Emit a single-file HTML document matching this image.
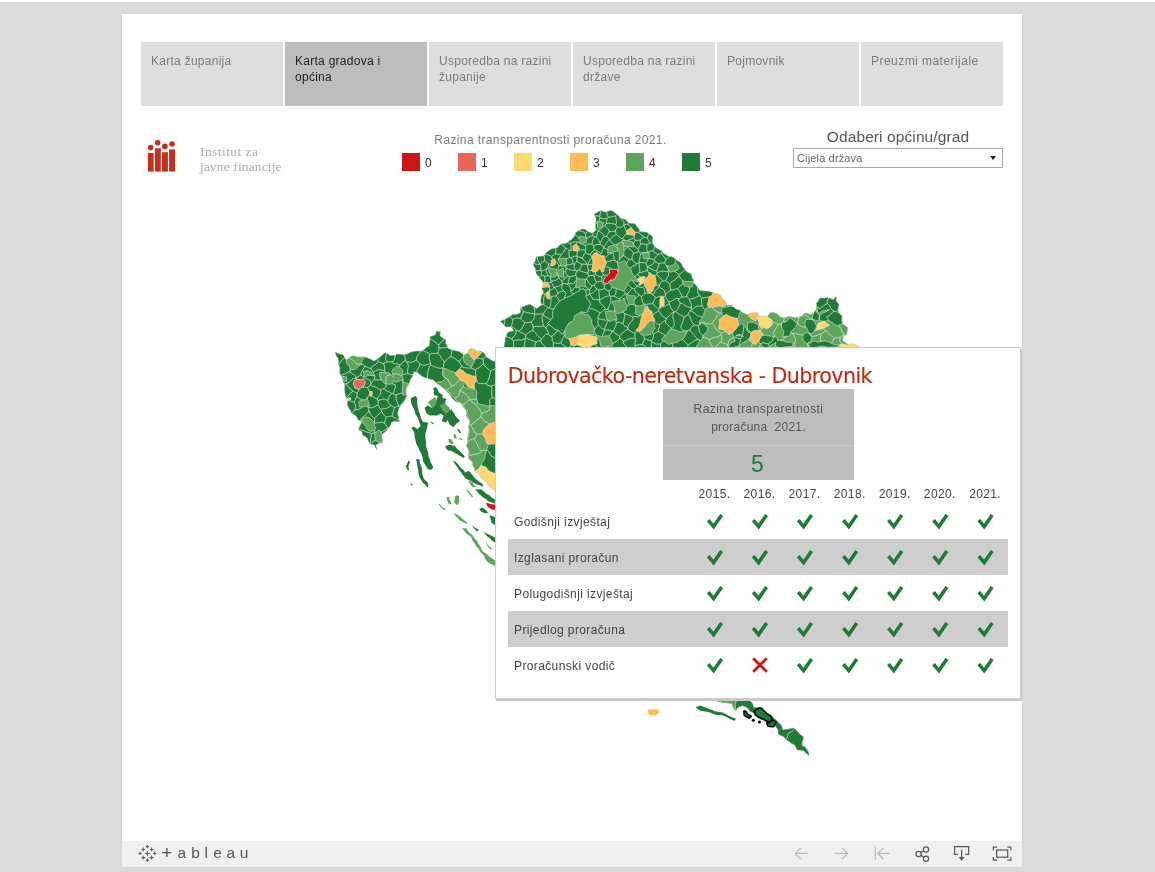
<!DOCTYPE html>
<html lang="hr">
<head>
<meta charset="utf-8">
<title>Razina transparentnosti proračuna 2021.</title>
<style>
*{box-sizing:border-box;margin:0;padding:0}
html,body{width:1155px;height:872px;overflow:hidden;background:#dbdbdb;font-family:"Liberation Sans","DejaVu Sans",sans-serif;}
#root{position:absolute;left:0;top:0;width:1155px;height:872px;will-change:transform}
#topstrip{position:absolute;left:0;top:0;width:1155px;height:2px;background:#fff;border-bottom:1px solid #d5d6d9;box-sizing:content-box}
#panel{position:absolute;left:122px;top:14px;width:900px;height:853px;background:#fff;box-shadow:0 0 0 1px #d7d7d7}
.tab{position:absolute;top:42px;width:142px;height:64px;background:#dedede;color:#7b7b7b;font-size:12px;line-height:16px;padding:11px 4px 0 10px;letter-spacing:.27px}
.tab.on{background:#bdbdbd;color:#1f1f1f}
#legtitle{position:absolute;left:400px;top:132px;width:301px;text-align:center;font-size:12px;line-height:16px;color:#7a7a7a;letter-spacing:.38px;white-space:nowrap}
.sw{position:absolute;top:153px;width:18px;height:18px}
.swl{position:absolute;top:156px;font-size:12px;line-height:14px;color:#333}
#ftitle{position:absolute;left:793px;top:127px;width:210px;text-align:center;font-size:15.5px;line-height:20px;color:#555;white-space:nowrap;letter-spacing:.1px}
#fbox{position:absolute;left:793px;top:148px;width:210px;height:20px;border:1px solid #a9a9a9;background:#fff;font-size:11px;line-height:18px;color:#666;padding-left:3px;letter-spacing:.15px}
#fbox i{position:absolute;right:6px;top:7px;width:0;height:0;border-left:3.5px solid transparent;border-right:3.5px solid transparent;border-top:4px solid #222}
#logotext{position:absolute;left:200px;top:145px;font-family:"Liberation Serif","DejaVu Serif",serif;font-size:13.3px;line-height:14.6px;color:#aaaaae;white-space:nowrap;letter-spacing:.2px}#logotext span{letter-spacing:.5px}
#toolbar{position:absolute;left:122px;top:841px;width:900px;height:26px;background:#f0f0f0}
#tip{position:absolute;left:495px;top:347px;width:526px;height:352px;background:#fff;border:1px solid #cdcdcd;box-shadow:1px 2px 0 0 #c8c8c8}
#tiptitle{position:absolute;left:507.7px;top:362.6px;font-family:"DejaVu Sans","Liberation Sans",sans-serif;font-size:20.6px;line-height:26px;letter-spacing:-.57px;color:#bb2a12;-webkit-text-stroke:.12px #bb2a12;white-space:nowrap}
#gbox{position:absolute;left:663px;top:389px;width:191px;height:91px;background:#bdbdbd}
#gbox .l{position:absolute;left:0;top:56px;width:191px;height:1px;background:#cbcbcb}
#gbox .t{position:absolute;left:0;top:11px;width:191px;text-align:center;font-size:12px;line-height:18px;color:#555;letter-spacing:.45px}#gbox .t span{letter-spacing:.25px}
#gbox .n{position:absolute;left:0;top:61px;width:189px;text-align:center;font-size:23px;line-height:28px;color:#217a37}
.yr{position:absolute;top:486px;width:46px;text-align:center;font-size:12px;line-height:16px;color:#444;letter-spacing:.38px}
.band{position:absolute;left:508px;width:500px;height:36px;background:#cecece}
.rl{position:absolute;left:514px;font-size:12px;line-height:16px;color:#444;letter-spacing:.38px;white-space:nowrap}
#tlogo span{position:absolute;top:844.1px;font-size:15.5px;line-height:18px;color:#555}
svg{position:absolute;left:0;top:0;overflow:visible}
</style>
</head>
<body>
<div id="root">
<div id="topstrip"></div>
<div id="panel"></div>

<div class="tab" style="left:141px">Karta županija</div>
<div class="tab on" style="left:285px">Karta gradova i<br>općina</div>
<div class="tab" style="left:429px">Usporedba na razini<br>županije</div>
<div class="tab" style="left:573px">Usporedba na razini<br>države</div>
<div class="tab" style="left:717px">Pojmovnik</div>
<div class="tab" style="left:861px;letter-spacing:.46px">Preuzmi materijale</div>
<svg width="1155" height="872" viewBox="0 0 1155 872" id="logo" style="z-index:1">
<g fill="#c3311d">
<rect x="147.8" y="152.9" width="5.9" height="18.7"/>
<rect x="154.9" y="148.3" width="5.9" height="23.3"/>
<rect x="162" y="152.2" width="5.9" height="19.4"/>
<rect x="169.1" y="149.4" width="5.9" height="22.2"/>
<circle cx="150.6" cy="147.6" r="2.8"/>
<circle cx="157.7" cy="142.8" r="2.8"/>
<circle cx="164.9" cy="146.4" r="2.8"/>
<circle cx="172.1" cy="144" r="2.8"/>
</g></svg>
<div id="logotext"><span>Institut za</span><br>javne financije</div>
<div id="legtitle">Razina transparentnosti proračuna 2021.</div>
<div class="sw" style="left:402px;background:#cc1719"></div><div class="swl" style="left:425px">0</div>
<div class="sw" style="left:458px;background:#e8675a"></div><div class="swl" style="left:481px">1</div>
<div class="sw" style="left:514px;background:#fedb72"></div><div class="swl" style="left:537px">2</div>
<div class="sw" style="left:570px;background:#fdbc57"></div><div class="swl" style="left:593px">3</div>
<div class="sw" style="left:626px;background:#5fa45c"></div><div class="swl" style="left:649px">4</div>
<div class="sw" style="left:682px;background:#217a37"></div><div class="swl" style="left:705px">5</div>
<div id="ftitle">Odaberi općinu/grad</div>
<div id="fbox">Cijela država<i></i></div>
<svg width="1155" height="872" viewBox="0 0 1155 872" id="map">
<g stroke-linejoin="round">
<path fill="#217a37" d="M505.8 349.7L504.7 348.0L504.2 345.9L504.5 343.5L505.1 341.5L505.2 340.0L504.8 338.8L505.7 337.5L506.7 334.8L507.7 332.3L509.7 331.6L511.8 331.3L513.7 330.7L511.9 328.1L510.9 326.4L508.8 327.0L506.5 327.1L504.9 326.3L503.9 324.5L502.2 322.8L499.8 321.5L500.9 321.0L502.2 320.5L503.7 319.7L505.4 318.9L507.1 318.1L508.8 317.0L510.6 315.9L512.0 314.9L513.1 314.4L514.0 314.4L515.4 314.6L517.9 314.0L520.4 312.7L520.6 310.6L520.7 308.6L520.8 306.9L522.1 306.9L523.8 306.4L525.7 305.6L527.7 304.9L529.5 304.3L531.1 304.9L532.2 305.5L533.3 306.2L534.8 307.3L536.8 308.6L538.2 307.5L539.3 306.4L540.6 305.7L542.1 305.2L541.3 303.6L540.7 301.7L540.7 299.6L541.0 297.5L542.0 295.3L542.7 293.7L543.3 292.6L543.7 291.5L542.6 290.2L541.9 288.6L542.0 286.7L542.7 284.9L543.2 283.0L542.4 281.1L541.0 279.6L539.9 278.3L539.2 277.2L538.5 276.2L537.4 275.2L536.3 273.6L535.7 271.6L535.5 269.7L535.1 267.9L534.2 266.3L533.3 264.9L532.8 263.6L534.2 262.7L535.1 261.8L535.3 260.5L535.6 258.7L536.3 256.7L538.5 256.5L540.3 256.3L541.9 256.2L543.6 256.0L544.7 254.6L545.8 253.0L547.0 251.9L548.2 251.2L549.5 250.3L551.0 249.0L553.5 248.4L555.6 248.2L556.8 248.1L557.8 247.2L559.3 245.6L560.7 244.2L562.0 243.6L563.5 243.7L565.1 243.7L566.9 243.0L568.5 241.6L570.0 240.5L571.4 239.7L572.2 238.7L573.6 237.2L574.9 235.4L575.4 233.7L575.6 232.4L576.8 231.8L578.5 230.9L580.2 229.7L582.0 229.0L583.9 229.0L586.3 230.1L588.0 231.2L589.6 232.3L591.8 233.0L593.6 232.4L594.7 231.3L595.7 230.4L595.7 228.6L595.6 227.1L595.5 225.9L595.5 224.5L595.8 222.6L596.1 220.3L595.9 218.1L595.2 216.4L594.5 215.2L594.3 213.9L596.3 212.9L598.4 211.6L600.3 210.8L601.9 210.7L603.4 211.4L604.5 211.9L605.9 211.9L607.5 211.5L609.3 210.8L611.3 210.4L612.9 211.2L614.1 212.0L615.2 212.9L616.7 214.1L618.4 215.5L619.8 217.0L621.1 218.2L623.1 218.9L625.2 219.3L626.5 220.2L627.1 221.5L628.3 222.5L630.3 223.3L632.9 223.7L635.2 223.8L635.9 225.0L636.7 226.3L637.9 227.6L639.0 229.0L639.5 230.4L640.4 231.7L642.6 231.8L645.0 231.9L646.6 232.2L647.5 232.6L648.4 233.5L650.1 234.7L652.2 236.0L652.6 237.6L652.5 238.8L652.3 240.0L652.4 241.5L653.1 243.3L653.9 245.4L655.0 246.5L655.8 247.6L657.1 248.6L659.1 249.6L661.1 250.4L662.0 251.1L662.2 252.0L662.9 253.1L664.9 254.2L666.8 255.3L668.1 256.1L669.2 256.4L670.8 256.6L672.7 257.1L674.3 257.9L675.4 259.1L676.7 260.3L678.7 261.4L680.6 262.8L681.8 264.1L682.1 265.3L682.4 266.6L683.7 268.0L685.2 269.6L686.4 271.3L688.0 272.5L689.9 273.2L691.2 273.9L691.5 275.4L691.9 277.1L692.8 278.8L693.5 280.5L693.6 282.4L694.3 283.6L695.2 284.7L696.5 285.8L697.6 287.1L698.4 288.6L699.6 290.3L702.1 290.8L704.3 291.0L705.9 291.0L707.2 291.1L708.6 291.3L710.4 291.8L712.2 292.3L713.8 292.9L715.2 293.2L716.5 293.3L717.8 294.1L719.4 294.7L720.6 295.5L721.1 296.5L721.7 297.5L722.8 299.1L724.6 300.6L726.1 302.2L726.7 303.7L727.0 305.1L729.1 305.0L731.5 305.3L733.2 306.3L734.5 307.5L735.8 308.7L737.9 309.4L739.7 309.8L740.5 310.3L740.8 311.3L742.4 312.4L744.8 313.5L746.8 314.2L748.0 314.6L749.4 313.6L751.5 313.0L753.7 312.7L755.8 312.4L757.7 311.9L758.1 314.1L758.8 316.1L761.4 316.3L764.2 316.1L766.3 316.0L767.7 315.9L768.7 314.4L770.8 312.5L772.6 312.4L774.5 312.8L776.3 313.5L777.8 314.3L779.1 316.0L781.4 317.5L783.7 317.7L785.8 317.4L787.4 316.9L788.3 316.5L789.2 316.5L791.1 316.7L793.5 317.4L795.8 317.7L797.9 317.3L800.2 316.6L802.4 316.1L803.4 314.5L804.1 312.9L805.9 313.2L808.4 313.7L811.0 314.3L812.7 313.4L814.0 312.5L815.1 311.1L816.1 309.3L816.2 306.8L816.0 305.2L816.0 303.8L817.5 302.0L819.0 299.4L820.4 297.7L822.7 297.9L824.9 297.9L827.3 297.5L828.8 298.0L830.2 298.5L831.8 299.0L833.6 299.5L834.8 297.9L835.9 296.2L836.3 297.8L836.2 299.4L836.1 301.1L838.7 303.7L839.0 305.4L839.0 307.1L838.4 308.9L838.1 310.0L838.4 311.6L839.8 313.6L841.6 315.3L842.2 316.7L842.2 317.7L842.1 318.9L842.1 320.3L842.4 321.9L842.6 323.6L843.9 324.5L845.4 325.9L847.9 327.3L847.3 329.7L847.3 332.2L846.8 334.0L845.5 335.2L843.5 336.3L842.8 337.9L842.7 339.7L843.3 341.5L845.1 342.3L846.3 343.3L847.4 344.3L848.9 345.1L852.4 343.0L853.9 344.5L855.3 344.7L857.2 345.4L859.7 346.6L861.6 348.5L862.6 349.9L861.2 349.6L859.6 349.0L857.6 348.5L855.3 348.3L853.4 348.4L852.0 348.8L850.7 349.1L849.5 349.3L848.1 349.3L846.3 349.3L844.5 349.3L842.9 349.3L841.7 349.2L840.5 348.9L838.8 348.6L836.4 348.3L834.1 348.4L832.3 348.7L831.0 349.3L830.1 349.8L829.1 350.0L827.5 349.7L825.4 349.1L823.4 348.4L822.0 348.0L820.9 348.1L819.6 348.6L817.6 349.3L815.2 349.8L813.1 349.8L811.4 349.6L810.3 349.1L809.6 348.7L808.4 348.5L806.6 348.6L804.5 348.7L802.6 348.9L801.2 349.0L800.0 349.1L798.4 349.2L796.4 349.4L794.3 349.5L792.3 349.4L790.8 349.1L789.8 348.6L788.9 348.2L787.5 348.1L785.6 348.5L783.7 349.2L782.0 349.8L780.4 350.0L778.7 349.8L777.0 349.2L775.2 348.5L773.5 348.1L771.7 348.1L770.3 348.5L769.2 349.1L767.9 349.5L766.3 349.7L764.7 349.5L763.1 349.2L761.3 348.9L759.3 348.8L757.3 348.7L755.7 348.7L754.3 348.7L752.8 348.7L751.4 348.8L749.9 349.1L748.3 349.5L746.7 349.7L745.3 349.7L744.0 349.3L742.4 348.6L740.3 348.1L738.0 348.0L736.1 348.4L734.7 349.0L733.5 349.7L732.4 350.0L731.0 349.9L729.1 349.3L727.2 348.7L725.6 348.2L724.5 348.2L723.3 348.5L721.5 349.0L719.1 349.3L716.8 349.4L715.1 349.4L713.8 349.3L712.9 349.2L711.9 349.1L710.3 349.0L708.2 348.8L706.2 348.5L704.8 348.4L703.7 348.6L702.3 349.0L700.3 349.5L698.0 349.9L695.9 349.9L694.2 349.4L693.2 348.7L692.4 348.1L691.2 348.0L689.4 348.3L687.3 348.9L685.4 349.6L684.0 349.9L682.7 349.8L681.0 349.4L679.0 348.8L677.1 348.5L675.2 348.4L673.7 348.6L672.6 348.8L671.6 349.0L670.2 349.1L668.4 349.2L666.5 349.3L664.8 349.4L663.1 349.4L661.4 349.2L659.6 348.8L658.0 348.4L656.3 348.2L654.7 348.3L653.3 348.8L652.0 349.4L650.5 349.9L649.0 350.0L647.5 349.6L646.0 348.9L644.1 348.2L642.0 348.0L640.0 348.2L638.4 348.8L637.1 349.4L635.7 349.7L634.3 349.7L632.8 349.4L631.0 349.0L629.4 348.7L628.1 348.6L626.8 348.7L625.3 348.7L623.1 348.8L620.7 348.9L618.8 349.0L617.4 349.3L616.3 349.5L615.3 349.6L613.9 349.4L611.9 349.0L609.9 348.4L608.3 348.1L607.2 348.1L606.1 348.7L604.2 349.4L601.9 349.9L599.6 350.0L597.8 349.7L596.6 349.0L595.8 348.4L594.8 348.1L593.1 348.3L591.0 348.7L589.0 349.2L587.5 349.5L586.4 349.5L585.0 349.4L583.0 349.2L580.8 349.0L578.7 348.9L577.1 348.8L576.0 348.7L575.2 348.6L573.9 348.6L572.1 348.8L570.1 349.2L568.3 349.6L566.8 349.8L565.3 349.7L563.6 349.1L561.8 348.5L559.9 348.0L558.0 348.0L556.6 348.5L555.5 349.2L554.3 349.8L552.8 350.0L551.2 349.7L549.4 349.1L547.7 348.6L545.9 348.3L544.0 348.4L542.2 348.7L540.7 349.0L539.1 349.2L537.6 349.3L536.2 349.3L534.7 349.3L533.2 349.3L531.7 349.2L530.4 349.0L528.8 348.7L526.9 348.4L524.6 348.3L522.6 348.6L521.1 349.1L519.8 349.7L518.6 350.0L517.3 349.8L515.6 349.3L513.7 348.6L512.0 348.0L510.8 348.0L509.7 348.4L508.1 349.1ZM335.8 352.0L337.3 353.1L339.9 354.0L342.9 354.7L343.9 356.0L344.4 357.3L345.1 358.6L346.3 359.8L348.0 359.0L349.4 357.6L350.9 356.3L352.5 355.7L354.0 356.0L355.3 356.2L356.8 356.8L358.8 357.0L361.1 357.0L363.1 356.8L364.6 356.8L365.9 357.3L367.6 357.9L369.6 358.7L371.7 359.7L373.6 360.9L375.3 360.3L376.8 359.3L377.9 358.4L379.7 357.5L381.8 355.6L383.8 353.6L385.1 352.6L387.1 353.4L388.5 354.3L389.2 354.9L390.1 355.4L391.8 355.5L393.9 355.5L395.6 355.3L396.9 354.2L398.8 353.9L401.1 354.3L403.1 354.8L405.1 354.7L407.2 354.0L408.9 353.1L410.0 352.5L411.1 352.1L412.4 351.8L414.1 351.4L416.4 351.0L418.9 350.9L420.8 351.0L422.1 350.9L423.4 350.1L424.9 348.9L426.3 347.4L427.9 346.6L429.5 345.9L429.5 344.6L429.7 342.8L429.8 340.7L429.9 338.6L430.2 336.7L431.6 336.1L433.3 335.7L435.3 334.9L436.1 332.8L436.2 331.1L438.2 331.8L440.5 331.7L440.1 333.8L440.1 335.9L441.3 337.0L443.1 338.1L444.9 339.2L445.8 340.2L445.5 341.8L445.6 343.2L446.3 344.4L447.2 346.0L448.0 348.2L449.7 348.9L451.4 349.6L453.3 350.2L455.0 350.6L456.7 350.9L458.4 351.2L460.0 352.1L461.7 353.1L462.8 354.2L463.6 355.3L465.2 354.3L466.8 353.5L468.2 353.1L468.4 351.3L468.4 349.3L470.0 348.9L471.5 348.0L472.8 348.8L474.7 349.4L476.3 350.1L477.5 351.0L479.2 351.0L481.0 351.6L483.0 352.3L484.6 353.7L485.2 355.0L485.7 356.3L487.1 357.6L489.3 358.7L491.0 359.9L492.5 360.9L494.5 361.6L496.3 362.0L497.6 361.2L499.0 361.0L499.4 362.9L500.1 365.2L500.8 367.5L501.0 369.2L500.6 370.6L499.9 371.6L499.3 372.6L499.1 373.9L499.5 375.7L500.0 377.6L500.4 379.3L500.5 380.9L500.4 382.5L500.2 384.3L500.0 386.1L499.9 388.0L499.7 389.7L499.6 391.2L499.6 392.3L499.8 393.5L500.2 394.8L500.7 396.2L500.8 397.9L500.5 400.1L499.8 402.4L499.1 404.4L499.0 406.0L499.4 407.2L500.2 408.3L500.9 409.4L501.0 410.9L500.5 412.8L499.8 414.6L499.3 416.1L499.3 417.6L499.6 419.3L500.0 421.2L500.3 423.1L500.4 425.0L500.3 426.7L500.2 427.9L500.1 428.9L500.0 430.1L499.7 431.5L499.5 433.1L499.4 435.0L499.7 437.2L500.3 439.4L500.8 441.2L500.9 442.6L500.4 443.8L499.7 445.0L499.1 446.3L499.0 447.9L499.5 449.8L500.3 451.4L500.9 452.8L500.9 454.3L500.4 456.2L499.8 458.2L499.4 460.2L499.4 462.0L499.7 463.5L500.0 464.5L500.2 465.5L500.3 466.8L500.3 468.3L500.3 470.1L500.3 472.1L500.1 474.3L499.7 476.4L499.3 478.0L499.3 479.3L499.7 480.5L500.4 481.8L500.9 483.2L500.9 485.0L500.4 486.7L499.6 488.2L499.0 489.5L499.1 491.1L499.6 493.1L500.4 495.2L498.3 493.6L496.8 492.1L495.8 491.4L494.7 490.7L493.0 489.8L491.4 488.6L490.2 487.2L489.1 485.9L487.8 484.6L486.9 483.4L486.2 482.2L485.0 480.9L483.0 479.6L481.0 477.9L479.8 476.0L479.1 474.3L477.8 473.2L476.0 472.5L474.8 471.4L474.6 469.8L474.1 468.1L473.3 466.6L472.5 465.2L472.3 463.8L472.2 462.3L471.3 461.0L469.7 459.7L468.4 458.2L468.1 456.3L468.7 454.0L469.0 451.8L468.5 449.9L467.5 448.0L466.7 446.5L466.4 445.3L466.8 444.4L467.1 443.0L467.4 441.0L467.6 438.6L467.8 436.2L468.3 434.3L468.7 432.9L468.9 431.4L468.9 429.7L468.8 428.1L468.4 426.4L468.8 424.8L469.6 423.2L469.8 421.3L468.4 418.9L466.6 416.6L466.1 414.6L466.5 412.7L466.5 410.7L465.3 409.1L463.9 407.7L463.0 406.3L462.3 404.9L461.3 403.4L459.3 402.6L457.8 402.2L456.9 401.9L455.8 401.4L454.1 400.3L452.2 398.2L451.1 396.4L450.5 395.0L449.6 393.7L448.2 392.5L446.7 391.2L445.2 389.9L443.6 388.6L442.2 387.5L441.2 386.6L440.5 385.8L439.2 385.1L437.3 384.1L435.8 382.6L434.6 381.2L433.5 380.2L432.1 379.6L430.7 379.4L429.7 379.1L428.3 378.5L426.3 378.0L424.1 377.3L422.2 376.4L420.8 375.4L419.8 374.4L418.6 373.4L417.1 372.6L415.4 372.1L413.8 371.7L413.1 374.2L412.3 376.5L411.4 378.0L410.4 379.2L409.9 381.3L409.2 383.5L408.4 385.1L407.5 386.4L406.7 388.0L406.2 390.3L406.2 392.6L406.5 394.2L406.9 395.5L406.5 396.3L405.8 397.7L404.9 399.7L403.6 401.8L402.3 403.5L400.9 404.6L400.3 405.9L399.4 407.6L398.7 409.5L398.0 411.4L397.7 413.2L398.0 415.1L398.5 416.4L398.8 417.9L399.1 419.7L399.7 421.8L397.9 421.5L396.0 421.2L394.5 421.2L393.1 421.7L391.4 422.5L390.8 424.7L389.9 426.5L388.8 427.7L387.7 428.7L386.5 430.3L385.1 431.8L383.7 433.0L382.5 433.9L381.7 435.3L382.0 437.4L382.4 439.7L382.5 441.7L382.1 443.2L379.5 443.1L377.5 443.9L375.7 445.2L376.4 447.4L376.9 449.1L376.7 450.3L376.2 448.7L374.9 446.8L373.9 444.6L371.7 444.4L369.5 443.5L368.7 442.1L368.1 440.3L367.4 438.5L366.0 437.0L364.1 436.1L362.7 435.0L362.3 433.5L361.8 431.6L358.4 430.1L359.0 427.8L360.3 425.2L361.5 423.2L362.0 421.9L360.7 421.1L358.9 420.3L357.6 418.9L356.7 417.0L355.3 415.4L353.2 414.1L351.5 413.0L351.0 411.8L350.9 410.7L349.8 409.5L348.8 407.9L347.8 406.3L347.4 404.5L347.4 402.4L347.3 400.7L346.6 399.6L346.0 398.2L345.6 396.5L345.4 395.2L345.0 393.6L344.6 391.3L344.7 388.8L344.6 386.8L344.9 385.1L344.7 383.9L343.8 382.7L342.9 381.2L342.5 379.3L342.2 377.7L341.4 376.1L340.3 374.5L339.7 372.5L339.8 370.4L339.9 368.7L339.6 367.2L338.9 365.4L338.5 363.3L338.5 361.3L338.4 359.7L337.7 358.0L336.6 356.2L335.7 354.7L335.5 353.3ZM712.1 699.5L714.1 699.8L715.5 699.7L716.8 699.3L718.3 698.9L720.0 698.6L721.6 698.6L723.0 698.7L724.5 698.8L726.0 698.9L727.5 699.0L729.5 699.1L731.7 699.4L733.7 699.6L735.4 699.5L737.0 699.2L738.5 698.6L739.8 698.2L741.1 698.1L742.5 698.5L744.3 699.2L746.1 699.8L747.8 700.0L749.6 699.8L750.6 701.4L752.0 703.0L753.1 704.5L753.4 706.0L753.9 707.5L755.8 707.6L757.9 707.4L760.1 707.1L762.0 707.3L763.3 708.8L764.8 710.7L766.1 712.1L766.9 712.9L768.2 713.6L770.0 714.4L771.6 715.4L772.6 716.5L773.3 717.6L774.4 718.7L775.7 719.8L776.9 721.0L778.1 722.3L779.8 723.6L781.3 725.2L782.1 727.1L782.4 728.8L783.1 729.9L784.9 729.4L787.3 729.1L790.0 728.8L792.1 728.3L793.5 727.7L794.6 728.8L796.0 730.0L797.4 731.0L798.1 732.1L798.6 733.0L799.7 734.0L801.4 735.2L803.2 736.5L803.4 738.9L802.8 741.1L802.2 743.0L802.0 744.6L802.6 745.9L804.4 746.6L805.4 747.3L806.2 748.6L807.3 750.2L808.5 752.1L809.1 753.9L808.9 756.1L807.9 754.8L806.4 753.5L804.7 752.1L803.7 750.9L802.4 750.5L799.8 750.3L797.0 749.9L796.1 748.6L795.8 746.7L794.5 745.1L792.6 744.0L791.2 743.3L790.2 742.5L788.7 741.4L786.8 740.2L785.5 739.0L784.7 737.8L783.3 736.6L780.2 735.3L778.1 733.9L778.2 732.1L778.0 730.0L776.6 727.8L775.3 726.3L773.8 726.4L772.5 726.4L770.9 726.1L768.9 725.7L767.5 724.4L766.7 723.0L765.6 721.8L763.8 720.6L761.6 719.7L759.8 718.8L758.7 718.0L757.8 717.1L756.4 716.3L755.0 715.6L754.3 714.2L753.3 713.1L751.6 712.1L750.0 711.4L749.0 710.0L747.9 708.5L746.2 707.3L744.2 706.4L742.5 705.7L740.1 706.7L737.9 707.5L736.6 709.2L735.4 710.9L734.3 709.2L733.1 707.3L732.3 705.4L732.1 703.8L730.2 703.5L728.3 703.3L726.4 703.0L724.6 702.8L722.9 702.7L721.5 702.3L720.2 702.0L718.7 701.7L716.9 701.4L715.5 701.0L714.2 700.3Z"/>
<path fill="#217a37" fill-rule="evenodd" stroke="#dce8dc" stroke-width="0.44" d="M827.5 303.6L827.1 302.4L827.0 301.3L827.6 299.9L828.8 298.0L827.2 297.5L824.9 297.9L822.7 297.9L820.4 297.7L819.0 299.4L817.5 302.0L816.0 303.8L816.4 305.1L816.8 306.4L818.6 307.8L819.1 308.8L820.3 308.3L821.8 307.3L823.7 305.8L825.8 304.3ZM834.1 311.2L835.8 311.3L836.5 311.5L837.2 312.0L839.0 312.7L838.1 310.4L838.4 308.8L839.0 307.1L839.0 305.4L838.7 303.7L836.1 301.1L836.2 299.4L836.3 297.8L835.9 296.2L834.8 297.9L833.6 299.5L831.8 299.0L830.2 298.5L828.8 298.0L827.6 299.9L827.0 301.3L827.1 302.4L827.5 303.6L829.1 305.0L830.2 306.7L830.9 308.6L832.3 310.2ZM817.0 309.2L817.3 310.8L817.5 311.9L819.2 313.5L821.1 311.9L822.8 311.1L824.4 310.5L826.7 310.2L829.3 309.7L827.4 310.9L825.6 311.9L824.4 312.4L823.5 312.7L822.4 313.2L821.2 314.2L819.7 315.5L819.5 318.2L819.0 320.5L820.5 320.9L822.2 321.2L824.2 321.4L826.6 321.1L828.6 321.0L828.2 319.5L827.7 318.2L826.6 316.9L827.2 316.6L828.4 315.9L830.5 314.3L832.5 312.4L834.1 311.2L832.3 310.2L830.9 308.6L830.2 306.7L829.1 305.0L827.5 303.6L825.8 304.3L823.7 305.8L821.8 307.3L820.3 308.3L819.1 308.8L818.6 307.8L816.8 306.4ZM826.6 316.9L827.7 318.2L828.2 319.5L828.6 321.0L829.2 321.1L830.9 322.0L832.8 323.1L834.5 324.2L835.7 325.1L836.7 325.8L838.3 325.4L840.4 324.6L842.6 323.6L842.4 321.9L842.1 320.3L842.0 318.8L842.2 317.7L842.2 316.7L841.6 315.3L839.0 312.7L837.2 312.0L836.5 311.5L835.8 311.3L834.1 311.2L832.5 312.4L830.5 314.3L828.4 315.9L827.2 316.6ZM813.7 312.8L813.2 314.3L812.5 315.9L812.3 317.7L812.9 319.5L815.7 320.4L818.1 321.3L818.8 319.6L819.3 317.7L819.7 315.5L818.2 314.1L817.0 312.9L816.7 311.9L816.8 310.9L816.1 309.3L815.0 311.3ZM723.1 316.4L724.9 315.5L726.3 314.6L727.5 315.2L728.7 315.9L730.4 316.7L732.2 317.3L733.7 317.8L734.8 318.1L736.3 318.3L738.7 318.3L738.9 315.8L739.3 314.0L739.9 312.7L740.8 311.2L740.5 310.3L739.7 309.8L737.9 309.4L735.9 308.7L734.5 307.5L733.4 306.9L732.2 306.5L730.1 306.4L727.6 306.7L725.5 307.1L724.1 307.4L723.1 307.5L722.2 308.7L721.5 310.2L721.7 312.2L722.5 314.4ZM733.4 337.0L733.6 337.5L733.8 337.4L734.7 339.6L734.9 341.6L733.1 341.9L731.0 342.7L729.6 344.3L729.0 345.8L728.1 346.8L729.6 347.5L731.1 347.8L733.1 347.6L735.0 347.1L736.6 346.7L739.2 345.6L739.5 343.9L740.1 341.5L740.5 338.9L738.8 338.4L736.9 338.0L735.3 337.6ZM733.2 336.5L733.4 337.0L735.3 337.6L736.9 338.0L738.8 338.4L740.5 338.9L741.6 337.5L742.0 336.0L740.0 335.6L737.8 335.6L735.8 336.0L737.8 334.7L740.1 334.4L742.1 335.6L742.6 334.2L743.0 332.3L743.4 330.2L743.7 328.2L743.8 326.6L743.9 325.1L742.2 324.1L741.5 323.1L740.2 324.3L739.0 325.2L737.6 326.6L736.4 328.4L735.1 329.9L733.8 330.9L732.7 332.1L732.8 334.1L733.3 336.5ZM739.2 345.6L741.1 344.4L743.0 342.8L744.6 341.8L746.1 341.4L746.7 340.3L747.8 339.1L749.3 337.9L750.5 336.6L751.0 335.2L750.5 333.6L749.6 332.2L749.1 332.9L747.4 331.0L746.2 328.4L745.3 326.5L743.9 325.1L743.8 326.6L743.7 328.2L743.4 330.2L743.0 332.3L742.6 334.2L742.1 335.6L743.4 336.4L742.0 336.0L741.6 337.5L740.5 338.9L740.1 341.5L739.5 343.9ZM499.8 321.5L502.5 323.0L504.2 324.9L504.7 323.0L504.9 321.1L504.7 319.2L502.8 320.2L501.2 320.9ZM587.7 231.0L586.1 230.0L583.9 229.0L581.3 229.2L578.8 230.6L581.3 231.3L583.8 232.2L585.7 233.5L586.7 231.9ZM666.0 259.3L667.4 258.4L668.6 257.3L669.7 256.5L668.4 256.2L667.1 255.5L665.1 254.3L662.9 253.1L662.1 251.8L661.6 252.9L662.4 254.9L664.4 257.3ZM591.9 256.9L591.3 258.1L590.3 259.6L588.9 262.0L587.4 264.7L587.5 264.8L589.9 264.6L592.9 264.1L592.9 261.3L592.3 259.4L592.4 257.1ZM633.4 244.4L633.7 243.1L634.3 241.8L635.2 240.4L634.1 237.9L632.0 238.8L630.1 239.3L628.9 239.8L627.7 240.7L629.2 241.1L630.5 241.7L632.6 242.2L633.2 244.5ZM600.9 210.7L598.9 211.4L596.6 212.7L594.3 213.9L594.8 215.7L596.5 215.8L598.3 216.1L599.6 216.4L600.2 214.2L600.7 212.2ZM637.3 286.2L638.5 286.7L639.9 287.2L642.5 287.5L644.7 285.5L644.3 283.3L644.2 281.2L643.9 279.9L643.7 282.6L642.0 283.7L640.7 284.6L639.5 285.2L639.9 283.3L638.7 284.7ZM601.2 228.3L600.2 228.3L599.0 227.9L597.3 227.4L597.5 226.3L597.5 224.9L597.3 223.0L595.7 223.0L595.5 224.8L595.5 226.1L595.7 227.3L595.7 228.9L597.1 229.7L598.6 230.6L599.8 229.7ZM548.3 266.0L546.3 269.0L546.2 270.7L546.6 272.2L547.4 273.8L548.2 275.7L550.6 277.2L551.0 276.9L550.8 274.9L549.8 272.6L548.6 270.4L547.9 268.5L550.6 268.1L549.3 267.0ZM644.9 293.2L646.7 293.1L648.9 293.4L651.2 293.7L651.6 291.7L648.2 292.8L647.3 290.7L646.8 289.0L646.3 287.8L645.0 286.6L644.7 285.5L642.5 287.5L643.9 288.5L644.6 289.6L644.7 291.2ZM541.1 270.8L540.6 270.4L538.0 270.7L535.6 271.1L536.1 273.2L537.2 274.9L538.4 276.0L539.2 277.0L541.4 275.1L541.4 273.6L541.4 272.3ZM544.3 276.2L541.4 275.1L539.2 277.0L539.8 278.2L540.9 279.7L542.4 281.3L543.2 283.0L542.8 284.5L543.0 284.3L543.3 283.0L544.2 282.8L544.9 280.7L544.9 278.6ZM580.0 290.4L581.6 289.3L583.5 288.7L584.4 290.0L587.0 289.9L589.3 289.6L587.2 288.0L585.2 286.4L585.3 286.8L583.5 286.4L582.2 286.1L580.9 286.1L579.3 286.6L579.6 288.4ZM587.5 264.8L587.4 266.8L587.9 268.4L588.5 270.1L590.2 270.7L592.0 270.6L592.2 267.5L592.9 264.1L589.9 264.6ZM603.3 275.0L601.7 276.9L602.0 279.4L601.6 281.4L602.4 282.6L603.2 283.7L604.2 284.8L606.4 283.4L603.6 282.6L603.3 280.4L604.5 278.7L605.6 276.8L606.8 275.5L606.3 274.9ZM600.1 217.9L599.6 216.4L598.3 216.1L596.5 215.8L594.8 215.7L595.5 217.0L596.0 218.7L596.1 220.9L595.7 223.0L597.3 223.0L597.2 221.6L598.9 221.8L599.3 220.0ZM589.6 294.1L589.3 293.1L589.6 292.3L589.9 291.2L589.5 289.6L587.1 289.9L584.4 290.0L586.1 292.5L586.2 294.4L585.9 296.2L587.5 295.1L589.5 294.5ZM649.5 242.9L650.8 243.1L652.9 243.0L652.3 240.9L652.4 239.3L652.7 237.8L652.2 236.0L649.3 234.2L648.1 235.6L647.2 237.6L648.6 240.5ZM537.5 256.6L536.3 256.7L535.6 258.5L535.4 260.3L535.1 261.6L534.4 262.5L533.2 263.3L535.0 263.8L536.8 264.3L538.4 264.5L539.9 264.3L538.6 262.1L537.5 259.9L537.4 258.2ZM627.8 224.3L626.0 224.3L624.1 225.3L624.8 227.9L626.0 230.4L626.7 232.4L626.4 233.9L627.1 234.0L627.3 232.7L626.4 230.9L628.3 229.7L629.8 228.5L630.9 228.1L631.7 228.4L631.0 227.1L629.6 225.8ZM545.1 294.2L543.1 292.9L542.6 293.9L541.9 295.4L541.0 297.5L540.7 299.9L540.9 302.4L541.7 304.4L543.7 304.5L543.7 302.0L543.6 299.3L543.9 297.2L544.4 295.7ZM550.6 277.2L550.4 279.1L551.2 281.0L553.5 280.8L555.9 280.2L557.7 279.1L558.8 278.0L558.3 276.1L557.6 274.6L557.1 273.6L555.9 273.0L556.1 274.1L557.0 275.4L555.5 276.1L554.1 276.8L552.5 277.1L551.0 276.9ZM571.7 257.8L572.3 259.8L572.8 261.8L572.9 263.8L574.3 264.1L575.9 262.6L576.8 261.0L577.0 258.6L577.3 256.4L577.0 256.1L574.6 256.2L572.9 256.8ZM575.3 250.7L573.1 249.5L573.1 246.2L574.3 244.9L576.1 244.3L577.3 242.0L575.4 241.9L573.9 241.8L572.9 242.0L571.8 242.6L570.2 243.4L571.1 245.5L571.2 247.4L571.0 248.9L571.1 250.4ZM627.8 224.3L629.1 222.9L627.1 221.5L626.4 220.1L625.1 219.3L622.9 218.8L620.9 218.1L619.6 216.8L620.3 218.5L621.5 219.6L623.2 220.5L624.1 221.9L623.9 223.5L624.2 225.2L626.0 224.2ZM590.2 254.5L591.3 255.6L591.9 256.9L592.4 257.1L593.0 255.1L594.2 253.2L597.2 252.7L598.9 255.0L599.6 255.2L600.9 253.4L599.1 252.1L597.8 251.2L596.5 250.6L594.4 250.0L592.8 251.2L591.2 252.8ZM547.9 283.1L549.1 285.1L550.0 287.0L548.4 286.8L549.4 288.4L549.4 290.7L550.9 289.9L552.3 289.3L553.2 288.3L553.7 287.0L552.9 285.3L552.2 283.8L550.9 282.4ZM595.3 236.9L596.0 237.0L596.8 235.3L597.1 233.3L597.7 231.7L598.6 230.6L597.1 229.7L595.7 228.9L595.7 230.4L594.5 231.5L592.9 232.7L593.0 234.6L592.3 235.9ZM595.4 274.3L596.8 275.5L599.0 276.5L601.7 276.9L603.3 275.0L602.5 273.2L602.1 271.3L601.2 271.3L600.8 269.7L600.3 268.2L598.7 269.6L596.9 271.4L595.7 271.6ZM561.8 281.0L562.9 279.7L564.1 279.2L565.2 278.7L566.3 277.6L567.5 275.9L566.3 273.8L565.4 271.5L563.4 272.0L563.6 274.9L564.2 277.6L562.1 277.0L560.5 276.3L559.0 276.0L558.3 274.5L557.7 273.5L557.1 273.6L557.6 274.6L558.3 276.1L558.8 278.0L560.0 279.5ZM585.6 236.6L586.0 237.1L586.6 237.0L586.6 237.8L587.1 238.3L588.7 237.2L590.3 236.4L592.3 235.9L593.0 234.6L592.9 232.7L591.8 233.0L589.4 232.2L587.7 231.0L586.7 231.9L585.7 233.5ZM546.3 294.2L546.6 292.3L547.7 291.7L549.1 291.4L549.4 290.7L549.4 288.4L548.4 286.8L545.2 287.0L542.3 287.7L542.4 286.0L543.0 284.3L542.8 284.5L542.1 286.5L541.9 288.4L542.6 290.1L543.7 291.5L543.1 292.9L545.1 294.2ZM541.1 270.8L541.4 272.3L541.4 273.6L541.4 275.1L544.3 276.2L548.2 275.7L547.4 273.8L546.6 272.2L546.2 270.7L546.3 269.0L544.7 270.1L543.2 270.6ZM589.5 289.6L591.0 287.6L592.0 285.6L590.3 284.3L588.8 283.0L588.0 281.6L587.3 280.2L586.3 279.0L585.3 279.6L585.3 281.4L585.2 283.2L585.0 284.8L585.2 286.4L587.3 288.0ZM636.7 286.4L637.3 286.2L638.7 284.7L639.9 283.3L639.1 281.1L637.5 278.9L640.6 277.3L638.5 275.6L637.7 274.3L636.9 274.7L635.0 277.1L635.8 278.4L636.8 280.0L638.5 281.7L636.2 281.2L634.4 280.8L632.7 280.3L633.2 281.8L634.3 283.3L635.9 284.8ZM640.4 231.7L639.6 230.6L638.8 232.1L639.7 233.7L641.5 235.1L643.1 236.1L643.3 237.2L644.1 237.3L645.3 237.5L647.2 237.6L648.1 235.6L649.3 234.2L647.9 233.0L647.0 232.3L645.4 232.0L642.9 231.8ZM652.6 294.8L654.0 293.4L654.6 291.7L655.3 290.4L656.5 289.5L657.8 288.4L659.1 286.7L659.5 284.9L658.0 285.2L655.6 285.2L654.5 286.7L653.7 287.8L653.5 289.4L652.8 290.6L651.6 291.7L651.2 293.7ZM612.1 331.0L609.9 330.2L607.4 329.9L605.2 329.9L604.4 331.2L603.6 332.4L602.9 334.2L602.2 336.4L604.5 336.2L606.3 336.0L607.5 335.9L608.6 336.1L610.1 334.6L611.4 333.1ZM540.4 264.4L539.9 264.3L538.4 264.5L536.8 264.3L535.0 263.8L533.2 263.3L532.8 263.6L533.4 265.1L534.6 266.9L535.4 268.9L535.6 271.1L538.0 270.7L540.6 270.4L540.6 269.0L540.8 267.7L540.7 266.3ZM593.9 344.5L592.7 345.0L591.3 346.0L589.6 347.5L588.0 348.0L586.0 347.8L583.1 346.9L582.9 348.8L583.1 349.2L585.2 349.4L586.6 349.6L587.8 349.5L589.5 349.1L591.7 348.5L593.8 348.1L595.3 348.2L596.1 348.7L597.2 349.4L597.3 346.5L595.9 345.3ZM594.0 275.4L594.7 274.7L595.4 274.3L595.7 271.6L593.1 272.1L592.0 270.6L590.2 270.7L588.5 270.1L587.9 273.1L588.3 274.7L588.7 276.0L590.7 275.6L592.6 275.3ZM540.4 264.4L541.7 262.9L543.1 261.4L544.7 260.8L544.7 259.2L544.4 257.4L544.3 255.1L543.6 256.0L542.1 256.1L540.7 256.2L539.3 256.4L537.5 256.6L537.4 258.2L537.5 259.9L538.6 262.1L539.9 264.3ZM625.3 293.7L623.9 294.6L622.4 296.1L620.9 297.6L619.2 298.7L619.7 300.7L621.4 300.2L622.7 299.3L624.2 298.1L624.6 300.5L625.7 302.8L626.8 304.7L627.1 306.2L629.1 304.8L629.0 302.9L628.2 300.8L627.1 298.9L626.4 297.2L626.3 295.7L626.4 294.1ZM629.1 259.2L626.9 257.6L625.0 256.3L623.6 255.6L622.3 256.4L621.0 257.8L619.6 259.6L618.3 261.1L617.0 262.1L618.2 262.9L619.8 262.6L621.8 261.8L624.2 260.8L625.8 262.1L626.5 263.4L627.6 261.3L628.5 260.2ZM627.5 284.1L626.8 285.8L626.0 287.7L625.1 289.5L624.2 290.7L623.3 290.6L624.1 291.5L624.7 292.3L625.3 293.7L626.4 294.1L626.5 293.8L626.8 294.0L628.2 293.0L629.7 291.4L631.1 289.6L632.1 288.2L630.3 286.7L628.7 285.5ZM577.0 271.0L578.4 270.3L580.0 268.9L581.1 266.7L581.8 264.3L579.8 263.2L577.9 262.1L576.8 261.0L575.9 262.6L574.3 264.1L574.2 265.8L574.2 267.4L574.7 268.9L575.4 270.3ZM575.4 270.3L574.7 268.9L574.2 267.4L574.2 265.8L574.3 264.1L572.9 263.8L570.5 264.3L568.3 264.6L566.5 265.0L565.7 266.3L566.3 268.3L568.1 269.0L569.6 269.6L571.1 270.1L573.0 270.3ZM555.3 262.0L555.0 264.7L552.7 265.7L550.7 265.7L551.6 263.7L549.9 264.0L548.4 263.9L548.3 266.0L549.3 267.0L550.6 268.1L552.3 268.6L554.4 269.1L556.9 269.4L556.8 269.9L558.4 267.9L559.1 265.5L557.0 262.3ZM640.5 240.1L639.5 240.1L637.6 240.3L635.2 240.4L634.3 241.8L633.7 243.1L633.4 244.4L634.7 245.9L635.7 247.3L637.8 248.8L638.7 247.6L639.8 245.9L640.9 243.8L640.2 241.9ZM557.1 273.6L557.7 273.5L557.8 272.2L558.6 270.2L560.1 269.7L561.6 269.0L563.2 268.5L563.2 270.1L563.4 272.0L565.4 271.5L565.8 269.7L566.3 268.3L565.7 266.3L563.8 265.7L561.4 266.4L561.3 265.4L559.1 265.5L558.4 267.9L556.8 269.9L556.3 271.6L555.9 273.0ZM600.1 242.7L601.2 241.0L602.2 239.1L603.2 237.5L604.3 236.3L603.2 234.4L600.8 232.4L598.6 230.8L597.7 231.8L597.2 233.5L596.8 235.4L596.0 237.0L597.7 238.5L598.8 240.1L599.4 241.5ZM634.3 349.7L635.7 349.7L637.2 349.4L638.6 348.7L640.3 348.1L642.4 348.0L644.6 348.4L646.5 349.1L648.1 349.8L646.9 348.0L645.1 346.3L643.3 345.1L642.0 344.5L640.6 344.7L639.0 344.8L637.2 345.1L635.1 345.5L634.3 348.0ZM573.9 293.9L575.8 292.7L577.1 292.1L577.8 291.7L578.8 291.3L580.0 290.4L579.6 288.4L579.2 286.7L576.4 287.9L576.1 286.9L575.1 286.9L573.9 288.4L573.3 289.3L572.4 290.0L570.8 291.3L572.1 292.8ZM555.6 253.6L555.8 251.6L555.9 249.7L555.5 248.2L553.4 248.4L551.0 249.0L549.5 250.3L548.2 251.1L547.0 251.9L545.8 253.0L544.7 254.5L546.7 254.6L548.7 255.0L550.3 255.8L551.4 256.6L552.3 256.0L553.7 255.0ZM654.8 246.3L654.3 248.6L653.9 249.7L652.6 250.7L653.8 252.1L655.5 253.2L657.2 254.0L658.2 254.4L660.1 253.9L661.6 252.9L662.1 251.8L661.9 251.0L660.7 250.2L658.7 249.4L656.7 248.4L655.6 247.4ZM609.5 239.9L608.6 240.5L607.6 241.5L606.4 243.3L605.0 245.5L603.6 247.0L604.2 248.0L606.4 249.0L608.2 249.9L608.0 247.2L610.1 246.2L612.1 245.4L613.4 245.4L614.1 244.5L612.7 243.1L610.8 241.6ZM576.6 279.3L576.0 278.1L576.8 278.3L576.5 276.4L575.8 275.5L574.7 275.8L573.4 276.0L571.6 276.3L569.6 276.8L569.1 279.2L568.4 281.7L568.4 283.7L570.4 283.9L572.5 283.6L574.7 282.9ZM563.8 265.7L565.7 266.3L566.5 265.0L568.3 264.6L570.5 264.3L572.9 263.8L572.8 261.8L572.3 259.8L571.7 257.8L569.4 257.4L567.6 258.3L565.5 258.7L565.8 259.1L566.3 259.2L566.6 260.8L566.5 262.5L566.0 264.1L565.7 265.6ZM567.6 242.4L570.2 243.4L571.8 242.6L572.9 242.0L573.9 241.8L575.4 241.9L577.3 242.0L577.5 241.8L580.5 243.3L580.0 240.7L579.8 237.7L578.5 238.4L577.9 236.8L576.6 235.8L575.2 234.8L574.0 236.8L572.4 238.5L571.4 239.7L569.5 240.8ZM562.3 283.8L560.6 285.3L558.6 286.3L556.5 286.7L554.8 287.4L555.9 289.2L556.9 290.9L557.4 292.2L557.9 293.3L559.4 292.2L561.5 291.4L564.0 291.2L562.6 289.7L561.7 288.6L561.7 287.4L562.1 285.8ZM604.9 225.8L606.4 223.4L606.4 221.6L607.0 220.0L607.2 218.6L605.1 218.8L602.3 218.6L600.1 217.9L599.3 220.0L598.9 221.8L600.9 222.1L603.2 222.3L603.2 223.5L602.6 225.2L601.8 227.1L601.8 227.3L603.1 226.5ZM544.3 276.2L544.9 278.6L544.9 280.7L544.2 282.8L544.9 282.7L546.0 282.6L547.6 282.5L547.9 283.1L550.9 282.4L551.2 281.0L550.4 279.1L550.6 277.2L548.2 275.7ZM594.0 275.4L594.2 277.2L594.7 279.0L595.6 280.6L596.4 282.2L598.5 281.5L600.1 281.3L601.6 281.4L602.0 279.4L601.7 276.9L599.0 276.5L596.8 275.5L595.4 274.3L594.7 274.7ZM615.6 216.0L616.9 214.3L615.3 213.0L614.1 212.0L612.9 211.2L611.3 210.4L608.8 211.0L606.6 211.7L607.0 214.1L607.8 215.9L608.2 217.4L609.9 217.2L611.5 217.0L612.7 216.6L613.8 216.2ZM648.3 258.5L646.1 258.6L643.8 258.8L643.3 256.5L642.9 254.5L642.5 253.0L644.8 252.7L647.1 252.9L645.5 252.6L643.7 252.6L642.3 252.8L641.1 253.4L640.5 255.0L640.1 256.5L639.9 258.0L639.6 259.3L639.4 260.7L639.3 262.7L641.4 262.4L643.7 262.6L645.6 263.2L646.7 262.1L647.6 260.3ZM592.2 244.3L593.7 246.1L594.6 245.0L596.2 244.4L598.3 244.4L600.3 244.5L600.1 242.7L599.4 241.5L598.8 240.1L597.7 238.5L596.0 237.0L595.3 236.9L593.8 238.3L592.6 240.0L592.3 242.1ZM652.6 250.7L649.8 251.3L647.5 252.3L647.1 252.9L649.2 252.8L648.9 255.1L649.2 257.0L650.0 258.5L651.8 259.1L652.9 259.5L654.0 259.8L655.1 257.8L656.7 255.8L658.2 254.4L657.2 254.0L655.5 253.2L653.8 252.1ZM567.0 284.0L568.7 285.4L570.2 287.2L570.7 289.2L570.8 291.3L572.4 290.0L573.3 289.3L573.9 288.4L575.1 286.9L576.1 286.9L576.1 284.9L576.5 282.8L576.8 280.9L576.6 279.3L574.7 282.9L572.5 283.6L570.4 283.9L568.4 283.7ZM592.0 285.6L591.0 287.6L589.5 289.6L589.9 291.2L589.6 292.3L589.3 293.1L589.6 294.1L591.6 293.4L593.7 292.4L595.1 290.9L595.9 289.6L597.0 288.8L595.4 287.6L594.5 286.5L593.9 285.2ZM604.4 288.6L606.2 289.8L607.9 290.5L609.2 290.9L610.8 289.6L611.8 288.3L612.1 286.0L610.4 284.4L609.2 282.6L610.4 280.7L612.3 280.1L614.2 279.7L615.2 278.5L615.7 276.8L615.1 278.5L613.9 279.6L611.9 279.9L610.1 280.3L608.8 281.7L607.7 283.7L606.4 283.4L604.2 284.8L604.3 286.4ZM567.5 275.9L566.3 277.6L565.2 278.7L564.1 279.2L562.9 279.7L561.8 281.0L562.5 283.9L563.7 283.4L564.9 283.4L567.0 284.0L568.4 283.7L568.4 281.7L569.1 279.2L569.6 276.8ZM656.8 274.4L654.5 275.7L655.3 277.2L655.7 279.1L655.9 281.3L656.3 283.7L655.6 285.2L658.0 285.2L659.5 284.9L660.7 282.6L661.9 281.3L662.9 280.8L662.0 279.6L660.2 278.3L658.6 276.8L657.7 275.4ZM609.9 295.6L610.6 296.1L613.9 296.2L615.1 295.0L615.8 293.9L615.9 292.4L616.0 290.4L616.5 288.4L614.6 287.9L613.5 287.9L612.1 286.0L611.8 288.3L610.8 289.6L609.2 290.9L609.2 292.0L609.2 293.7ZM561.8 243.6L562.4 245.0L563.9 246.5L565.5 248.1L567.0 248.5L567.8 249.3L569.3 250.4L571.1 250.4L571.0 248.9L571.2 247.4L571.1 245.5L570.2 243.4L567.6 242.4L565.5 243.6L563.5 243.8ZM633.2 244.5L633.8 246.8L632.5 246.7L630.2 246.5L627.9 246.3L627.4 247.3L628.9 248.3L630.0 249.2L630.9 250.2L632.1 251.4L634.0 253.0L636.7 252.7L638.7 251.7L637.8 248.8L635.7 247.3L634.7 245.9L633.4 244.4ZM600.1 217.9L602.3 218.6L605.1 218.8L607.2 218.6L608.2 217.4L607.8 215.9L607.0 214.1L606.6 211.7L604.9 212.0L603.6 211.5L601.9 210.7L600.9 210.7L600.7 212.2L600.2 214.2L599.6 216.4ZM656.5 270.8L657.4 268.9L658.1 267.2L658.7 265.6L659.0 263.8L657.1 262.6L654.8 261.5L654.0 262.7L653.0 264.1L651.1 265.3L648.9 266.2L647.3 266.7L647.4 267.3L649.4 268.2L651.5 269.2L653.4 270.0L654.9 270.6ZM622.7 238.3L623.1 239.1L625.2 240.5L627.7 240.7L628.9 239.8L630.1 239.3L632.0 238.8L634.1 237.9L634.5 235.5L632.2 235.0L629.2 234.6L627.0 234.4L627.1 234.0L626.4 233.9L625.2 235.0L623.9 236.5ZM581.8 264.3L583.7 264.1L585.3 264.4L586.6 264.3L586.5 262.9L585.3 261.4L583.4 259.9L582.3 258.2L580.9 257.9L579.6 257.2L577.3 256.4L577.0 258.6L576.8 261.0L577.9 262.1L579.8 263.2ZM602.1 271.3L602.5 273.2L603.3 275.0L606.3 274.9L606.8 275.5L608.4 274.4L609.7 273.0L609.5 271.3L609.0 269.4L610.4 269.4L611.4 269.6L611.7 268.5L610.6 268.0L609.0 267.5L607.0 267.0L605.6 266.4L605.1 265.8L604.3 267.8L603.8 269.6L603.9 271.4ZM632.7 280.3L631.1 279.9L629.4 281.4L628.3 282.6L627.5 284.1L628.7 285.5L630.3 286.7L632.1 288.2L633.4 288.5L634.5 288.9L636.7 286.4L635.9 284.8L634.3 283.3L633.2 281.8ZM656.8 274.4L657.4 273.0L656.5 270.8L654.9 270.6L653.4 270.0L651.5 269.2L649.4 268.2L647.4 267.3L647.2 268.6L647.3 270.4L649.3 274.2L649.8 272.4L651.0 273.8L652.1 274.7L653.9 275.1L654.5 275.7ZM637.7 274.3L638.5 275.6L640.6 277.3L642.9 276.6L644.8 276.5L644.7 278.2L643.9 279.9L644.2 281.2L644.6 279.8L645.4 278.7L646.8 277.8L648.1 276.3L649.3 274.2L647.3 270.4L644.8 271.2L642.4 272.1L640.5 272.6L639.0 272.9ZM615.4 231.1L614.2 231.2L612.8 231.3L611.1 231.4L609.3 231.7L607.8 234.2L606.3 236.5L607.4 237.3L608.6 238.3L609.3 239.8L610.5 238.7L612.3 237.1L614.2 235.7L615.5 234.8L616.1 234.1ZM646.8 244.6L647.9 244.3L648.8 243.9L649.5 242.9L648.6 240.5L647.2 237.6L645.3 237.5L644.1 237.3L643.3 237.2L641.9 238.4L640.5 240.1L640.2 241.9L640.9 243.8L644.3 244.0ZM575.2 234.8L576.6 235.8L577.9 236.8L578.5 238.4L579.8 237.7L579.6 236.2L581.1 236.4L582.8 236.9L584.5 237.3L586.0 237.1L585.6 236.6L585.7 233.5L583.8 232.2L581.3 231.3L578.8 230.6L577.0 231.8L575.6 232.4ZM585.5 252.7L585.5 250.3L583.3 249.8L580.8 249.7L578.8 250.3L577.5 251.3L577.2 253.3L577.0 254.7L577.0 256.1L577.3 256.4L579.6 257.2L580.9 257.9L582.3 258.2L583.2 256.0L584.3 254.1ZM577.5 251.3L578.8 250.3L580.8 249.7L583.3 249.8L585.5 250.3L585.7 248.8L585.7 247.2L585.6 245.5L583.6 244.9L582.2 244.2L581.0 243.6L580.6 243.6L580.5 243.3L577.5 241.8L576.6 243.1L576.1 244.3L576.4 244.3L577.7 245.7L578.7 247.2L579.4 248.6L578.2 249.5L577.1 250.9ZM653.7 334.1L652.6 333.2L652.5 333.4L650.7 334.1L648.4 334.9L646.4 335.2L644.8 334.9L643.3 334.6L643.6 336.0L644.1 337.5L644.6 339.1L646.3 339.1L647.7 339.6L649.2 340.3L651.4 341.0L652.1 339.6L653.0 337.9L653.5 335.9ZM548.4 263.9L549.9 264.0L551.6 263.7L551.2 260.3L553.1 259.5L552.1 258.0L551.4 256.6L550.3 255.8L548.7 255.0L546.7 254.6L544.7 254.5L544.3 255.1L544.4 257.4L544.7 259.2L544.7 260.8L546.1 261.8L547.3 262.9ZM577.1 250.9L576.4 251.4L575.3 250.7L571.1 250.4L569.3 250.4L568.9 252.3L569.1 254.9L569.4 257.4L571.7 257.8L572.9 256.8L574.6 256.2L577.0 256.1L577.0 254.7L577.2 253.3L577.5 251.3ZM634.5 288.9L633.4 288.5L632.1 288.2L631.1 289.6L629.7 291.4L628.2 293.0L626.8 294.0L628.3 294.9L630.0 295.6L632.3 295.9L634.9 295.7L635.0 298.6L637.5 296.6L639.3 295.2L638.7 294.1L637.4 293.3L635.9 292.3L634.9 290.7ZM544.7 260.8L543.1 261.4L541.7 262.9L540.4 264.4L540.7 266.3L540.8 267.7L540.6 269.0L540.6 270.4L541.1 270.8L543.2 270.6L544.7 270.1L546.3 269.0L548.3 266.0L548.4 263.9L547.3 262.9L546.1 261.8ZM654.0 259.8L652.9 259.5L651.8 259.1L650.0 258.5L650.1 258.6L648.3 258.5L647.6 260.3L646.7 262.1L645.6 263.2L646.5 264.9L647.3 266.7L648.9 266.2L651.1 265.3L653.0 264.1L654.0 262.7L654.8 261.5ZM549.4 290.7L549.1 291.4L549.6 291.4L549.7 295.4L551.5 296.8L553.4 296.2L556.0 295.9L557.3 294.7L557.9 293.3L557.4 292.2L556.9 290.9L555.9 289.2L554.8 287.4L553.7 287.0L553.2 288.3L552.3 289.3L550.9 289.9ZM631.7 228.4L631.8 228.5L632.7 229.7L634.2 230.9L635.5 232.4L637.1 232.6L638.8 232.1L639.6 230.6L639.1 229.2L638.0 227.8L636.7 226.4L635.9 225.0L635.2 223.8L632.2 223.6L629.1 222.9L627.8 224.3L629.6 225.8L631.0 227.1ZM566.9 349.8L568.6 349.6L570.7 349.1L572.9 348.7L574.7 348.5L575.7 348.6L576.7 348.8L578.4 348.9L580.6 349.0L583.1 349.2L582.9 348.8L583.1 346.9L580.1 345.8L578.0 345.4L577.9 343.0L576.8 344.9L575.1 345.4L573.4 345.8L571.8 345.6L570.6 342.7L570.7 345.8L569.6 346.4L568.4 347.4L567.2 348.9ZM550.9 282.4L552.2 283.8L552.9 285.3L553.7 287.0L554.8 287.4L556.5 286.7L558.6 286.3L560.6 285.3L562.3 283.8L561.8 281.0L560.0 279.5L558.8 278.0L557.7 279.1L555.9 280.2L553.5 280.8L551.2 281.0ZM586.3 279.0L587.3 280.2L588.0 281.6L588.8 283.0L590.3 284.3L592.0 285.6L593.9 285.2L596.4 282.2L595.6 280.6L594.7 279.0L594.2 277.2L594.0 275.4L592.6 275.3L590.7 275.6L588.7 276.0L587.5 277.6ZM581.0 243.6L582.2 244.2L583.6 244.9L585.6 245.5L587.9 243.9L590.3 244.2L592.2 244.3L592.3 242.1L592.6 240.0L593.8 238.3L595.3 236.9L592.3 235.9L590.3 236.4L588.7 237.2L587.1 238.3L586.6 237.8L586.4 239.7L586.2 241.2L586.2 242.7L584.3 243.0L582.6 243.3ZM604.3 236.3L606.3 236.5L607.8 234.2L609.3 231.7L608.9 230.4L608.1 228.9L606.6 227.3L604.9 225.8L603.1 226.5L601.8 227.3L601.4 228.3L601.2 228.3L599.8 229.7L598.6 230.6L600.7 232.3L603.1 234.3ZM516.1 330.2L514.6 328.7L512.9 327.5L511.6 326.8L511.3 327.2L512.3 328.7L513.7 330.7L511.8 331.3L509.7 331.6L507.7 332.3L506.8 334.3L506.0 336.6L507.8 337.1L509.0 337.6L509.8 338.0L510.7 338.4L512.1 338.9L512.9 337.1L514.1 336.0L515.3 335.1L515.9 333.8L516.1 332.0ZM599.6 255.2L601.6 255.9L602.9 256.0L604.1 255.6L603.9 256.8L605.9 257.4L607.4 255.8L608.6 254.5L609.7 253.8L611.2 253.1L610.6 252.5L607.4 253.0L607.8 251.7L608.2 249.9L606.4 249.0L604.2 248.0L603.5 248.7L602.8 249.7L602.2 251.4L601.5 253.2L600.9 253.4ZM651.4 341.0L649.2 340.3L647.7 339.6L646.3 339.1L644.6 339.1L643.8 341.2L642.9 343.1L642.0 344.5L643.3 345.1L645.1 346.3L646.9 348.0L648.1 349.8L649.6 350.0L650.7 348.2L651.2 346.2L651.3 344.5L651.4 343.2L652.0 342.1ZM593.9 344.5L595.9 345.3L597.3 346.5L597.2 349.4L598.9 350.0L601.3 350.0L604.0 349.4L606.1 348.7L607.3 348.1L608.6 348.1L610.5 348.6L612.8 349.2L612.2 346.6L611.3 345.5L610.2 346.0L608.9 346.4L607.3 346.6L605.2 347.0L602.9 347.6L600.9 346.0L600.4 343.9L600.2 341.9L599.0 340.4L597.6 338.9L596.8 337.5L596.7 339.5L596.7 341.5L597.0 343.3ZM606.3 236.5L604.3 236.3L603.2 237.5L602.2 239.1L601.2 241.0L600.1 242.7L600.3 244.5L601.9 245.7L603.6 247.0L605.0 245.5L606.3 243.3L607.5 241.5L608.5 240.5L609.3 239.8L608.6 238.3L607.4 237.3ZM603.9 256.8L604.4 258.4L605.5 260.0L606.0 261.6L605.9 263.6L606.7 262.0L608.1 261.5L609.5 261.2L611.1 260.8L612.5 260.5L613.6 260.4L614.9 260.5L613.9 258.6L613.7 256.3L613.5 253.8L611.2 253.1L609.7 253.8L608.6 254.5L607.4 255.8L605.9 257.4ZM632.0 259.2L630.8 259.5L629.1 259.2L628.5 260.2L627.6 261.3L626.5 263.4L626.7 265.0L627.9 266.6L629.9 268.1L630.7 267.8L632.5 266.2L634.6 265.7L635.8 265.3L636.4 263.6L634.3 262.1L632.8 260.8ZM652.6 333.2L653.7 334.1L654.7 333.3L656.2 332.5L658.1 331.5L658.4 329.1L659.3 327.3L659.8 326.1L659.4 324.7L657.0 323.9L655.6 322.7L654.3 321.4L653.9 320.9L652.8 320.8L653.7 322.1L654.0 323.6L654.0 325.3L654.4 327.0L655.1 328.3L653.5 330.3L652.8 331.8ZM652.0 342.1L651.4 343.2L651.3 344.5L651.2 346.2L650.7 348.2L649.6 350.0L651.1 349.8L652.6 349.2L653.9 348.5L655.5 348.2L657.3 348.3L659.0 348.7L660.7 349.1L660.6 346.5L660.3 344.1L658.5 344.0L657.0 344.1L655.8 343.9L654.2 343.2ZM520.8 317.9L521.8 315.7L522.8 313.5L523.5 311.9L522.7 310.7L521.5 309.0L520.8 307.0L520.7 308.7L520.6 310.6L520.4 312.7L517.9 314.0L515.4 314.6L513.9 314.4L512.9 314.4L511.6 315.2L509.9 316.4L511.2 317.9L512.7 319.4L515.0 318.4L516.5 317.9L517.7 318.1L519.2 318.4ZM590.2 254.5L588.1 254.3L586.5 253.7L585.5 252.7L584.3 254.1L583.2 256.0L582.3 258.2L583.4 259.9L585.3 261.4L586.5 262.9L586.6 264.3L587.4 264.7L588.9 262.0L590.3 259.6L591.3 258.1L591.9 256.9L591.3 255.6ZM607.2 218.6L607.0 220.0L606.4 221.6L606.4 223.4L608.7 223.3L611.1 223.4L613.5 223.8L615.7 224.5L616.4 223.0L616.4 221.2L616.0 218.6L615.6 216.0L613.8 216.2L612.7 216.6L611.5 217.0L609.9 217.2L608.2 217.4ZM556.0 295.9L557.4 297.2L558.6 298.6L559.0 300.1L559.3 301.6L561.1 300.3L562.7 299.6L564.2 298.7L564.6 296.9L565.4 295.1L566.2 293.3L564.0 291.2L561.5 291.4L559.4 292.2L557.9 293.3L557.3 294.7ZM646.8 244.6L646.7 246.3L646.7 248.3L647.1 250.3L647.5 252.3L649.8 251.3L652.6 250.7L653.9 249.7L654.3 248.6L654.8 246.3L653.9 245.4L652.9 243.0L650.8 243.1L649.5 242.9L648.8 243.9L647.9 244.3ZM634.4 235.5L634.1 237.9L635.2 240.4L637.6 240.3L639.5 240.1L640.5 240.1L641.9 238.4L643.3 237.2L643.1 236.1L641.5 235.1L639.7 233.7L638.8 232.1L637.1 232.6L635.5 232.4L635.0 231.9L634.9 233.3ZM589.6 294.1L589.5 294.5L591.1 296.1L592.1 297.7L592.8 299.5L594.5 299.2L596.8 299.5L599.0 299.8L599.5 299.6L599.4 297.8L599.2 295.8L599.1 293.8L598.9 291.8L598.8 289.9L597.0 288.8L595.9 289.6L595.1 290.9L593.7 292.4L591.6 293.4ZM551.4 256.6L552.1 258.0L553.1 259.5L554.5 258.9L555.3 262.0L557.0 262.3L559.1 265.5L561.3 265.4L560.4 263.5L559.2 261.8L558.3 260.3L558.2 258.6L558.8 258.5L561.0 255.4L561.2 254.5L559.8 254.3L557.7 254.2L555.6 253.6L553.7 255.0L552.3 256.0ZM701.9 305.8L703.1 307.2L703.5 308.4L704.3 309.2L705.8 309.6L706.8 307.9L708.7 306.8L707.9 305.5L707.4 304.1L708.2 302.3L708.6 300.2L709.0 298.2L710.0 296.7L709.1 296.6L708.5 297.1L706.4 297.4L703.9 297.8L701.7 298.1L701.4 300.0L701.5 302.0L701.8 303.9ZM603.6 247.0L601.9 245.7L600.3 244.5L598.3 244.4L596.2 244.4L594.6 245.0L593.7 246.1L594.1 248.2L594.4 250.0L596.5 250.6L597.8 251.2L599.1 252.1L600.9 253.4L601.5 253.2L602.2 251.4L602.8 249.7L603.5 248.7L604.2 248.0ZM587.9 273.1L588.5 270.1L587.9 268.3L587.4 266.8L587.4 264.7L586.6 264.3L585.3 264.4L583.7 264.1L581.8 264.3L581.1 266.7L580.0 268.9L578.4 270.3L579.8 270.6L581.4 271.2L583.5 272.0L585.9 272.7ZM610.6 252.5L611.2 253.1L613.5 253.8L613.7 256.3L613.9 258.6L614.9 260.5L616.9 262.1L618.2 261.2L619.6 259.7L620.9 257.8L622.2 256.4L623.6 255.6L623.6 255.3L622.2 256.1L620.8 257.5L619.4 259.4L619.4 257.6L619.3 255.8L619.3 253.7L619.3 251.8L619.1 250.2L618.4 248.9L617.5 247.6L617.0 245.9L616.6 244.8L614.1 244.5L613.4 245.4L614.3 246.0L615.9 246.6L616.5 247.9L617.5 249.3L617.9 251.2L616.1 251.3L613.4 251.9ZM559.3 245.6L557.8 247.3L556.7 248.1L555.5 248.2L555.9 249.7L555.8 251.6L555.6 253.6L557.7 254.2L559.8 254.3L561.2 254.5L562.5 253.2L563.6 252.2L564.5 250.4L565.5 248.1L563.9 246.5L562.4 245.0L561.8 243.6ZM543.2 325.9L544.2 326.4L544.4 326.8L545.8 327.7L547.3 325.7L548.6 324.4L547.6 323.8L548.8 322.2L550.5 320.1L549.8 319.1L548.2 318.0L545.7 316.9L543.8 315.8L543.1 314.6L542.4 316.2L542.0 317.9L542.1 319.8L542.5 321.9L543.1 323.9ZM558.8 258.5L560.6 258.4L563.0 258.6L565.8 259.1L565.5 258.7L567.6 258.3L569.4 257.4L569.1 254.9L568.9 252.3L569.3 250.4L567.8 249.3L567.0 248.5L565.5 248.1L564.5 250.4L563.6 252.2L562.5 253.2L561.2 254.5L561.0 255.4ZM641.1 253.4L642.3 252.8L643.7 252.6L645.5 252.6L647.1 252.9L647.5 252.3L647.1 250.3L646.7 248.3L646.7 246.3L646.8 244.6L644.3 244.0L640.9 243.8L639.8 245.9L638.7 247.6L637.8 248.8L638.7 251.7L640.1 252.8ZM613.9 296.2L616.0 297.1L617.5 298.0L619.2 298.7L620.9 297.6L622.4 296.1L623.9 294.6L625.3 293.7L624.7 292.3L624.1 291.5L623.3 290.6L621.0 290.1L618.8 289.3L616.5 288.4L616.0 290.4L615.9 292.4L615.8 293.9L615.1 295.0ZM536.1 342.1L535.1 344.0L534.9 345.6L534.5 347.2L533.5 349.3L535.0 349.3L536.5 349.3L537.9 349.3L539.5 349.2L541.1 348.9L542.7 348.6L544.5 348.3L546.4 348.3L545.0 346.5L543.8 345.2L542.7 344.4L541.7 343.4L541.2 342.0L540.8 340.5L538.7 341.1ZM601.6 281.4L600.1 281.3L598.5 281.5L596.4 282.2L593.9 285.2L594.5 286.5L595.4 287.6L597.0 288.8L598.8 289.9L600.5 289.9L602.4 289.4L604.4 288.6L604.3 286.4L604.2 284.8L603.2 283.7L602.4 282.6ZM512.7 319.4L511.2 317.9L509.9 316.4L508.8 317.0L506.8 318.3L504.7 319.2L504.9 321.1L504.7 323.0L504.2 324.9L504.9 326.3L506.5 327.1L508.8 327.0L510.9 326.4L511.3 327.2L511.6 326.8L511.6 325.5L511.9 324.3L512.3 323.0L512.6 321.4ZM668.2 271.3L666.4 271.6L664.4 271.4L662.5 271.1L660.7 271.3L659.2 272.0L657.4 273.0L656.8 274.4L657.7 275.4L658.6 276.8L660.2 278.3L662.0 279.6L662.9 280.8L664.2 281.1L665.6 280.4L666.8 278.3L667.9 276.6L668.5 275.3L668.6 273.6ZM592.2 244.3L590.2 244.2L587.9 243.9L585.6 245.5L585.7 247.2L585.7 248.8L585.5 250.3L585.5 252.7L586.5 253.7L588.1 254.3L590.2 254.5L591.2 252.8L592.8 251.2L594.4 250.0L594.1 248.2L593.7 246.1ZM637.3 286.2L636.7 286.4L634.5 288.9L634.9 290.7L635.9 292.3L637.4 293.3L638.7 294.1L639.3 295.2L641.4 296.4L642.5 295.8L643.6 294.7L644.9 293.2L644.7 291.2L644.6 289.6L643.9 288.5L642.5 287.5L639.9 287.2L638.5 286.7ZM577.0 271.0L575.4 270.3L573.0 270.3L571.1 270.1L569.6 269.6L568.1 269.0L566.3 268.3L565.8 269.7L565.4 271.5L566.3 273.8L567.5 275.9L569.6 276.8L571.6 276.3L573.4 276.0L574.7 275.8L575.8 275.5L575.9 273.0ZM619.6 216.8L616.9 214.3L615.6 216.0L616.0 218.6L616.4 221.2L616.4 223.0L615.7 224.5L616.4 225.8L617.7 227.1L620.0 227.4L621.5 227.1L622.5 226.3L624.1 225.3L623.9 223.6L624.0 221.9L623.2 220.6L621.5 219.6L620.3 218.5ZM551.5 296.8L549.7 295.4L550.1 298.8L547.5 298.6L546.4 296.8L546.3 294.2L545.1 294.2L544.4 295.7L543.9 297.2L543.6 299.3L543.7 302.0L543.7 304.5L545.2 305.8L546.7 306.9L547.9 308.1L549.3 307.8L550.1 305.7L550.6 303.7L550.9 302.3L550.9 301.4L550.9 300.6L551.0 298.9ZM604.9 225.8L606.6 227.3L608.1 228.9L608.9 230.4L609.3 231.7L611.1 231.4L612.8 231.3L614.2 231.2L615.4 231.1L615.9 229.4L616.7 228.1L617.7 227.1L616.4 225.8L615.7 224.5L613.5 223.8L611.1 223.4L608.7 223.3L606.4 223.4ZM545.8 327.7L547.2 330.2L548.3 332.5L548.4 334.2L549.5 335.4L551.5 336.3L553.6 335.1L555.1 333.4L556.0 332.1L557.0 331.3L558.7 330.5L557.1 329.9L555.3 329.5L553.9 328.8L552.6 327.5L551.0 325.8L548.6 324.4L547.3 325.7ZM647.3 266.7L646.5 264.9L645.6 263.2L643.6 262.7L641.2 262.5L639.0 262.9L639.2 265.3L639.5 267.4L639.7 269.1L639.8 270.6L639.6 271.9L639.0 272.9L640.5 272.6L642.4 272.1L644.8 271.2L647.3 270.4L647.2 268.6L647.4 267.3ZM635.0 298.6L634.3 300.7L633.8 302.2L634.2 303.5L635.2 305.2L636.8 305.7L638.4 306.1L640.0 306.1L641.9 305.5L644.1 304.5L644.5 306.3L644.7 307.8L644.4 309.3L643.9 310.9L643.6 312.5L644.2 310.8L645.0 308.9L645.6 307.0L645.9 304.9L644.3 303.9L642.7 302.8L642.1 300.3L641.6 298.1L641.4 296.4L639.3 295.2L637.5 296.6ZM607.7 309.4L605.9 309.7L604.9 309.6L603.8 310.1L602.7 311.1L601.4 312.3L600.0 313.0L599.3 314.6L598.5 316.0L598.0 317.3L598.2 318.7L600.5 319.1L602.7 319.5L604.8 320.0L606.4 320.1L607.9 319.8L606.3 318.2L606.2 315.9L605.6 313.7L605.0 311.9L607.2 311.4L609.1 311.3L610.7 311.3L609.4 310.1ZM598.2 318.7L597.9 320.7L597.7 322.8L598.5 324.0L598.6 325.3L599.9 326.6L601.4 328.0L602.9 329.1L604.4 329.5L605.0 327.9L605.6 326.1L606.2 324.5L606.9 323.3L607.6 322.0L608.3 320.1L607.9 319.8L606.4 320.1L604.8 320.0L602.7 319.5L600.5 319.1ZM698.4 339.5L696.6 339.8L694.5 340.7L692.0 342.2L690.0 343.8L688.9 344.7L687.9 345.2L687.7 346.8L687.4 348.9L689.8 348.2L691.8 348.0L692.8 348.5L693.9 349.3L695.7 349.8L696.2 347.7L697.0 345.4L698.1 343.5L699.3 342.3L699.8 340.0ZM671.5 343.2L669.9 343.8L668.6 344.4L667.1 343.1L665.5 341.9L663.4 340.9L662.4 341.8L661.4 342.7L660.3 344.1L660.6 346.5L660.7 349.1L662.7 349.4L664.6 349.4L666.5 349.3L668.6 349.2L670.6 349.1L672.0 349.0L673.1 348.7L672.7 346.8L672.5 345.2L672.1 343.4ZM560.6 342.8L558.8 343.4L556.1 343.2L553.4 342.4L553.3 344.0L553.4 346.2L553.0 348.4L552.0 349.9L553.7 350.0L555.1 349.5L556.2 348.7L557.6 348.1L559.5 348.0L561.5 348.4L563.5 349.1L565.4 349.7L566.9 349.8L567.2 348.9L566.0 347.1L564.1 345.4L562.2 344.2L561.1 343.5ZM615.5 311.7L614.2 308.2L614.3 306.3L613.7 304.9L612.9 303.4L612.3 301.8L613.4 301.4L615.3 301.1L617.7 300.8L619.7 300.7L619.2 298.7L617.5 298.0L616.0 297.1L613.9 296.2L610.6 296.1L610.5 297.8L610.7 299.3L610.9 300.8L610.7 302.5L610.0 304.3L609.1 306.2L608.2 308.0L607.7 309.4L609.4 310.1L610.7 311.3L612.4 311.0L614.4 310.6L614.5 312.0ZM685.5 270.0L683.9 268.2L682.4 266.6L682.1 265.3L681.8 264.1L680.6 262.8L678.7 261.4L676.4 260.1L675.7 260.8L675.3 261.7L675.2 263.5L675.9 263.1L677.8 265.0L678.7 266.9L679.2 268.6L677.6 269.7L675.9 270.5L673.9 271.0L675.1 271.6L676.9 272.7L678.8 274.7L680.2 274.0L681.5 272.8L682.9 271.4L684.3 270.4ZM641.1 253.4L640.1 252.8L638.7 251.7L636.7 252.7L634.0 253.0L632.8 254.7L632.1 256.8L632.0 259.2L632.8 260.8L634.3 262.1L636.4 263.6L639.0 262.9L639.3 262.7L639.4 260.7L639.6 259.3L639.9 258.0L640.1 256.5L640.5 255.0ZM629.9 268.1L630.6 268.7L631.2 270.7L632.0 273.1L633.5 275.4L635.0 277.1L636.9 274.7L637.7 274.3L639.0 272.9L639.6 271.9L639.8 270.6L639.7 269.1L639.5 267.4L639.2 265.3L639.0 262.9L636.4 263.6L635.8 265.3L634.6 265.7L632.5 266.2L630.7 267.8ZM623.8 250.8L623.8 252.9L623.7 254.5L623.6 255.6L625.0 256.3L626.9 257.6L629.1 259.2L630.8 259.5L632.0 259.2L632.1 256.8L632.8 254.7L634.0 253.0L632.1 251.4L630.9 250.2L630.0 249.2L628.9 248.3L627.4 247.3L625.5 248.8ZM661.6 252.9L660.1 253.9L658.2 254.4L656.7 255.8L655.1 257.8L654.0 259.8L654.8 261.5L657.1 262.6L659.0 263.8L660.9 263.2L662.8 262.8L664.4 262.9L665.0 261.9L665.5 260.7L666.0 259.3L664.4 257.3L662.4 254.9ZM549.3 307.8L547.9 308.1L546.7 309.2L545.5 310.4L544.3 312.2L543.1 314.1L543.1 314.6L543.8 315.8L545.7 316.9L548.2 318.0L549.8 319.1L550.5 320.1L551.7 318.8L552.5 317.6L552.8 316.3L552.8 315.1L552.6 313.4L552.9 311.5L553.8 309.4L551.9 308.9L550.6 308.3ZM560.6 342.8L561.1 343.5L562.2 344.2L564.1 345.4L566.0 347.1L567.2 348.9L568.4 347.4L569.6 346.4L570.7 345.8L570.6 342.7L569.9 340.7L568.7 338.8L566.9 338.2L566.0 337.5L565.1 336.7L565.1 333.9L564.6 335.3L564.1 336.2L563.4 337.3L562.7 338.8L561.8 340.8ZM623.1 323.2L623.7 321.2L624.1 318.8L624.4 316.6L624.6 315.2L624.7 313.9L622.9 311.8L622.0 312.3L620.8 312.6L619.3 313.1L617.4 313.9L615.5 311.7L614.5 312.0L615.1 314.0L615.9 315.8L616.3 317.4L616.4 318.9L616.9 320.2L615.5 319.6L614.6 319.3L615.2 320.8L616.4 322.3L618.6 322.4L620.9 323.1ZM576.8 278.3L578.5 278.7L580.0 279.1L581.6 279.2L583.4 279.1L585.2 279.0L585.3 279.6L586.3 279.0L587.5 277.6L588.7 276.0L588.3 274.7L587.9 273.1L585.9 272.7L583.5 272.0L581.4 271.2L579.8 270.6L578.4 270.3L577.0 271.0L575.9 273.0L575.8 275.5L576.5 276.4ZM556.0 295.9L553.4 296.2L551.5 296.8L551.0 298.9L550.9 300.6L550.9 301.4L550.9 302.3L550.6 303.7L550.1 305.7L549.3 307.8L550.6 308.3L551.9 308.9L553.8 309.4L555.3 306.3L556.0 305.9L556.6 304.9L557.8 303.3L559.3 301.6L559.0 300.1L558.6 298.6L557.4 297.2ZM700.1 323.9L698.1 325.5L698.8 327.7L699.1 329.7L699.2 331.2L699.6 332.4L700.9 333.7L702.4 335.1L703.1 336.8L703.9 335.0L703.8 334.7L706.2 332.8L707.3 330.6L707.9 328.6L708.3 327.4L706.6 326.5L705.5 325.7L705.0 324.5L703.5 323.9L702.0 323.0L700.3 322.2L700.3 325.1ZM586.5 334.2L588.2 334.6L589.1 335.0L590.0 335.3L591.7 335.8L593.8 336.3L595.7 336.8L596.8 337.5L597.6 336.3L597.9 335.6L599.7 336.3L602.2 336.4L602.9 334.2L603.6 332.4L604.4 331.2L605.2 329.9L604.4 329.5L602.9 329.1L601.4 328.0L599.9 326.6L598.6 325.3L597.1 326.5L595.3 328.2L594.0 330.0L594.3 332.0L595.3 333.6L596.3 334.8L597.0 336.0L595.4 335.2L593.1 334.6L591.0 334.4L589.6 334.3L588.5 334.3ZM608.6 336.1L609.5 336.3L609.9 338.0L610.9 339.7L611.8 341.2L612.1 342.7L612.7 344.4L613.4 343.0L614.9 342.2L616.6 341.3L617.9 340.2L618.9 339.1L619.9 338.0L619.5 336.1L617.9 335.0L616.0 333.9L614.4 332.7L613.5 331.3L612.1 331.0L611.4 333.1L610.1 334.6ZM599.5 299.6L601.3 299.1L602.7 298.2L603.8 297.4L605.0 296.9L606.5 296.5L608.1 296.1L609.9 295.6L609.2 293.7L609.2 292.0L609.2 290.9L607.9 290.5L606.2 289.8L604.4 288.6L602.4 289.4L600.5 289.9L598.8 289.9L598.9 291.8L599.1 293.8L599.2 295.8L599.4 297.8ZM697.7 287.3L697.6 289.7L697.8 292.1L698.6 294.2L699.5 295.7L700.9 296.5L701.2 297.3L701.7 298.1L703.9 297.8L706.4 297.4L708.5 297.1L709.1 296.6L710.0 296.7L711.3 295.6L712.5 294.5L712.9 293.0L714.9 293.5L716.8 293.5L716.5 293.3L715.2 293.2L713.8 292.9L712.2 292.3L710.4 291.8L708.6 291.3L707.2 291.1L705.9 291.0L704.3 291.0L702.1 290.8L699.6 290.3ZM664.4 262.9L665.5 264.3L666.4 265.8L667.1 267.4L668.3 269.2L667.3 267.3L666.9 265.6L668.4 265.9L670.2 266.0L672.2 265.6L673.8 264.6L675.2 263.5L675.3 261.7L675.7 260.8L676.4 260.1L675.1 258.7L673.7 257.5L671.7 256.8L669.7 256.5L668.6 257.3L667.4 258.4L666.0 259.3L665.5 260.7L665.0 261.9ZM659.0 263.8L658.7 265.6L658.1 267.2L657.4 268.9L656.5 270.8L657.4 273.0L659.2 272.0L660.7 271.3L662.5 271.1L664.4 271.4L666.4 271.6L668.2 271.3L668.7 269.8L667.4 268.1L666.7 266.7L666.2 265.3L665.3 264.1L664.4 262.9L662.8 262.8L660.9 263.2ZM674.2 311.9L672.2 313.0L670.8 313.9L670.0 314.7L669.1 315.9L667.9 317.4L666.5 318.6L666.1 319.7L665.3 320.6L665.5 321.9L666.2 323.3L667.7 324.8L669.3 326.4L670.4 327.6L671.1 328.2L672.6 327.8L673.4 326.6L674.2 324.9L674.4 322.9L673.9 320.8L673.2 318.7L672.6 316.9L672.7 315.4L673.4 313.7ZM664.9 296.7L665.4 294.8L664.9 292.9L664.5 290.7L662.7 289.0L660.3 287.8L659.1 286.7L657.8 288.4L656.5 289.5L655.3 290.4L654.6 291.7L654.0 293.4L652.6 294.8L654.0 296.0L655.9 297.5L657.8 297.1L659.3 296.6L660.6 296.2L661.7 296.2L663.1 296.5ZM562.5 283.9L562.2 285.9L561.7 287.4L561.8 288.7L562.7 289.8L564.0 291.2L566.2 293.3L565.4 295.1L564.6 296.9L564.2 298.7L565.3 297.9L567.3 297.2L569.3 296.6L571.4 295.5L573.9 293.9L572.1 292.9L570.7 291.5L570.7 289.4L570.2 287.3L568.7 285.5L567.0 284.0L564.9 283.4L563.7 283.4ZM691.3 307.5L691.4 305.7L690.9 303.7L690.1 301.6L689.5 299.5L688.4 298.1L686.8 296.7L684.3 296.8L682.2 297.1L681.3 297.1L680.2 298.3L679.1 298.8L678.6 300.0L679.1 301.4L680.3 303.3L682.6 303.8L684.2 304.7L685.4 305.7L687.2 306.7L689.4 307.3ZM624.7 313.9L624.6 315.2L624.4 316.6L624.1 318.8L623.7 321.2L623.1 323.2L623.5 324.4L623.9 325.5L625.1 326.3L626.6 326.9L627.8 328.0L628.3 326.3L628.9 324.5L629.8 322.9L631.1 321.7L632.3 320.7L632.9 319.6L632.9 318.4L632.9 316.9L631.4 316.4L630.3 315.9L629.1 315.3L627.3 314.6ZM658.5 311.0L658.9 309.3L658.0 308.5L656.7 307.5L655.0 306.2L653.6 304.7L652.8 303.3L652.1 303.8L651.1 303.9L649.5 303.8L647.6 304.0L645.9 304.9L645.6 306.9L645.0 308.8L644.3 310.7L643.7 312.4L644.8 310.9L646.0 308.8L647.4 306.4L648.1 308.0L649.4 309.8L651.5 311.1L652.1 312.6L652.2 314.1L652.5 315.9L654.0 314.0L655.7 312.6L657.2 311.8ZM512.1 338.9L513.4 341.1L515.2 340.2L517.3 339.8L519.3 340.0L520.8 340.1L522.1 339.9L523.6 339.3L525.1 338.6L525.5 337.8L525.6 335.1L524.0 333.9L522.1 332.9L520.3 332.1L519.2 331.1L517.6 330.7L516.1 330.2L516.1 332.0L515.9 333.8L515.3 335.1L514.1 336.0L512.9 337.1ZM609.5 239.9L610.8 241.6L612.7 243.1L614.1 244.5L616.6 244.8L617.0 245.9L617.3 243.8L618.9 243.0L620.6 242.3L622.4 242.0L623.1 243.8L623.7 246.0L623.8 248.5L623.8 250.8L625.5 248.8L627.4 247.3L627.9 246.3L626.1 246.3L624.4 246.6L623.8 244.2L622.9 242.2L622.2 240.5L625.2 240.5L623.1 239.1L622.7 238.3L621.8 238.8L620.3 237.8L617.9 236.0L616.1 234.1L615.5 234.8L614.3 235.7L612.4 237.1L610.6 238.8ZM617.7 227.1L616.7 228.1L615.9 229.4L615.4 231.1L616.1 234.1L617.9 236.0L620.3 237.8L621.8 238.8L622.7 238.3L623.9 236.5L625.2 235.0L626.4 233.9L626.7 232.4L626.0 230.4L624.8 227.9L624.1 225.3L622.5 226.3L621.5 227.1L620.0 227.4ZM612.1 331.0L613.5 331.3L613.9 329.8L614.6 328.2L615.6 326.3L616.2 324.2L616.4 322.3L615.2 320.8L614.6 319.3L613.0 320.0L610.5 321.5L608.3 320.1L607.6 322.0L606.9 323.3L606.2 324.5L605.6 326.1L605.0 327.9L604.4 329.5L605.2 329.9L607.4 329.9L609.9 330.2ZM534.6 313.8L534.7 312.2L534.6 310.5L534.3 308.6L534.2 306.9L532.6 305.8L531.3 305.0L529.5 304.3L527.7 304.9L525.7 305.6L523.8 306.4L522.1 306.9L520.8 306.9L521.5 309.0L522.7 310.7L523.5 311.9L524.8 311.8L525.6 312.0L527.0 312.5L529.2 313.0L531.5 313.4L533.2 313.7ZM512.1 338.9L510.7 338.4L509.8 338.0L509.0 337.6L507.8 337.1L506.0 336.6L504.8 338.8L505.2 340.0L505.1 341.5L504.5 343.5L504.2 345.9L504.7 348.0L505.8 349.7L508.1 349.1L509.7 348.4L510.9 348.0L512.1 348.1L513.2 346.5L513.7 345.1L513.6 343.4L513.4 341.1ZM534.8 314.3L536.7 314.2L539.1 314.1L541.4 314.1L543.1 314.1L544.3 312.2L545.5 310.4L546.7 309.2L547.9 308.1L546.7 306.9L545.2 305.8L543.7 304.5L541.7 304.4L542.1 305.2L540.6 305.7L539.3 306.4L538.2 307.5L536.8 308.6L534.2 306.9L534.3 308.6L534.6 310.5L534.7 312.2L534.6 313.8ZM634.8 333.0L634.9 335.6L635.3 337.6L635.4 338.6L635.7 339.8L635.5 341.3L635.1 343.3L635.1 345.5L637.2 345.1L639.0 344.8L640.6 344.7L642.0 344.5L642.9 343.1L643.8 341.2L644.6 339.1L644.1 337.5L643.6 336.0L643.3 334.6L641.7 335.0L640.5 333.2L638.8 331.6L637.5 331.0ZM605.1 265.8L605.6 266.4L607.0 267.0L609.0 267.5L610.6 268.0L611.7 268.5L611.4 269.6L613.8 269.3L617.1 269.3L618.2 271.7L618.5 269.6L618.3 267.5L618.0 265.7L617.7 264.3L617.6 262.9L618.2 262.9L616.9 262.1L614.9 260.5L613.6 260.4L612.5 260.5L611.1 260.8L609.5 261.2L608.1 261.6L606.7 262.0L605.9 263.6ZM533.5 349.3L534.5 347.2L534.9 345.6L535.1 344.0L536.1 342.1L534.0 341.3L532.1 340.6L530.6 340.0L529.5 339.5L528.2 338.9L526.8 338.3L525.5 337.8L525.1 338.6L525.0 340.6L524.8 342.7L524.4 344.7L524.1 346.3L524.0 347.3L524.3 348.3L526.7 348.4L528.8 348.7L530.4 349.0L531.9 349.2ZM687.5 286.2L684.1 285.7L683.1 284.0L682.6 283.6L681.4 285.0L680.1 286.3L678.9 287.4L677.6 288.6L678.7 290.5L680.4 292.9L681.5 295.1L681.3 297.1L682.2 297.1L684.3 296.8L686.8 296.7L686.9 295.2L687.4 294.0L688.2 292.7L689.0 291.1L689.6 289.4L689.9 287.9ZM690.4 310.9L692.6 311.8L694.6 313.1L695.9 314.3L696.8 315.2L697.9 315.9L699.5 316.3L701.5 316.6L702.1 317.6L702.6 316.1L703.8 315.3L704.1 313.3L704.3 312.0L705.0 311.0L705.8 309.6L704.3 309.2L703.5 308.4L703.1 307.2L701.9 305.8L699.9 306.1L697.9 306.1L696.2 306.5L694.7 307.6L693.3 308.7L691.2 309.5ZM666.5 318.6L664.5 317.5L662.6 316.3L661.5 315.0L660.8 313.6L659.8 312.2L658.5 311.0L657.2 311.8L655.7 312.6L654.0 314.0L652.5 315.9L653.7 318.1L655.1 320.3L653.9 320.9L654.3 321.4L655.6 322.7L657.0 323.9L659.4 324.7L661.1 323.6L662.7 322.2L664.1 321.0L665.3 320.6L666.1 319.7ZM627.3 348.6L628.7 348.7L630.4 348.9L632.5 349.3L634.3 349.7L634.3 348.0L635.1 345.5L635.1 343.3L635.5 341.3L635.7 339.8L635.4 338.6L633.0 338.2L630.6 338.3L628.7 339.0L627.2 339.9L625.8 340.6L624.5 341.0L623.3 341.3L623.3 342.8L623.9 344.2L625.4 345.4L626.8 346.8ZM551.5 336.3L552.2 337.8L552.3 339.2L552.4 340.7L553.4 342.4L556.1 343.2L558.8 343.4L560.6 342.8L561.8 340.8L562.7 338.8L563.4 337.3L564.1 336.2L564.6 335.3L565.1 333.9L564.3 331.0L563.6 332.6L563.0 334.2L560.7 332.9L559.6 331.6L558.7 330.5L557.0 331.3L556.0 332.1L555.1 333.4L553.6 335.1ZM609.9 295.6L608.1 296.1L606.5 296.5L605.0 296.9L603.8 297.4L602.7 298.2L601.3 299.1L599.5 299.6L599.0 299.8L599.8 301.1L599.9 302.3L600.4 303.5L602.0 304.9L604.0 306.5L605.0 308.2L604.9 309.6L605.9 309.7L607.7 309.4L608.2 308.0L609.1 306.2L610.0 304.3L610.7 302.5L610.9 300.8L610.7 299.3L610.5 297.8L610.6 296.1ZM611.3 345.5L612.2 346.6L612.8 349.2L614.7 349.6L616.0 349.6L617.2 349.3L618.6 349.0L620.7 348.9L623.4 348.8L625.7 348.7L627.3 348.6L626.8 346.8L625.4 345.4L623.9 344.2L623.3 342.8L623.3 341.3L622.6 340.2L621.2 339.1L619.9 338.0L619.0 339.1L617.9 340.3L616.6 341.4L614.9 342.3L613.5 343.2L612.8 344.6ZM674.3 311.8L675.6 311.6L676.8 310.0L677.6 308.8L678.3 307.9L678.9 306.7L679.6 305.1L680.3 303.3L679.1 301.4L678.6 300.0L679.1 298.8L677.7 298.4L675.9 298.6L673.7 299.8L671.5 301.1L670.0 301.8L668.6 301.9L669.2 304.2L670.2 305.7L670.7 307.4L671.1 308.8L672.1 309.8L673.4 310.7ZM669.7 283.7L668.1 282.6L666.5 281.5L665.6 280.4L664.2 281.1L662.9 280.8L661.9 281.3L660.7 282.6L659.5 284.9L659.1 286.7L660.3 287.8L662.7 289.0L664.5 290.7L664.9 292.9L665.4 294.8L666.9 293.1L668.5 291.6L670.1 290.7L671.0 289.9L670.2 287.9L669.9 285.8ZM690.1 329.8L690.9 331.3L692.3 333.0L693.8 334.4L694.6 335.8L695.4 337.0L696.8 338.2L698.4 339.5L699.8 340.0L699.3 342.3L700.6 340.8L701.9 338.9L703.1 336.8L702.4 335.1L700.9 333.7L699.6 332.4L699.2 331.2L699.1 329.7L698.8 327.7L698.1 325.5L696.2 325.3L694.4 325.1L692.5 326.2L690.9 327.9ZM665.6 280.4L666.5 281.5L668.1 282.6L669.7 283.7L671.3 282.1L673.4 280.7L675.0 279.8L675.9 279.0L676.8 277.9L677.9 277.0L679.1 276.4L678.8 274.7L676.9 272.7L675.1 271.6L673.9 271.0L672.0 271.5L670.7 272.4L668.7 269.8L668.2 271.3L668.6 273.6L668.5 275.3L667.9 276.6L666.8 278.3ZM655.9 297.5L654.7 299.3L653.5 301.3L652.8 303.3L653.6 304.7L655.0 306.2L656.7 307.5L658.0 308.5L658.9 309.3L660.5 307.8L662.2 306.8L663.8 306.3L665.4 305.8L667.2 305.0L669.2 304.2L668.6 301.9L667.7 300.6L667.0 299.3L666.0 298.0L664.9 296.7L663.1 296.5L661.7 296.2L660.6 296.2L659.3 296.6L657.8 297.1ZM663.4 297.4L663.7 298.7L664.0 300.1L664.2 301.7L664.1 303.6L664.0 305.3L662.6 305.8L661.1 306.5L659.6 307.7L659.8 306.2L659.9 304.7L659.9 303.3L659.9 301.6L660.0 299.8L660.4 298.2L661.0 296.6ZM512.1 348.1L514.0 348.7L516.1 349.5L517.8 349.9L519.2 349.9L520.6 349.3L522.2 348.7L524.3 348.3L524.0 347.3L524.1 346.3L524.4 344.7L524.8 342.7L525.0 340.6L525.1 338.6L523.6 339.3L522.1 339.9L520.8 340.1L519.3 340.0L517.3 339.8L515.2 340.2L513.4 341.1L513.6 343.4L513.7 345.1L513.2 346.5ZM678.8 274.7L679.1 276.4L680.4 278.1L681.8 279.6L682.7 281.1L682.9 282.5L683.1 280.9L684.2 281.3L685.4 281.6L686.8 281.7L688.8 281.6L691.4 281.5L693.7 281.4L693.3 279.8L692.5 278.2L691.8 276.7L691.5 275.2L691.2 273.9L689.9 273.2L688.1 272.6L686.6 271.5L685.5 270.0L684.3 270.4L682.9 271.4L681.5 272.8L680.2 274.0ZM622.9 311.8L624.7 313.9L627.3 314.6L629.1 315.3L630.3 315.9L631.4 316.4L632.9 316.9L634.9 316.3L637.1 316.7L638.4 317.1L639.9 315.7L641.5 314.3L639.1 315.9L638.3 314.9L636.7 314.1L635.0 313.4L635.6 311.8L636.0 309.7L635.9 307.3L635.2 305.2L633.6 304.7L632.0 304.5L630.5 304.6L629.1 304.8L627.1 306.2L626.6 307.2L626.2 308.3L626.4 309.8L624.3 310.8ZM671.5 343.2L672.1 343.4L672.5 345.2L672.7 346.8L673.1 348.7L674.4 348.4L676.3 348.4L678.5 348.7L680.6 349.3L682.4 349.8L683.9 349.9L685.4 349.6L687.4 348.9L687.7 346.8L687.9 345.2L686.9 343.8L685.5 342.2L683.5 340.6L682.3 339.2L681.9 339.7L680.6 339.8L679.5 340.6L678.1 341.6L676.4 342.4L674.0 342.8ZM663.4 340.9L661.6 339.9L662.5 338.6L663.5 337.2L664.6 336.1L664.8 335.4L663.7 334.1L660.9 332.9L658.1 331.5L656.2 332.5L654.7 333.3L653.7 334.1L653.5 335.9L653.0 337.9L652.1 339.6L651.4 341.0L652.0 342.1L654.2 343.2L655.8 343.9L657.0 344.1L658.5 344.0L660.3 344.1L661.4 342.7L662.4 341.8ZM534.8 314.3L534.6 313.8L533.2 313.7L531.5 313.4L529.2 313.0L527.0 312.5L525.6 312.0L524.8 311.8L523.5 311.9L522.8 313.5L521.8 315.7L520.8 317.9L521.3 319.5L523.0 321.0L525.1 322.5L527.0 322.8L527.9 322.7L529.2 322.4L531.3 322.1L532.3 320.5L533.3 319.5L533.9 318.9L534.2 317.9L534.3 316.1ZM536.1 342.1L538.7 341.1L540.8 340.5L541.5 338.9L539.6 337.4L537.8 336.0L536.9 334.7L536.1 333.4L534.7 332.1L533.0 330.4L532.2 330.9L531.0 331.2L529.6 331.9L528.3 332.9L527.0 334.0L525.6 335.1L525.5 337.8L526.8 338.3L528.2 338.9L529.5 339.5L530.6 340.0L532.1 340.6L534.0 341.3ZM543.2 325.9L543.1 323.9L542.5 321.9L542.1 319.8L542.0 317.9L542.4 316.2L543.1 314.6L543.1 314.1L541.4 314.1L539.1 314.1L536.7 314.2L534.8 314.3L534.3 316.1L534.2 317.9L533.9 318.9L533.3 319.5L532.3 320.5L531.3 322.1L532.5 324.2L533.0 326.9L534.8 326.5L537.2 326.3L539.4 326.5L541.4 326.5ZM658.5 311.0L659.8 312.2L660.8 313.6L661.5 315.0L662.6 316.3L664.5 317.5L666.5 318.6L667.9 317.4L669.1 315.9L670.0 314.6L670.8 313.8L672.3 313.0L674.3 311.8L673.4 310.7L672.1 309.8L671.1 308.8L670.7 307.4L670.2 305.7L669.2 304.2L667.2 305.0L665.4 305.8L663.8 306.3L662.2 306.8L660.5 307.8L658.9 309.3ZM669.7 283.7L669.9 285.8L670.2 287.9L671.0 289.9L672.7 290.0L674.5 289.5L676.1 288.8L677.6 288.6L678.8 287.4L680.1 286.3L681.4 285.0L682.6 283.6L683.1 284.0L683.0 282.5L682.7 281.1L681.8 279.6L680.4 278.1L679.1 276.4L677.9 277.0L676.8 277.9L675.9 279.0L675.0 279.8L673.4 280.7L671.3 282.1ZM659.4 324.7L659.8 326.1L659.3 327.3L658.4 329.1L658.1 331.5L660.9 332.8L663.7 334.1L664.8 335.4L664.6 336.1L665.9 335.0L667.2 333.8L668.4 332.2L669.1 330.2L670.2 329.6L671.7 329.4L670.8 328.6L671.1 328.2L670.4 327.6L669.3 326.4L667.7 324.8L666.2 323.3L665.5 321.9L665.3 320.6L664.1 321.0L662.7 322.2L661.1 323.6ZM701.5 316.6L699.5 316.3L697.9 315.9L696.8 315.2L695.9 314.3L694.6 313.1L692.6 311.8L690.4 310.9L688.8 312.4L688.1 314.7L689.6 316.4L690.6 318.1L691.0 319.8L691.6 321.5L692.8 322.9L693.9 324.1L694.4 325.1L696.2 325.3L698.1 325.5L700.1 323.9L699.2 321.3L700.2 320.5L701.1 319.7L702.1 317.6ZM691.2 309.5L693.3 308.7L694.7 307.6L696.2 306.5L697.9 306.1L699.9 306.1L701.9 305.8L701.8 303.9L701.5 302.0L701.4 300.0L701.7 298.1L701.2 297.3L700.9 296.5L699.5 295.7L698.0 296.3L696.5 297.1L694.8 298.0L692.8 298.5L690.8 298.8L689.5 299.5L690.1 301.6L690.9 303.7L691.4 305.7L691.3 307.5ZM520.8 317.9L519.2 318.4L517.7 318.1L516.5 317.9L515.0 318.4L512.7 319.4L512.6 321.4L512.3 323.0L511.9 324.3L511.6 325.5L511.6 326.8L512.9 327.5L514.6 328.7L516.1 330.2L517.6 330.7L519.2 331.1L520.6 330.0L521.9 328.3L523.0 326.3L523.8 324.6L524.5 323.5L525.1 322.5L523.0 321.0L521.3 319.5ZM541.5 338.9L542.8 337.6L544.2 335.9L545.7 334.5L547.1 334.1L548.4 334.2L548.3 332.5L547.2 330.2L545.8 327.7L544.4 326.8L544.2 326.4L543.2 325.9L541.4 326.5L539.4 326.5L537.2 326.3L534.8 326.5L533.0 326.9L533.0 330.4L534.7 332.1L536.1 333.4L536.9 334.7L537.8 336.0L539.6 337.4ZM628.0 329.1L627.8 328.0L626.6 326.9L625.1 326.3L623.9 325.5L623.5 324.4L623.1 323.2L620.9 323.1L618.6 322.4L616.4 322.3L616.2 324.2L615.6 326.3L614.6 328.2L613.9 329.8L613.5 331.3L614.4 332.7L616.0 333.9L617.9 335.0L619.5 336.1L620.8 335.0L622.3 333.4L623.9 331.7L625.4 330.4L626.8 329.7ZM533.0 330.4L533.0 326.9L532.5 324.2L531.3 322.1L529.2 322.4L527.9 322.7L527.0 322.8L525.1 322.5L524.5 323.5L523.8 324.6L523.0 326.3L521.9 328.3L520.6 330.0L519.2 331.1L520.3 332.1L522.1 332.9L524.0 333.9L525.6 335.1L527.0 334.0L528.3 332.9L529.6 331.9L531.0 331.2L532.2 330.9ZM619.9 338.0L621.2 339.1L622.6 340.2L623.3 341.3L624.5 341.0L625.8 340.6L627.2 339.9L628.7 339.0L630.6 338.3L633.0 338.2L635.4 338.6L635.3 337.6L634.9 335.6L634.8 333.0L633.8 332.8L632.9 332.4L631.5 331.5L629.6 330.4L628.0 329.1L626.8 329.7L625.4 330.4L623.9 331.7L622.3 333.4L620.8 335.0L619.5 336.1ZM685.4 331.3L687.3 331.2L686.5 332.9L685.5 335.1L684.3 337.3L683.3 338.6L682.3 339.2L683.5 340.6L685.5 342.2L686.9 343.8L687.9 345.2L688.9 344.7L690.0 343.8L692.0 342.2L694.5 340.7L696.6 339.8L698.4 339.5L696.8 338.2L695.4 337.0L694.6 335.8L693.8 334.4L692.3 333.0L690.9 331.3L690.1 329.8L689.2 330.4L687.6 330.7ZM687.5 286.2L689.9 287.9L689.6 289.4L689.0 291.2L688.2 292.7L687.4 294.0L686.9 295.2L686.8 296.7L688.4 298.1L689.5 299.5L690.8 298.8L692.8 298.5L694.8 298.0L696.5 297.1L698.0 296.3L699.5 295.7L698.6 294.2L697.8 292.1L697.6 289.7L697.7 287.3L696.7 285.9L695.3 284.7L694.3 283.5L693.7 282.3L692.8 284.7L692.2 286.8L690.5 286.8L689.4 286.6ZM642.7 302.8L644.3 303.9L645.9 304.9L647.6 304.0L649.5 303.8L651.1 303.9L652.1 303.8L652.8 303.3L653.5 301.3L654.7 299.3L655.9 297.5L654.0 296.0L652.6 294.8L651.2 293.7L648.9 293.4L646.7 293.1L644.9 293.2L643.6 294.7L642.5 295.8L641.4 296.4L641.6 298.1L642.1 300.3ZM688.1 314.7L688.8 312.4L690.4 310.9L691.2 309.5L691.3 307.5L689.4 307.3L687.2 306.7L685.4 305.7L684.2 304.7L682.6 303.8L680.3 303.3L679.6 305.1L678.9 306.7L678.3 307.9L677.6 308.8L676.8 310.0L675.6 311.6L676.7 312.4L678.0 313.4L679.4 314.4L680.9 315.3L682.5 316.0L684.3 316.7L686.2 316.0ZM684.3 316.7L683.8 318.3L683.4 319.8L683.0 321.3L682.5 322.9L681.8 324.3L680.9 325.8L681.1 328.1L682.7 330.0L685.4 331.3L687.6 330.7L689.2 330.4L690.1 329.8L690.9 327.9L692.5 326.2L694.4 325.1L693.9 324.1L692.8 322.9L691.6 321.5L691.0 319.8L690.6 318.1L689.6 316.4L688.1 314.7L686.2 316.0ZM681.3 297.1L681.5 295.1L680.4 292.9L678.7 290.5L677.6 288.6L676.1 288.8L674.5 289.5L672.7 290.0L671.0 289.9L670.1 290.7L668.5 291.6L666.9 293.1L665.4 294.8L664.9 296.7L666.0 298.0L667.0 299.3L667.7 300.6L668.6 301.9L670.0 301.8L671.5 301.1L673.7 299.8L675.9 298.6L677.7 298.4L679.1 298.8L680.2 298.3ZM627.8 328.0L628.0 329.1L629.6 330.4L631.5 331.5L632.9 332.4L633.8 332.8L634.8 333.0L637.5 331.0L635.8 330.0L637.2 328.9L638.5 327.8L639.3 326.2L639.9 324.3L640.3 322.5L640.7 321.0L641.1 319.3L641.5 317.4L642.1 315.5L642.7 314.0L641.5 314.3L639.9 315.7L638.4 317.1L637.1 316.7L634.9 316.3L632.9 316.9L632.9 318.4L632.9 319.6L632.3 320.7L631.1 321.7L629.8 322.9L628.9 324.5L628.3 326.3ZM541.5 338.9L540.8 340.5L541.2 342.0L541.7 343.4L542.7 344.4L543.8 345.2L545.0 346.5L546.4 348.3L548.3 348.7L550.1 349.4L552.0 349.9L553.0 348.4L553.4 346.2L553.3 344.0L553.4 342.4L552.4 340.7L552.3 339.2L552.2 337.8L551.5 336.3L549.5 335.4L548.4 334.2L547.1 334.1L545.7 334.5L544.2 335.9L542.8 337.6ZM585.9 296.2L586.5 297.9L588.0 299.7L589.5 301.6L590.1 303.3L590.4 304.9L589.6 306.2L588.7 307.9L589.9 308.0L590.8 308.8L592.4 309.0L594.0 309.4L596.0 310.4L598.2 311.8L600.0 313.0L601.4 312.3L602.7 311.1L603.8 310.1L604.9 309.6L605.0 308.2L604.0 306.5L602.0 304.9L600.4 303.5L599.9 302.3L599.8 301.1L599.0 299.8L596.8 299.5L594.5 299.2L592.8 299.5L592.1 297.7L591.1 296.1L589.5 294.5L587.5 295.1ZM670.8 328.6L671.7 329.4L673.9 329.7L676.0 330.3L677.5 331.0L678.6 331.6L680.3 331.8L682.9 331.7L685.4 331.4L682.7 330.1L681.1 328.1L680.9 325.8L681.8 324.3L682.5 322.9L683.0 321.3L683.4 319.8L683.8 318.3L684.3 316.7L682.5 316.0L680.9 315.3L679.4 314.4L678.0 313.4L676.7 312.4L675.6 311.6L674.3 311.8L673.5 313.7L672.8 315.3L672.6 316.8L673.2 318.6L673.9 320.7L674.4 322.9L674.2 324.9L673.5 326.6L672.6 327.8L671.1 328.2ZM579.0 313.3L580.8 312.4L581.9 313.2L583.2 313.9L585.0 314.4L586.9 314.8L588.5 315.1L589.4 316.6L590.6 318.3L591.5 320.1L591.6 321.8L591.7 323.4L592.5 324.9L593.5 326.2L594.1 327.6L594.0 330.0L595.3 328.2L597.1 326.5L598.6 325.3L598.5 324.0L597.7 322.8L597.9 320.7L598.2 318.7L598.0 317.3L598.5 316.0L599.3 314.6L600.0 313.0L598.2 311.8L596.0 310.4L594.0 309.4L592.4 309.0L590.8 308.8L589.9 308.0L588.7 307.9L588.1 309.9L587.7 311.8L585.8 312.3L584.2 312.3L582.8 312.1L581.6 311.8L580.3 311.9ZM617.1 274.9L617.5 273.8L616.1 276.0L616.2 275.8ZM381.0 432.3L381.6 433.5L382.0 434.6L382.9 433.6L384.0 432.7L385.3 431.6L386.5 430.3L387.8 428.5L387.6 428.1L386.2 428.9L384.5 430.2L382.6 431.4ZM370.1 442.9L369.8 443.7L371.9 444.4L373.9 444.6L374.9 446.8L376.2 448.7L376.7 450.3L376.9 449.1L376.4 447.4L375.7 445.2L377.5 443.9L379.5 443.1L382.1 443.2L380.2 442.3L378.0 441.5L376.4 441.0L375.2 440.7L375.3 440.1L373.7 441.3L371.9 442.4ZM370.1 442.9L371.9 442.4L373.7 441.3L375.3 440.1L375.3 439.0L375.1 437.9L374.9 436.4L374.7 434.7L374.7 433.0L375.3 432.8L374.7 432.6L373.1 433.1L371.4 433.6L371.2 435.8L370.7 438.5L370.3 441.0ZM483.0 352.3L481.0 351.6L479.2 351.0L477.5 351.0L476.6 350.3L477.4 351.1L479.3 351.9L481.6 352.8L479.4 354.9L476.9 357.8L478.8 358.3L480.1 358.5L481.4 358.8L483.1 359.1L484.6 357.2L486.1 356.7L485.3 355.3L484.8 353.9ZM374.6 418.5L372.6 416.7L370.7 415.0L369.9 413.5L369.6 412.2L368.8 410.9L367.5 413.0L366.0 414.6L364.4 415.8L362.6 417.3L361.4 419.1L363.1 418.3L364.7 417.5L366.1 417.2L367.3 417.3L369.0 417.6L371.5 419.6L373.5 421.4L374.1 422.5L374.7 420.9ZM371.4 433.6L369.1 432.6L366.6 432.0L365.1 431.5L364.1 431.1L362.8 430.5L360.7 429.9L358.6 429.3L358.4 430.1L361.8 431.6L362.3 433.5L362.7 435.0L364.1 436.1L366.0 437.0L367.4 438.5L368.1 440.3L368.7 442.1L369.5 443.5L369.8 443.7L370.1 442.9L370.3 441.0L370.7 438.5L371.2 435.8ZM438.9 347.7L440.2 347.9L442.1 347.8L444.1 347.7L446.0 347.6L447.8 347.6L447.1 345.7L446.2 344.2L445.5 343.0L445.5 341.7L445.8 340.2L444.0 338.6L443.1 340.1L441.7 341.8L439.9 343.6L438.5 345.0ZM472.6 364.3L470.5 366.3L468.7 365.3L466.1 364.3L464.7 362.3L463.9 360.9L463.7 359.6L463.5 358.2L463.4 356.6L462.0 358.0L460.5 359.6L459.2 361.4L460.0 363.1L460.9 364.4L461.4 365.5L461.6 366.7L463.1 367.1L465.2 367.6L467.3 368.0L468.6 368.1L469.7 368.1L471.0 368.0L471.9 366.4ZM346.4 383.7L344.6 383.8L344.9 385.1L344.6 386.8L344.7 388.8L344.6 391.3L345.0 393.6L345.4 395.2L345.6 396.5L345.9 397.8L347.2 397.0L348.6 395.9L350.1 394.0L351.5 392.0L352.9 391.2L351.9 390.0L350.3 388.7L348.4 387.4L347.3 385.9L346.9 384.6ZM344.7 358.0L344.1 356.3L342.9 354.7L339.9 354.0L337.3 353.1L335.8 352.0L335.5 353.3L335.7 354.7L336.6 356.2L337.7 358.0L338.4 359.7L338.5 361.3L338.6 363.6L340.1 363.1L340.9 362.1L341.5 360.2L342.9 359.0ZM354.6 410.3L356.7 409.7L359.3 409.1L361.5 408.1L362.8 406.6L361.2 406.8L359.7 406.9L359.5 405.2L359.3 403.5L358.6 401.9L359.9 401.0L361.9 400.5L363.9 400.1L362.1 399.6L359.4 398.5L357.1 397.0L355.8 398.4L355.0 400.5L354.1 402.3L355.0 404.2L355.7 405.6L355.7 407.1L355.1 408.7ZM385.8 352.9L386.5 354.2L386.2 355.8L385.7 357.7L385.9 359.7L386.9 361.7L389.0 361.8L391.0 361.8L392.6 361.9L393.5 360.5L394.2 359.5L394.8 357.9L395.3 355.3L393.4 355.5L391.1 355.5L389.6 355.2L388.9 354.6L387.8 353.8ZM394.6 407.3L393.9 409.3L393.1 411.7L392.5 414.0L392.1 416.1L394.0 417.4L396.1 418.3L397.6 418.9L398.4 419.8L399.6 421.3L398.9 418.8L398.6 416.8L398.0 415.1L397.7 413.2L398.0 411.4L398.7 409.5L399.4 407.6L400.2 406.2L398.5 406.1L396.6 406.7ZM358.6 429.3L360.7 429.9L362.8 430.5L364.1 431.1L365.1 431.5L366.6 432.0L369.1 432.6L371.4 433.6L373.1 433.1L374.7 432.6L374.6 429.7L372.7 430.7L370.6 431.2L368.0 429.9L367.1 428.6L366.4 427.4L365.7 426.0L364.5 424.6L363.4 423.3L362.9 421.9L362.3 420.7L361.2 419.7L360.6 421.1L362.0 421.9L361.6 423.1L360.6 424.7L359.4 426.9ZM385.1 352.6L383.8 353.6L381.8 355.6L379.7 357.5L378.1 358.3L377.0 359.1L378.4 361.7L379.7 362.3L380.5 362.6L381.6 362.8L383.5 363.6L385.0 362.7L386.9 361.7L385.9 359.7L385.7 357.7L386.2 355.8L386.5 354.2L385.8 352.9ZM374.0 379.7L376.0 379.8L378.6 380.0L381.0 379.7L380.3 377.7L379.6 375.4L379.4 373.0L381.1 372.4L383.3 372.6L385.5 372.9L384.3 370.6L382.6 370.3L380.6 369.8L378.5 369.7L376.6 370.2L374.9 371.1L373.0 372.0L373.8 373.9L374.7 375.3L375.1 376.5L374.7 377.8ZM354.1 402.3L352.1 401.6L350.3 400.9L348.9 400.5L347.4 400.8L347.4 402.6L347.4 404.6L347.8 406.4L348.8 408.0L349.8 409.5L350.9 410.8L351.0 412.1L352.0 413.4L353.2 411.9L354.6 410.3L355.1 408.7L355.7 407.1L355.7 405.6L355.0 404.2ZM384.3 388.7L385.2 390.0L387.3 391.2L390.1 392.4L391.8 393.5L393.0 393.5L394.1 391.3L394.9 388.5L395.3 386.4L395.4 384.9L393.3 384.1L391.8 383.5L391.3 384.0L390.0 384.1L389.3 384.2L388.1 384.0L386.2 383.6L386.0 385.8L385.3 387.4ZM357.1 397.0L357.1 395.4L357.2 394.1L356.8 393.0L354.6 392.1L352.9 391.2L351.5 392.0L350.1 394.0L348.6 395.9L347.2 397.0L345.9 397.8L346.3 399.1L346.9 400.1L346.5 398.7L348.6 398.2L350.6 397.8L350.6 399.6L349.2 399.9L347.7 400.6L349.1 400.5L350.5 400.9L352.2 401.6L354.1 402.3L355.0 400.5L355.8 398.4ZM402.6 380.0L402.6 382.3L403.1 383.6L403.4 381.8L404.8 382.6L406.5 383.2L408.4 383.4L408.1 384.8L407.6 385.8L406.9 387.1L406.3 388.9L405.9 391.1L405.9 393.0L406.2 394.4L406.6 394.4L406.2 392.8L406.2 390.4L406.7 388.1L407.5 386.4L408.4 385.1L409.2 383.5L409.9 381.3L410.4 379.2L411.3 378.1L412.1 376.9L412.9 375.0L411.3 374.6L409.5 374.1L407.7 373.5L405.8 374.0L403.8 374.2L401.7 374.9L402.2 376.8L402.9 378.5L403.4 380.1ZM407.7 373.5L407.5 371.7L407.6 369.8L408.0 368.0L408.4 366.4L408.2 364.9L407.5 363.3L406.6 361.6L405.5 360.8L404.1 361.2L402.8 362.2L401.7 363.6L401.0 364.6L400.0 365.1L399.1 366.9L400.7 368.5L402.3 369.9L403.1 371.2L402.1 372.9L401.7 374.9L403.8 374.2L405.8 374.0ZM370.5 385.1L370.9 383.7L370.8 382.0L370.2 380.5L368.2 379.5L366.0 378.7L364.7 377.9L363.7 377.0L362.3 376.0L360.6 375.0L359.5 375.8L358.2 376.5L356.2 377.6L356.0 377.9L356.2 379.3L358.8 379.5L361.1 379.5L362.6 379.3L363.6 379.1L364.2 380.4L365.3 381.8L364.9 383.6L364.0 385.6L362.9 387.1L362.7 387.1L364.7 387.3L366.3 387.4L367.8 387.4L369.1 386.0ZM398.5 406.1L400.2 406.2L400.8 404.7L402.3 403.5L403.6 401.8L404.9 399.7L405.8 397.7L406.5 396.3L406.9 395.5L406.6 394.4L406.2 394.4L406.4 394.8L404.5 394.7L403.0 395.2L402.6 393.1L401.7 393.0L400.4 393.4L398.4 394.2L396.0 394.9L396.1 396.8L396.1 398.2L396.0 399.3L396.3 400.3L397.1 402.0L398.0 404.0ZM356.8 393.0L358.3 391.6L358.9 388.8L356.8 388.7L355.1 388.4L354.4 386.3L353.2 384.0L353.8 382.1L354.6 380.6L355.8 379.3L356.2 379.3L356.0 377.9L354.3 378.5L352.9 378.9L351.7 379.6L350.6 380.9L349.3 382.3L347.9 383.1L346.4 383.7L346.9 384.6L347.3 385.9L348.4 387.4L350.3 388.7L351.9 390.0L352.9 391.2L354.6 392.1ZM459.2 361.4L460.5 359.6L462.0 358.0L463.4 356.6L463.6 355.3L465.4 354.1L463.6 355.3L462.8 354.2L461.7 353.1L460.0 352.1L458.4 351.2L456.7 351.0L455.2 350.7L453.6 350.3L451.8 349.7L451.7 351.9L451.3 353.9L451.0 355.5L451.3 356.8L453.4 357.8L455.5 358.9L456.8 359.9L457.7 360.8ZM386.2 417.4L385.4 419.9L384.8 422.0L384.5 423.4L385.9 425.1L387.3 426.7L387.6 428.1L387.8 428.5L388.9 427.6L389.9 426.4L390.8 424.6L391.4 422.5L393.1 421.7L394.5 421.2L396.0 421.2L397.9 421.5L399.7 421.8L399.6 421.3L398.4 419.8L397.6 418.9L396.1 418.3L394.0 417.4L392.1 416.1L390.6 416.3L389.0 416.3L387.5 416.6ZM371.1 368.5L371.7 370.3L373.0 372.0L374.9 371.1L376.6 370.2L378.5 369.7L380.6 369.8L382.6 370.3L384.3 370.6L384.7 368.5L384.4 366.0L383.5 363.6L381.6 362.8L380.5 362.6L379.7 362.3L378.4 361.7L377.0 363.4L375.3 364.6L373.8 365.4L372.4 366.7ZM374.7 432.6L375.3 432.8L376.7 432.0L377.7 431.0L379.2 430.0L381.0 432.3L382.6 431.4L384.5 430.2L386.2 428.9L387.6 428.1L387.3 426.7L385.9 425.1L384.5 423.4L383.3 422.7L382.3 422.3L380.7 422.3L378.4 422.6L376.1 423.0L374.3 423.3L374.1 422.9L373.9 424.4L374.7 426.3L375.8 428.5L374.6 429.7ZM356.0 377.9L356.2 377.6L355.5 376.1L354.2 374.7L351.6 373.3L349.6 371.9L348.3 372.2L347.3 372.5L345.9 373.1L344.3 373.9L342.4 374.8L340.9 375.4L342.1 377.3L342.5 379.3L342.9 381.1L343.7 382.7L344.6 383.8L346.4 383.7L347.9 383.1L349.3 382.3L350.6 380.9L351.7 379.6L352.9 378.9L354.3 378.5ZM343.1 380.4L342.9 378.4L342.7 376.2L344.4 376.8L346.5 377.3L346.6 379.5L346.9 381.4L344.6 381.2ZM370.5 385.1L369.1 386.0L367.8 387.4L368.5 389.9L369.7 391.9L369.5 391.4L372.1 391.6L372.2 393.3L372.2 395.1L371.4 395.8L372.9 396.8L374.6 397.7L375.9 398.5L377.1 398.9L378.2 397.0L379.5 395.3L380.5 393.7L380.8 392.0L380.7 390.0L378.9 389.1L377.4 388.2L376.3 387.5L374.9 386.9L372.6 386.2ZM371.1 368.5L369.6 368.2L367.9 367.5L366.2 366.7L364.9 366.0L364.3 367.3L363.4 368.9L362.2 370.9L361.1 373.1L360.6 375.0L362.3 376.0L363.7 377.0L364.7 377.9L366.0 378.7L368.2 379.5L370.2 380.5L370.8 382.0L370.9 383.7L372.4 381.7L374.0 379.7L374.7 377.8L375.1 376.5L374.7 375.3L373.8 373.9L373.0 372.0L371.7 370.3ZM364.2 376.7L364.0 374.2L363.5 371.4L366.0 370.8L367.9 371.0L369.3 371.7L370.9 372.1L371.6 373.6L373.1 374.8L374.3 376.1L372.2 375.5L369.6 375.4L367.3 375.7L365.6 376.3ZM378.0 400.6L378.1 402.1L378.4 403.3L378.0 404.8L378.8 406.3L379.7 407.9L381.3 409.7L382.9 408.7L384.1 408.5L385.3 408.6L386.6 408.3L388.1 407.4L389.7 406.3L391.2 405.5L390.0 404.2L388.3 402.7L387.4 400.5L386.1 399.8L384.8 399.2L382.9 399.2L380.4 399.8ZM378.0 404.8L378.4 403.3L378.1 402.1L378.0 400.6L377.1 398.9L375.9 398.5L374.6 397.7L372.9 396.8L371.4 395.8L370.6 396.4L369.4 394.9L367.8 396.8L366.0 399.2L367.3 398.2L367.6 399.8L368.2 401.9L368.9 404.0L369.7 405.8L368.1 406.0L366.6 405.9L368.0 407.2L370.0 407.7L372.0 407.8L374.0 407.0L376.0 405.8ZM444.0 338.6L441.6 337.3L440.1 335.9L440.1 333.8L440.5 331.7L438.2 331.8L436.2 331.1L436.1 332.8L435.3 334.9L433.3 335.7L431.6 336.1L430.2 336.7L429.9 338.8L431.4 339.6L432.7 340.3L433.8 341.1L435.4 342.1L437.1 343.5L438.5 345.0L439.9 343.6L441.7 341.8L443.1 340.1ZM398.5 406.1L398.0 404.0L397.1 402.0L396.3 400.3L396.0 399.3L396.1 398.2L396.1 396.8L396.0 394.9L394.0 394.3L393.0 393.5L391.8 393.5L390.7 394.5L389.5 396.2L388.4 398.5L387.4 400.5L388.3 402.7L390.0 404.2L391.2 405.5L392.7 406.3L394.6 407.3L396.6 406.7ZM476.7 381.7L476.7 380.1L476.3 378.1L475.8 376.0L475.6 373.7L475.4 371.5L475.1 369.7L472.8 368.8L471.0 368.0L469.7 368.1L468.6 368.1L467.3 368.0L465.2 367.6L463.1 367.1L461.6 366.7L460.5 367.9L458.8 369.8L459.7 369.3L461.4 370.1L463.2 370.9L464.2 371.8L464.8 372.8L466.3 373.8L468.8 374.8L471.2 375.6L473.0 376.1L474.4 376.3L475.6 376.0L475.7 378.1L475.6 380.0L475.3 381.5ZM378.0 404.8L376.0 405.8L374.0 407.0L372.0 407.8L370.0 407.7L368.0 407.2L368.4 408.8L368.8 410.9L369.6 412.2L369.9 413.5L370.7 415.0L372.6 416.7L374.6 418.5L375.9 416.9L376.8 415.9L377.7 415.2L379.2 413.8L381.5 411.6L381.3 409.7L379.7 407.9L378.8 406.3ZM374.1 422.5L374.3 423.3L376.1 423.0L378.4 422.6L380.7 422.3L382.3 422.3L383.3 422.7L384.5 423.4L384.8 422.0L385.4 419.9L386.2 417.4L385.2 415.9L383.9 414.8L383.0 413.9L382.4 412.8L381.5 411.6L379.2 413.8L377.7 415.2L376.8 415.9L375.9 416.9L374.6 418.5L374.7 420.9ZM355.3 356.2L356.8 356.8L358.8 357.0L361.1 357.0L363.2 356.9L364.6 356.8L363.1 359.0L361.9 361.1L361.2 362.7L361.1 363.8L360.8 364.2L362.8 364.2L364.9 366.0L366.2 366.7L367.9 367.5L369.6 368.2L371.1 368.5L372.4 366.7L373.8 365.4L375.3 364.6L377.0 363.4L378.4 361.7L377.0 359.1L375.4 360.2L373.6 360.9L371.7 359.7L369.6 358.7L367.6 357.9L365.9 357.3L364.6 356.8L363.1 356.8L361.1 357.0L358.8 357.0L356.8 356.8ZM370.5 385.1L372.6 386.2L374.9 386.9L376.3 387.5L377.4 388.2L378.9 389.1L380.7 390.0L382.3 389.0L384.3 388.7L385.3 387.4L386.0 385.8L386.2 383.6L384.0 383.0L383.1 381.5L382.3 380.6L381.0 379.7L378.6 380.0L376.0 379.8L374.0 379.7L372.4 381.7L370.9 383.7ZM360.6 375.0L361.1 373.1L362.2 370.9L363.4 368.9L364.3 367.3L364.9 366.0L362.8 364.2L360.8 364.2L359.6 365.2L357.9 366.7L356.2 368.2L355.0 369.3L353.2 369.5L351.6 369.7L350.3 370.1L350.3 369.8L349.6 371.9L351.6 373.3L354.2 374.7L355.5 376.1L356.2 377.6L358.2 376.5L359.5 375.8ZM381.5 411.6L382.4 412.8L383.0 413.9L383.9 414.8L385.2 415.9L386.2 417.4L387.5 416.6L389.0 416.3L390.6 416.3L392.1 416.1L392.5 414.0L393.1 411.7L393.9 409.3L394.6 407.3L392.7 406.3L391.2 405.5L389.7 406.3L388.1 407.4L386.6 408.3L385.3 408.6L384.1 408.5L382.9 408.7L381.3 409.7ZM377.1 398.9L378.0 400.6L380.4 399.8L382.9 399.2L384.8 399.2L386.1 399.8L387.4 400.5L388.4 398.5L389.5 396.2L390.7 394.5L391.8 393.5L390.1 392.4L387.3 391.2L385.2 390.0L384.3 388.7L382.3 389.0L380.7 390.0L380.8 392.0L380.5 393.7L379.5 395.3L378.2 397.0ZM405.5 360.8L405.0 359.1L405.2 357.6L404.7 356.2L403.5 354.8L401.3 354.4L398.9 353.9L396.8 354.2L395.3 355.3L394.8 357.9L394.2 359.5L393.5 360.5L392.6 361.9L393.0 363.4L394.8 363.7L396.9 363.8L398.6 364.2L400.0 365.1L401.0 364.6L401.7 363.6L402.8 362.2L404.1 361.2ZM492.3 397.7L493.9 398.0L495.7 398.0L498.2 397.8L500.8 398.1L500.7 396.3L500.2 394.8L499.8 393.4L499.5 392.2L499.6 391.0L499.8 389.4L499.9 387.5L500.0 385.6L500.2 383.7L498.3 383.7L496.3 384.2L494.7 384.8L493.6 385.4L492.3 385.7L490.6 386.1L491.6 387.6L491.9 389.6L491.7 391.9L491.7 394.1L492.0 396.0ZM465.4 354.1L466.9 353.5L468.3 353.1L469.2 354.6L470.3 356.0L471.4 357.4L472.9 359.0L474.6 360.9L473.8 362.6L472.6 364.3L471.9 366.4L471.0 368.0L472.8 368.8L475.1 369.7L476.8 368.9L478.9 367.8L480.5 366.5L481.5 365.3L482.4 364.6L483.5 364.1L483.2 361.7L483.1 359.1L481.4 358.8L480.1 358.5L478.8 358.3L476.9 357.8L475.5 359.1L474.3 359.9L472.8 358.3L471.6 356.9L470.8 355.6L469.9 354.2L469.1 352.7L468.8 351.2L468.4 349.4L468.4 351.4L468.2 353.1L466.8 353.4ZM393.0 393.5L394.0 394.3L396.0 394.9L398.4 394.2L400.4 393.4L401.7 393.0L402.6 393.1L402.5 392.1L402.4 391.1L402.4 389.7L402.4 387.8L402.7 385.7L403.1 383.6L402.6 382.3L402.6 380.0L400.9 380.4L398.4 381.2L395.9 382.3L394.9 381.4L394.7 380.2L393.1 382.2L391.8 383.5L393.3 384.1L395.4 384.9L395.3 386.4L394.9 388.5L394.1 391.3ZM410.0 352.5L408.9 353.1L407.4 353.9L405.4 354.6L403.5 354.8L404.7 356.2L405.2 357.6L405.0 359.1L405.5 360.8L406.6 361.6L409.1 362.2L411.5 362.3L413.2 361.8L414.5 361.0L416.0 360.4L416.4 358.9L416.6 357.6L417.0 356.2L418.1 354.8L419.5 353.4L420.6 352.2L421.0 351.0L419.1 350.9L416.6 351.0L414.2 351.4L412.4 351.8L411.1 352.1ZM338.6 363.6L339.0 365.6L339.6 367.3L339.9 368.8L339.8 370.4L339.8 373.1L340.9 375.4L342.4 374.8L344.3 373.9L345.9 373.1L347.3 372.5L348.3 372.2L349.6 371.9L350.3 369.8L350.3 367.8L348.9 365.7L347.1 364.2L346.6 362.8L346.5 361.4L346.3 359.8L344.7 358.0L342.9 359.0L341.5 360.2L340.9 362.1L340.1 363.1ZM363.9 400.1L366.0 399.2L367.8 396.8L369.4 394.9L369.8 393.4L369.7 391.9L368.5 389.9L367.8 387.4L366.3 387.4L364.7 387.3L362.7 387.1L360.9 387.7L359.8 388.9L358.9 388.8L358.3 391.6L356.8 393.0L357.2 394.1L357.1 395.4L357.1 397.0L359.4 398.5L362.1 399.6ZM383.5 363.6L384.4 366.0L384.7 368.5L384.3 370.6L385.5 372.9L387.2 372.9L388.6 372.4L389.5 373.7L390.8 374.9L392.5 376.2L394.0 377.4L393.4 375.6L392.7 373.7L392.2 371.8L392.0 370.1L393.4 369.2L394.7 368.0L396.2 366.7L398.3 365.9L399.1 366.9L400.0 365.1L398.6 364.2L396.9 363.8L394.8 363.7L393.0 363.4L392.6 361.9L391.0 361.8L389.0 361.8L386.9 361.7L385.0 362.7ZM368.0 407.2L366.6 405.9L364.7 406.6L362.8 406.6L361.5 408.1L359.3 409.1L356.7 409.7L354.6 410.3L353.2 411.9L352.0 413.4L354.0 414.6L355.9 415.9L357.0 417.6L357.8 419.2L359.0 420.4L360.6 421.1L361.2 419.7L360.8 419.4L361.4 419.1L362.6 417.3L364.4 415.8L366.0 414.6L367.5 413.0L368.8 410.9L368.4 408.8ZM430.3 363.5L428.3 364.3L425.7 365.0L423.5 365.3L421.9 365.0L420.9 364.4L419.9 363.9L419.2 366.5L417.9 368.9L416.9 370.7L416.7 371.7L417.2 372.7L419.8 374.4L421.0 375.5L422.7 376.6L425.0 377.6L427.4 378.3L427.6 376.2L427.7 373.7L427.8 371.6L428.1 370.1L428.7 368.8L429.5 367.0L430.5 364.9ZM416.0 360.4L414.5 361.0L413.2 361.8L411.5 362.3L409.1 362.2L406.6 361.6L407.5 363.3L408.2 364.9L408.4 366.4L408.0 368.0L407.6 369.8L407.5 371.7L407.7 373.5L409.5 374.1L411.3 374.6L412.9 375.0L413.8 371.7L415.4 372.1L417.2 372.7L416.7 371.7L416.9 370.7L417.9 368.9L419.2 366.5L419.9 363.9L418.1 361.7ZM437.6 353.1L438.5 351.1L438.8 349.1L438.9 347.7L438.5 345.0L437.1 343.5L435.4 342.1L433.8 341.1L432.7 340.3L431.4 339.6L429.9 338.8L429.7 340.9L429.6 342.9L429.5 344.7L429.5 345.9L427.9 346.6L426.3 347.4L424.9 348.9L422.7 350.6L424.0 351.2L425.8 352.0L428.0 352.8L429.0 353.8L429.6 354.7L431.2 353.5L432.9 353.4L434.9 353.6ZM437.6 353.1L439.1 354.5L440.2 355.8L440.7 357.1L441.5 358.4L442.7 359.7L443.7 361.0L444.4 362.1L446.0 360.7L447.7 358.7L449.5 357.2L451.3 356.8L451.0 355.5L451.3 353.9L451.7 351.9L451.8 349.7L449.9 349.0L448.0 348.2L447.8 347.6L446.0 347.6L444.1 347.7L442.1 347.8L440.2 347.9L438.9 347.7L438.8 349.1L438.5 351.1ZM501.0 369.5L500.9 367.7L500.2 365.5L499.4 363.0L499.0 361.0L497.6 361.2L496.3 362.0L494.5 361.6L492.5 360.9L491.0 359.9L489.3 358.7L487.1 357.6L486.1 356.7L484.6 357.2L483.1 359.1L483.2 361.7L483.5 364.1L484.9 365.9L486.3 367.4L487.5 368.5L488.4 369.3L489.3 370.2L490.6 371.1L492.2 370.1L494.0 369.2L496.3 368.9L498.9 369.2ZM429.6 354.7L429.0 353.8L428.0 352.8L425.8 352.0L424.0 351.2L422.7 350.6L421.0 351.0L420.6 352.2L419.5 353.4L418.1 354.8L417.0 356.2L416.6 357.6L416.4 358.9L416.0 360.4L418.1 361.7L419.9 363.9L420.9 364.4L421.9 365.0L423.5 365.3L425.7 365.0L428.3 364.3L430.3 363.5L430.3 362.0L429.9 360.7L429.4 359.2L429.2 357.2ZM484.9 428.3L486.7 426.6L487.7 426.2L488.6 425.1L489.7 424.0L491.3 423.4L493.3 423.2L495.6 423.3L497.8 423.2L499.2 423.0L500.3 422.6L499.9 420.6L499.4 418.7L499.2 417.0L499.5 415.5L500.2 413.7L500.8 411.8L501.0 410.0L500.5 408.7L499.7 407.6L499.1 406.4L499.0 404.8L499.6 402.8L500.4 400.4L500.8 398.1L498.2 397.8L495.7 398.0L493.9 398.0L492.3 397.7L491.0 398.7L489.7 399.8L489.8 402.1L489.8 404.1L489.8 406.1L491.5 405.9L493.5 405.7L495.3 405.7L496.6 405.8L496.2 407.7L495.8 409.8L495.6 412.0L495.6 413.8L495.6 415.3L495.7 416.6L495.8 418.1L496.2 420.1L496.5 422.2L494.1 422.5L491.9 422.7L490.2 423.3L488.9 424.5L487.8 425.8L486.7 426.5L485.9 427.6ZM430.5 364.9L431.5 365.3L433.2 366.1L435.5 367.0L437.7 367.8L439.5 368.2L441.0 368.2L442.7 367.9L443.8 366.2L443.7 364.5L443.8 363.3L444.4 362.1L443.7 361.0L442.7 359.7L441.5 358.4L440.7 357.1L440.2 355.8L439.1 354.5L437.6 353.1L434.9 353.6L432.9 353.4L431.2 353.5L429.6 354.7L429.2 357.2L429.4 359.2L429.9 360.7L430.3 362.0L430.3 363.5ZM486.2 383.6L486.5 384.8L488.0 385.5L490.6 386.1L492.3 385.7L493.6 385.4L494.7 384.8L496.3 384.2L498.3 383.7L500.2 383.7L500.4 381.9L500.5 380.2L500.3 378.5L499.7 376.6L499.2 374.6L499.2 373.0L499.7 371.9L500.4 370.9L501.0 369.5L498.9 369.2L496.3 368.9L494.0 369.2L492.2 370.1L490.6 371.1L490.3 373.0L490.0 374.5L489.6 375.8L489.2 377.4L488.7 379.1L488.0 380.6L487.2 381.9ZM442.1 373.5L442.6 375.3L444.2 377.1L443.5 375.5L443.6 373.8L444.1 372.0L444.2 370.3L443.6 368.6L445.5 368.6L446.7 368.8L447.2 369.3L448.2 370.0L450.1 370.8L452.3 371.6L454.1 372.3L455.2 372.8L456.0 374.9L457.7 376.7L456.0 374.9L455.3 372.9L456.6 371.6L458.8 369.8L460.5 367.9L461.6 366.7L461.4 365.5L460.9 364.4L460.0 363.1L459.2 361.4L457.7 360.8L456.8 359.9L455.5 358.9L453.4 357.8L451.3 356.8L449.5 357.2L447.7 358.7L446.0 360.7L444.4 362.1L443.8 363.3L443.7 364.5L443.8 366.2L442.7 367.9L442.9 369.8L442.7 371.6ZM427.4 378.3L429.2 379.0L430.4 379.4L431.7 379.6L433.3 380.1L434.5 381.1L435.8 382.6L438.3 382.1L440.5 382.0L442.1 381.4L443.8 380.3L445.8 379.0L444.2 377.1L442.6 375.3L442.1 373.5L442.7 371.6L442.9 369.8L442.7 367.9L441.0 368.2L439.5 368.2L437.7 367.8L435.5 367.0L433.2 366.1L431.5 365.3L430.5 364.9L429.5 367.0L428.7 368.8L428.1 370.1L427.8 371.6L427.7 373.7L427.6 376.2ZM478.5 383.5L480.8 383.6L483.0 383.6L484.9 383.6L486.2 383.6L487.2 381.9L488.0 380.6L488.7 379.1L489.2 377.4L489.6 375.8L490.0 374.5L490.3 373.0L490.6 371.1L489.3 370.2L488.4 369.3L487.5 368.5L486.3 367.4L484.9 365.9L483.5 364.1L482.4 364.6L481.5 365.3L480.5 366.5L478.9 367.8L476.8 368.9L475.1 369.7L475.4 371.5L475.6 373.7L475.8 376.0L476.3 378.1L476.7 380.1L476.7 381.7L477.6 382.5ZM458.2 377.1L458.9 377.9L459.7 379.3L460.6 380.5L462.2 381.2L464.1 381.9L464.1 383.9L463.3 386.6L464.5 387.1L466.3 387.7L468.7 388.4L470.8 388.9L472.3 389.2L473.7 389.2L475.2 389.0L476.2 391.1L476.8 393.1L476.7 394.7L476.4 396.2L476.4 397.7L476.8 399.1L477.2 400.4L477.4 401.9L477.5 403.7L478.8 403.9L480.6 404.3L482.6 404.8L484.4 405.3L486.2 405.8L488.1 406.0L489.8 406.1L489.8 404.1L489.8 402.1L489.7 399.8L491.0 398.7L492.3 397.7L492.0 396.0L491.7 394.1L491.7 391.9L491.9 389.6L491.6 387.6L490.6 386.1L488.0 385.5L486.5 384.8L486.2 383.6L484.9 383.6L483.0 383.6L480.8 383.6L478.5 383.5L477.6 382.5L476.7 381.7L475.3 381.5L474.8 382.8L474.3 384.1L474.2 386.0L474.5 388.4L473.2 388.2L472.0 387.9L470.1 387.4L467.8 386.6L466.4 385.1L466.0 383.4L465.4 382.0L463.7 381.2L461.6 380.7L460.3 379.8L459.5 378.5ZM482.9 435.3L484.6 437.0L485.7 439.0L486.0 440.7L486.3 442.0L487.1 443.2L488.1 444.6L487.6 446.7L487.0 448.5L486.4 450.2L487.2 450.2L488.7 451.6L489.7 453.3L490.2 454.8L490.8 455.8L492.0 456.4L493.8 457.2L495.1 458.5L495.8 460.0L496.7 461.4L498.2 462.8L499.8 464.0L499.5 462.6L499.3 460.7L499.7 458.6L500.3 456.4L500.9 454.4L500.9 452.8L500.2 451.2L499.4 449.4L499.0 447.4L499.3 445.7L500.0 444.4L498.3 443.9L496.2 443.7L494.4 443.8L492.9 443.9L491.5 444.0L490.0 444.1L488.2 444.0L487.2 442.8L486.5 441.6L486.2 440.3L485.8 438.6L484.6 436.7L482.9 435.0ZM481.3 465.5L483.2 466.3L485.5 467.0L486.8 467.9L487.1 469.0L487.8 470.2L489.6 471.4L491.7 472.3L493.0 472.8L493.9 473.2L495.1 473.8L496.8 474.9L498.3 476.3L499.4 477.7L499.4 477.7L499.8 475.9L500.1 473.7L500.3 471.4L500.3 469.4L500.3 467.7L500.2 466.2L500.1 465.0L499.8 464.0L498.2 462.8L496.7 461.4L495.8 460.0L495.1 458.5L493.8 457.2L492.0 456.4L490.8 455.8L490.2 454.8L489.7 453.3L488.7 451.6L487.2 450.1L486.4 450.2L486.0 451.5L485.6 453.2L485.1 455.6L484.6 458.1L483.9 460.0L483.0 461.3L482.1 462.3L481.6 463.4L481.5 465.2ZM477.6 469.6L474.8 471.4L476.0 472.5L477.8 473.2L479.1 474.3L479.8 476.0L481.0 477.9L483.0 479.6L481.1 477.9L479.9 476.1L479.2 474.3L478.1 473.2L476.4 472.5L475.1 471.5ZM442.2 387.5L443.6 388.6L445.2 389.9L446.7 391.2L448.2 392.5L449.6 393.7L450.5 395.0L451.1 396.4L452.2 398.2L454.1 400.3L455.8 401.4L456.9 401.9L457.8 402.2L459.3 402.6L461.3 403.4L459.6 402.5L458.4 401.9L457.5 401.4L456.5 400.5L454.8 399.1L455.8 398.2L457.3 397.1L458.6 395.8L459.3 394.1L459.6 392.3L460.0 390.8L460.9 389.4L462.0 388.1L463.3 386.6L461.9 388.2L460.6 389.6L459.7 391.1L459.3 392.8L458.9 394.7L457.7 396.4L456.0 397.5L454.7 398.5L453.2 396.9L452.3 395.6L451.6 394.4L450.7 393.4L449.6 392.4L448.1 391.4L446.7 390.3L445.2 389.3L443.6 388.4ZM461.3 403.4L462.3 404.9L463.0 406.3L463.9 407.7L465.3 409.1L466.5 410.7L466.5 412.7L466.1 414.6L466.6 416.6L468.4 418.9L469.8 421.3L468.9 419.1L467.6 416.7L466.8 414.7L467.0 412.8L467.6 411.1L467.7 409.7L466.3 408.5L464.6 407.4L463.4 406.1L462.5 404.8ZM467.8 436.2L467.6 438.6L467.4 441.0L467.1 443.0L466.8 444.4L466.4 445.3L466.8 444.6L467.3 443.4L467.6 441.6L467.9 439.5L468.3 437.3L468.6 435.4L469.0 433.9L469.2 432.6L469.2 431.1L469.0 429.5L468.8 428.1L468.9 429.7L468.9 431.4L468.7 432.9L468.3 434.3ZM468.1 456.3L468.4 458.2L469.7 459.7L471.3 461.0L472.2 462.3L472.3 463.8L472.5 465.2L473.3 466.6L474.1 468.1L474.6 469.8L474.8 471.4L474.6 469.7L474.3 468.1L473.6 466.6L472.9 465.2L472.6 463.8L472.5 462.3L471.6 461.0L469.9 459.7L468.5 458.3ZM786.0 739.6L787.6 740.7L789.5 741.7L790.7 742.7L791.6 743.4L793.0 744.2L794.8 745.3L795.9 746.9L796.1 748.7L797.0 749.9L799.8 750.3L802.4 750.5L803.7 750.9L804.7 752.1L806.4 753.5L807.9 754.8L808.9 756.1L809.1 753.9L808.5 752.1L807.3 750.2L806.2 748.6L805.4 747.3L804.4 746.6L802.6 745.9L802.0 744.6L802.2 743.0L802.8 741.1L803.4 738.9L803.2 736.5L801.4 735.2L799.7 734.0L798.6 733.0L798.1 732.1L797.4 731.0L795.7 729.8L794.2 728.3L793.1 730.3L791.5 731.8L789.6 732.6L788.2 733.6L787.7 735.3L787.2 737.7ZM762.0 707.3L760.1 707.1L757.9 707.4L755.8 707.6L753.9 707.5L753.4 706.0L753.1 704.5L752.0 703.0L750.6 701.4L749.6 699.8L747.9 700.0L746.2 699.8L744.5 699.2L742.8 698.5L741.3 698.1L740.1 698.1L738.8 698.5L737.4 699.1L735.9 699.5L736.0 701.3L735.7 703.0L735.3 704.5L735.3 706.3L735.5 708.4L735.7 710.5L737.9 707.5L740.1 706.7L742.5 705.7L744.2 706.4L746.2 707.3L747.9 708.5L749.0 710.0L750.0 711.4L751.6 712.1L753.3 713.1L754.3 714.2L755.0 715.6L757.1 716.7L758.6 717.9L759.6 716.8L760.6 716.1L761.6 715.4L762.6 714.3L763.8 712.7L765.0 711.0L763.4 709.0ZM793.5 727.7L792.1 728.3L790.0 728.8L787.3 729.1L784.9 729.4L783.1 729.9L782.4 728.8L782.1 727.1L781.3 725.2L779.8 723.6L778.1 722.3L776.9 721.0L775.7 719.8L774.3 718.7L773.2 717.6L772.5 716.5L771.5 715.4L769.8 714.4L768.0 713.6L766.8 713.0L766.1 712.2L765.0 711.0L763.8 712.7L762.6 714.3L761.6 715.4L760.6 716.1L759.6 716.8L758.6 717.9L759.7 718.7L761.5 719.7L763.8 720.6L765.6 721.8L766.7 723.0L767.5 724.4L768.9 725.7L770.9 726.1L772.5 726.4L773.8 726.4L775.3 726.3L776.6 727.8L778.0 730.0L778.2 732.1L778.1 733.9L780.2 735.3L783.3 736.6L784.9 738.1L786.0 739.6L787.2 737.7L787.7 735.3L788.2 733.6L789.6 732.6L791.5 731.8L793.1 730.3L794.2 728.3ZM712.1 699.5L714.0 700.3L715.3 700.9L716.5 701.3L715.4 700.6L714.0 699.8ZM762.3 342.7L760.9 344.4L762.7 347.0L764.8 347.7L766.9 347.9L768.5 347.6L769.4 346.8L769.1 345.5L768.3 343.9L766.3 343.5L764.3 343.1ZM758.6 341.7L759.7 342.9L760.9 344.4L762.3 342.7L764.3 343.1L766.3 343.5L768.3 343.9L769.2 342.9L770.8 342.1L772.3 340.7L773.3 338.6L774.0 336.5L772.1 336.2L770.8 336.0L769.7 335.9L768.1 335.8L766.1 335.5L764.2 335.0L762.8 335.3L761.9 335.9L761.0 336.8L760.2 338.4L759.4 340.2ZM768.3 343.9L769.1 345.5L769.4 346.8L770.3 345.5L772.1 344.7L774.1 343.9L775.8 342.4L775.5 344.6L775.8 346.8L777.9 347.3L779.9 347.6L781.7 347.5L783.4 347.2L785.4 347.0L787.5 346.8L788.9 346.8L789.8 346.7L790.9 346.6L792.5 346.6L792.8 344.3L793.6 342.5L792.1 342.2L789.7 342.1L787.3 342.1L785.7 341.9L784.5 341.5L782.8 340.7L780.7 340.5L778.8 340.1L777.3 340.4L777.4 338.8L777.1 337.3L774.0 336.5L773.3 338.6L772.3 340.7L770.8 342.1L769.2 342.9ZM747.9 321.9L747.6 324.2L747.2 327.0L747.7 329.8L749.3 330.9L750.6 331.6L751.3 332.4L753.0 331.2L754.9 330.4L757.0 330.3L759.4 330.7L758.3 328.1L758.7 325.9L758.5 325.1L757.0 324.2L754.8 323.1L753.3 321.8L752.1 322.5L750.6 322.2ZM805.5 319.8L805.0 322.1L804.8 324.3L805.3 326.1L806.3 327.7L807.2 329.0L807.8 330.8L808.9 332.5L810.5 334.0L812.2 333.2L814.1 331.7L814.8 330.1L815.4 328.9L816.0 327.7L816.6 326.2L815.7 324.2L814.9 322.5L813.6 320.9L811.9 319.4L809.9 319.4L808.7 319.3L807.4 319.3ZM782.1 322.4L781.5 324.5L781.5 326.8L782.2 329.0L783.2 330.5L783.8 331.6L783.6 333.0L783.0 334.9L782.6 337.1L784.6 336.6L787.0 336.3L789.2 336.1L790.3 334.6L790.6 332.8L791.4 330.9L792.8 329.8L794.2 328.7L795.4 327.2L796.5 325.4L797.6 323.7L795.7 322.3L794.3 321.0L792.9 319.8L791.1 318.6L789.4 317.4L788.6 319.1L787.3 320.9L785.4 321.8L783.6 322.0ZM803.2 334.7L802.7 336.8L802.8 338.9L803.5 340.6L804.9 341.9L805.6 342.9L806.7 343.8L808.2 342.8L810.8 341.2L811.4 339.1L811.7 337.6L811.9 336.7L811.0 335.5L809.6 334.2L808.0 332.7L806.8 332.6L805.0 333.3ZM807.8 344.4L810.4 347.0L811.7 347.7L813.1 348.0L814.8 347.8L817.1 347.2L819.6 346.6L821.6 346.2L823.0 346.3L824.3 346.6L825.8 347.0L827.2 347.2L828.6 347.3L830.1 347.3L831.6 347.2L832.9 347.2L834.3 347.1L836.4 346.9L838.9 346.6L837.8 344.1L836.1 344.5L835.2 344.7L834.1 344.4L832.4 343.7L830.3 342.8L828.4 341.8L826.8 341.2L825.6 340.9L824.2 341.0L822.3 341.3L820.2 341.6L818.5 342.1L817.4 342.0L816.5 341.5L815.1 341.0L813.2 341.0L811.1 342.5L809.1 343.7Z"/>
<path fill="#5fa45c" fill-rule="evenodd" stroke="#dce8dc" stroke-width="0.44" d="M558.2 258.6L558.4 260.5L559.5 262.2L560.8 264.2L561.4 266.4L562.9 265.9L564.3 265.7L565.7 265.6L566.0 264.1L566.5 262.5L566.6 260.8L566.3 259.2L563.7 258.7L561.5 258.5L559.8 258.4ZM547.9 268.5L548.6 270.5L549.9 272.7L550.9 275.1L551.0 277.1L552.5 277.2L554.1 276.8L555.5 276.1L557.0 275.4L556.1 274.0L555.9 272.9L556.4 271.3L556.9 269.4L554.0 269.0L551.6 268.4L549.7 268.0ZM558.6 270.2L557.8 272.1L557.7 273.3L558.2 274.4L559.0 276.0L560.5 276.3L562.1 277.0L564.2 277.6L563.6 275.2L563.4 272.5L563.3 270.3L563.2 268.5L561.6 269.0L560.1 269.7ZM580.8 312.4L579.0 313.3L577.3 314.4L575.6 315.0L574.6 316.0L574.1 317.9L573.3 320.1L571.8 321.5L570.2 322.2L568.8 323.1L567.6 324.7L566.7 326.7L565.9 328.4L565.1 329.7L564.3 331.0L564.9 333.2L565.3 335.2L565.1 336.7L566.0 337.5L566.9 338.2L568.7 338.8L570.8 338.4L573.1 337.9L575.4 337.4L576.9 336.7L577.9 335.9L579.3 335.3L580.8 335.0L582.6 335.0L584.6 334.9L586.5 334.2L588.5 334.3L589.6 334.3L591.0 334.4L593.1 334.6L595.4 335.2L597.0 336.0L596.3 334.8L595.2 333.5L594.2 331.7L594.0 329.6L594.1 327.6L593.5 326.2L592.5 324.9L591.7 323.4L591.6 321.8L591.5 320.1L590.6 318.3L589.4 316.6L588.5 315.1L586.9 314.8L585.0 314.4L583.2 313.9L581.9 313.2ZM466.1 364.3L468.7 365.3L470.5 366.3L472.0 365.0L473.4 363.1L474.6 360.9L472.9 359.0L471.4 357.4L470.3 356.0L469.2 354.6L468.3 353.1L466.8 353.5L465.2 354.3L463.6 355.3L463.4 357.4L463.6 359.3L463.9 360.9L464.7 362.3ZM349.6 357.5L350.6 358.5L351.9 359.5L353.6 360.6L355.2 362.0L356.2 363.7L357.6 363.9L359.2 364.1L360.8 364.2L361.1 363.8L361.2 362.7L361.9 361.1L363.1 359.0L364.6 356.8L363.2 356.9L361.1 357.0L358.8 357.0L356.8 356.8L355.3 356.2L354.0 356.0L352.6 355.7L351.0 356.2ZM346.2 359.8L346.4 361.4L346.6 362.8L347.1 364.2L349.0 365.8L350.3 368.0L350.3 370.1L351.6 369.7L353.2 369.5L355.0 369.3L356.2 368.2L357.9 366.7L359.6 365.2L360.8 364.2L359.2 364.1L357.6 363.9L356.2 363.7L355.2 362.0L353.6 360.6L351.9 359.5L350.6 358.5L349.6 357.5L348.0 358.9ZM363.5 371.4L364.0 374.2L364.2 376.7L365.6 376.3L367.3 375.7L369.6 375.4L372.2 375.5L374.3 376.1L373.1 374.8L371.6 373.6L370.9 372.1L369.3 371.7L367.9 371.0L366.0 370.8ZM392.0 370.1L392.2 372.0L392.8 374.1L394.8 373.9L396.7 373.8L398.2 373.8L399.2 374.8L400.4 375.8L401.7 374.9L402.1 372.9L403.1 371.2L402.0 369.6L399.9 367.8L398.3 365.9L396.2 366.7L394.7 368.0L393.4 369.2ZM379.4 373.0L379.6 375.4L380.3 377.7L381.0 379.7L382.3 380.6L383.1 381.5L384.0 383.0L386.2 383.6L386.1 381.0L385.9 378.7L386.0 377.0L386.4 376.7L387.2 375.6L388.8 375.4L390.6 374.7L388.6 372.4L387.1 372.9L385.2 372.9L383.1 372.6L381.0 372.4ZM386.2 383.6L388.1 384.0L389.3 384.2L390.0 384.1L391.3 384.0L392.2 383.1L393.3 381.9L394.7 380.2L394.9 381.4L395.9 382.3L399.0 381.0L401.7 380.1L403.4 380.1L402.9 378.5L402.2 376.8L401.7 374.9L400.4 375.8L399.2 374.8L398.2 373.8L396.7 373.8L394.8 373.9L392.8 374.1L394.0 377.4L392.3 376.0L390.6 374.7L388.8 375.4L387.2 375.6L386.4 376.7L386.0 377.0L385.9 378.7L386.1 381.0ZM342.7 376.2L342.9 378.4L343.1 380.4L344.6 381.2L346.9 381.4L346.6 379.5L346.5 377.3L344.4 376.8ZM444.2 377.1L445.8 379.0L443.8 380.3L442.1 381.4L440.5 382.0L438.3 382.1L435.8 382.6L437.3 384.1L439.2 385.1L440.5 385.8L441.2 386.6L442.2 387.5L444.3 388.8L446.4 390.2L447.8 389.3L449.2 388.8L450.5 387.5L451.7 385.9L450.2 383.9L448.8 381.8L448.3 380.3L448.0 379.4L446.5 378.4ZM459.5 378.9L457.7 376.7L456.0 374.9L455.2 372.8L454.1 372.3L452.3 371.6L450.1 370.8L448.2 370.0L447.2 369.3L446.7 368.8L445.4 368.6L443.6 368.6L444.2 370.3L444.1 372.0L443.6 373.8L443.5 375.5L444.2 377.1L446.5 378.4L448.0 379.4L448.3 380.3L448.8 381.8L450.2 383.9L451.7 385.9L453.9 385.4L455.0 384.4L456.7 382.7L458.5 380.8L459.5 379.4ZM446.4 390.2L448.0 391.2L449.4 392.3L450.7 393.3L451.6 394.4L452.3 395.5L453.2 396.9L454.7 398.5L456.0 397.5L457.7 396.4L458.9 394.7L459.3 392.8L459.7 391.1L460.6 389.6L461.9 388.2L463.3 386.6L464.1 383.9L464.1 381.9L462.0 381.1L460.3 380.2L459.5 378.9L459.5 379.4L458.5 380.8L456.7 382.7L455.0 384.4L453.9 385.4L451.7 385.9L450.5 387.5L449.2 388.8L447.8 389.3ZM403.4 381.8L403.0 384.0L402.6 386.2L402.4 388.3L402.4 390.1L402.5 391.4L402.5 392.3L402.7 393.5L403.0 395.2L404.5 394.7L406.4 394.8L406.0 393.6L405.9 391.7L406.2 389.4L406.8 387.4L407.5 386.0L408.1 384.8L408.4 383.4L406.5 383.2L404.8 382.6ZM476.4 434.1L475.1 432.5L473.9 431.0L473.3 429.6L472.7 428.1L471.7 426.6L470.7 425.2L468.9 424.6L468.4 426.3L468.8 428.1L469.0 429.5L469.2 431.1L469.2 432.6L468.9 434.0L468.6 435.5L468.2 437.5L467.9 439.7L467.6 441.8L469.1 440.7L470.7 439.7L472.4 439.2L474.3 438.6L475.8 436.6ZM460.1 390.5L459.6 392.0L459.4 393.8L458.7 395.6L457.4 397.1L455.9 398.1L454.8 399.1L456.5 400.5L457.5 401.4L458.4 401.9L459.6 402.5L461.3 403.4L462.7 405.0L464.1 404.4L465.5 403.2L467.0 401.6L468.5 400.4L470.0 399.7L468.8 397.9L467.7 396.5L466.7 395.3L465.6 394.2L464.0 393.0L461.9 391.7ZM471.3 399.1L470.7 399.8L471.7 401.6L473.1 402.8L474.8 403.6L475.8 404.4L476.3 405.5L477.1 406.8L478.4 408.1L479.7 409.5L480.5 410.9L480.9 412.2L481.7 413.5L483.4 412.7L485.1 412.2L486.6 411.6L488.0 410.9L489.3 410.1L489.7 408.0L489.8 406.1L488.1 406.0L486.2 405.8L484.4 405.3L482.6 404.8L480.6 404.3L478.8 403.9L477.5 403.7L477.4 401.8L477.2 400.3L476.7 398.9L474.4 399.2L472.7 399.4ZM460.1 390.5L461.9 391.7L464.0 393.0L465.6 394.2L466.7 395.3L467.7 396.5L468.8 397.9L470.0 399.7L470.7 399.8L471.3 399.1L472.7 399.4L474.4 399.2L476.7 398.9L476.4 397.5L476.4 396.1L476.8 394.6L476.8 393.0L476.2 391.0L475.2 389.0L473.7 389.2L472.3 389.2L470.8 388.9L468.7 388.4L466.3 387.7L464.5 387.1L463.3 386.6L461.5 388.6ZM474.3 438.6L474.4 439.5L474.8 440.5L475.9 441.8L477.0 443.2L477.5 444.8L477.9 446.4L478.9 448.1L480.4 449.7L481.5 451.2L482.9 450.3L484.5 450.1L486.4 450.2L487.0 448.5L487.6 446.7L488.1 444.6L487.1 443.2L486.3 442.0L486.0 440.7L485.7 439.0L484.6 437.0L482.9 435.3L482.7 434.1L480.5 434.0L478.9 434.1L477.9 434.1L476.4 434.1L475.8 436.6ZM481.5 451.2L480.4 449.7L478.9 448.1L477.9 446.4L477.5 444.8L477.0 443.2L475.9 441.8L474.8 440.5L474.4 439.5L474.3 438.6L472.4 439.2L470.7 439.7L469.1 440.7L467.6 441.8L467.0 444.1L466.4 445.3L466.7 446.5L467.5 448.0L468.5 449.9L469.0 451.9L468.7 454.0L468.1 456.4L469.4 455.9L470.9 455.2L472.5 454.6L474.6 454.3L477.0 454.1L479.1 453.5L480.4 452.4ZM470.7 425.2L471.7 426.6L472.7 428.1L473.3 429.6L473.9 431.0L475.1 432.5L476.4 434.1L477.9 434.1L478.9 434.1L480.5 434.0L482.7 434.1L482.9 432.0L483.6 429.9L484.6 428.5L485.8 427.7L486.7 426.5L487.9 425.7L489.0 424.4L488.7 423.5L487.2 422.6L484.6 421.2L482.9 419.4L482.0 417.7L480.7 416.7L479.0 418.2L478.0 419.1L477.3 419.7L476.1 420.7L474.2 422.3L472.3 424.0ZM480.7 416.7L482.0 417.7L482.9 419.4L484.6 421.2L487.2 422.6L488.7 423.5L489.0 424.4L490.3 423.2L492.0 422.7L494.1 422.5L496.5 422.2L496.2 420.1L495.8 418.1L495.7 416.6L495.6 415.3L495.6 413.8L495.6 412.0L495.8 409.8L496.2 407.7L496.6 405.8L495.3 405.6L493.5 405.7L491.5 405.9L489.8 406.1L489.7 408.0L489.3 410.1L488.0 410.9L486.6 411.6L485.1 412.2L483.4 412.7L481.7 413.5ZM468.1 456.4L468.5 458.3L470.0 459.7L471.6 461.0L472.5 462.3L472.6 463.8L472.9 465.2L473.6 466.6L474.3 468.1L474.6 469.7L474.8 471.4L477.6 469.6L479.2 468.6L480.1 467.2L480.8 465.3L481.3 465.5L481.5 465.2L481.6 463.4L482.1 462.3L483.0 461.3L483.9 460.0L484.6 458.1L485.1 455.6L485.6 453.2L486.0 451.5L486.4 450.2L484.6 450.1L483.1 450.3L481.8 451.1L480.7 452.3L479.4 453.4L477.3 454.1L474.9 454.3L472.7 454.6L471.0 455.2L469.4 455.9ZM480.7 416.7L481.7 413.5L480.9 412.2L480.5 410.9L479.7 409.5L478.4 408.1L477.1 406.8L476.3 405.5L475.8 404.4L474.8 403.6L473.1 402.8L471.7 401.6L470.7 399.8L470.0 399.7L468.5 400.4L467.0 401.6L465.5 403.2L464.1 404.4L462.7 405.0L463.8 406.7L465.8 408.2L467.7 409.7L467.6 411.1L467.0 412.8L466.8 414.7L467.6 416.7L468.9 419.1L469.8 421.3L469.6 423.1L468.9 424.6L470.7 425.2L472.3 424.0L474.2 422.3L476.1 420.7L477.3 419.7L478.0 419.1L479.0 418.2ZM367.3 398.2L365.8 399.3L364.1 400.1L362.0 400.5L360.0 401.0L358.6 401.9L359.3 403.5L359.5 405.2L359.7 406.9L361.3 406.8L363.0 406.6L364.7 406.6L366.2 406.0L367.9 406.0L369.7 405.8L368.9 404.0L368.2 401.9L367.6 399.8ZM375.8 428.5L374.7 426.3L373.9 424.4L374.1 422.8L373.7 421.7L371.7 419.8L369.0 417.6L367.2 417.3L365.9 417.2L364.4 417.7L362.5 418.6L360.8 419.4L362.1 420.4L362.8 421.6L363.3 423.1L364.4 424.5L365.7 425.9L366.4 427.4L367.1 428.6L368.0 429.9L370.6 431.2L372.7 430.8L374.4 429.8ZM382.0 434.6L381.5 433.3L380.5 431.8L379.3 430.0L377.9 430.8L377.0 431.7L376.0 432.5L374.7 433.0L374.7 434.9L374.9 436.7L375.2 438.2L375.3 439.3L375.2 440.7L376.4 441.0L378.0 441.5L380.2 442.3L382.1 443.2L382.5 441.7L382.4 439.7L382.0 437.4L381.7 435.3ZM597.2 221.6L597.4 224.1L597.5 226.1L597.3 227.4L599.1 228.0L600.3 228.3L601.4 228.3L602.3 225.9L603.1 223.8L603.2 222.3L600.9 222.1L598.7 221.8ZM579.6 236.2L579.8 238.7L580.1 241.3L580.6 243.6L582.4 243.3L584.1 243.0L586.2 242.7L586.2 241.0L586.4 239.3L586.6 237.0L584.9 237.3L583.1 237.0L581.2 236.5ZM624.4 246.6L626.1 246.3L628.0 246.3L630.3 246.5L632.5 246.7L633.8 246.8L633.5 245.2L633.0 243.6L632.6 242.2L630.7 241.7L629.5 241.3L628.3 240.8L626.5 240.6L624.2 240.5L622.2 240.5L622.9 242.2L623.8 244.2ZM607.4 253.0L609.0 252.8L611.1 252.4L613.8 251.8L616.2 251.3L617.9 251.2L617.5 249.3L616.6 247.9L615.9 246.6L614.4 246.1L613.6 245.4L612.3 245.4L610.2 246.2L608.0 247.2L608.2 249.7L607.8 251.6ZM617.3 243.8L617.0 245.9L617.5 247.5L618.4 248.9L619.1 250.2L619.3 251.8L619.3 253.7L619.3 255.8L619.4 257.6L619.4 259.4L620.8 257.5L622.2 256.1L623.6 255.3L623.7 254.4L623.7 253.1L623.8 251.4L623.8 249.5L623.8 247.4L623.5 245.3L623.0 243.5L622.4 242.0L620.6 242.3L618.9 243.0ZM642.5 253.0L642.9 254.5L643.3 256.5L643.8 258.8L646.0 258.6L648.1 258.5L650.1 258.6L649.3 257.2L648.9 255.2L649.2 252.8L647.7 252.9L646.1 252.8L644.2 252.7ZM666.9 265.6L667.2 267.1L668.0 268.7L669.4 270.6L670.7 272.4L672.0 271.5L673.9 271.0L675.9 270.5L677.6 269.7L679.2 268.6L678.7 266.9L677.8 265.0L675.9 263.1L674.3 264.2L672.7 265.4L670.6 266.0L668.6 266.0ZM624.2 260.8L621.5 261.9L619.3 262.7L617.6 262.9L617.7 264.3L618.0 265.7L618.3 267.5L618.5 269.6L618.2 271.7L618.3 272.9L617.5 273.8L617.1 274.9L616.1 276.0L615.5 277.5L614.9 279.0L613.7 279.9L611.9 280.2L610.3 280.8L609.2 282.6L610.5 284.5L612.4 286.3L613.5 287.9L614.4 287.9L615.9 288.3L618.0 289.0L620.2 289.8L622.2 290.4L624.2 290.7L625.2 289.3L626.2 287.3L627.1 285.2L627.8 283.5L628.6 282.3L629.6 281.3L631.1 279.9L633.0 280.4L634.6 280.8L636.4 281.3L638.5 281.7L637.0 280.2L636.0 278.8L635.3 277.6L634.4 276.4L632.9 274.7L631.7 272.5L631.2 270.4L630.6 268.7L629.1 267.5L627.5 266.2L626.7 264.9L626.5 263.5L625.9 262.1ZM576.4 287.9L578.6 286.9L580.5 286.2L582.0 286.0L583.4 286.4L585.3 286.8L585.0 285.0L585.2 283.2L585.3 281.1L585.2 279.0L583.3 279.1L581.4 279.2L579.6 279.0L578.0 278.6L576.0 278.1L576.7 279.7L576.8 281.5L576.3 283.7L576.0 285.9ZM693.7 281.4L691.4 281.5L688.8 281.6L686.8 281.7L685.4 281.6L684.2 281.3L683.1 280.9L683.0 282.4L683.1 284.0L684.1 285.7L686.5 286.0L688.5 286.4L689.8 286.7L690.7 286.8L692.2 286.8L692.8 284.7L693.7 282.3ZM626.5 293.8L626.3 295.4L626.4 297.0L627.0 298.7L628.0 300.7L628.9 302.9L629.1 304.9L630.5 304.6L632.0 304.5L633.6 304.7L635.2 305.2L634.3 303.7L633.8 302.5L634.1 301.4L634.7 299.7L635.1 297.7L634.9 295.7L632.1 295.9L629.7 295.6L628.1 294.7ZM626.4 309.8L626.2 308.2L626.7 307.0L627.1 305.9L626.7 304.4L625.5 302.5L624.6 300.3L624.2 298.1L622.7 299.3L621.4 300.2L619.7 300.7L617.6 300.8L615.3 301.1L613.4 301.4L612.3 301.8L612.9 303.4L613.7 304.9L614.3 306.3L614.2 308.2L614.8 310.2L615.9 312.3L617.4 313.9L619.5 313.1L621.1 312.6L622.2 312.2L623.2 311.5L624.6 310.6ZM644.1 304.5L641.9 305.5L640.0 306.1L638.4 306.1L636.8 305.7L635.2 305.2L635.9 307.3L636.0 309.7L635.6 311.8L635.0 313.4L636.7 314.1L638.3 314.9L639.1 315.9L640.7 314.7L642.7 314.0L643.6 312.5L643.9 310.9L644.4 309.3L644.7 307.8L644.5 306.3ZM614.4 310.6L612.2 311.0L610.5 311.3L609.0 311.3L607.1 311.4L605.0 311.9L605.6 313.7L606.2 315.9L606.3 318.2L607.4 319.3L608.8 320.4L610.5 321.5L612.9 320.1L614.5 319.3L615.4 319.6L616.9 320.2L616.4 318.7L616.3 317.0L615.6 315.1L614.7 313.1ZM811.0 314.3L808.4 313.7L805.9 313.2L804.1 312.9L803.6 314.2L805.3 315.1L807.2 316.1L808.4 317.0L809.3 317.9L810.6 318.8L812.6 319.6L813.0 319.5L812.3 317.7L812.5 315.9L813.2 314.3L813.7 312.8ZM843.3 341.5L842.7 339.7L842.8 337.9L843.5 336.3L845.1 335.4L843.9 335.1L842.0 335.9L840.4 337.1L839.9 339.2L839.7 341.0L840.4 342.5L841.5 344.1L843.6 344.0L845.1 344.5L846.0 345.1L847.0 345.3L848.9 345.1L847.4 344.3L846.3 343.3L845.1 342.3ZM752.9 348.7L754.5 348.7L756.1 348.7L757.9 348.7L758.9 347.0L759.9 345.5L760.9 344.4L759.7 342.9L758.6 341.7L757.0 342.8L755.1 344.4L753.6 343.9L752.6 342.9L751.9 344.9L751.7 346.6L752.2 347.7ZM843.9 335.1L845.1 335.4L846.7 334.2L847.3 332.2L847.3 329.7L847.9 327.3L845.4 325.9L843.9 324.5L842.6 323.6L842.4 321.6L842.1 319.8L842.1 318.3L842.2 317.1L842.1 318.3L842.1 319.8L842.3 321.6L842.6 323.6L840.6 324.5L838.6 325.3L839.5 326.5L840.4 327.9L841.3 329.8L842.4 331.8L843.5 333.5ZM784.9 321.9L786.9 321.1L788.5 319.3L789.4 317.4L791.0 318.5L792.8 319.7L794.1 320.8L795.4 322.0L797.1 323.3L797.5 321.9L798.0 321.0L798.5 319.5L799.1 317.0L795.8 317.7L793.5 317.4L791.1 316.7L789.2 316.5L788.3 316.5L787.4 316.9L786.0 317.4L784.0 317.7L784.1 319.6L783.6 321.0ZM733.0 336.9L732.5 338.2L731.2 338.7L729.6 339.6L728.5 341.5L728.1 343.5L727.6 344.9L728.1 347.0L728.9 349.2L731.1 349.9L732.6 350.0L733.9 349.5L735.3 348.7L737.2 348.1L739.8 348.1L739.3 346.7L739.2 345.6L736.6 346.7L735.0 347.1L733.1 347.6L731.1 347.8L729.6 347.5L728.1 346.8L729.0 345.8L729.6 344.3L731.0 342.7L733.1 341.9L734.9 341.6L734.7 339.6L733.8 337.4L733.6 337.5L733.4 337.0ZM760.9 344.4L759.9 345.5L758.9 347.0L757.9 348.7L759.9 348.8L761.9 349.0L763.6 349.3L765.2 349.6L766.8 349.7L768.3 349.4L769.5 348.9L770.7 348.4L772.2 348.0L774.0 348.2L775.8 348.7L777.5 349.4L779.3 349.9L780.9 350.0L782.4 349.6L784.2 349.0L783.5 347.2L781.8 347.5L780.0 347.6L777.9 347.3L775.8 346.8L775.6 344.6L775.8 342.4L774.4 343.7L772.8 344.5L771.2 345.0L770.0 345.8L769.3 347.1L768.4 347.7L766.8 348.0L764.8 347.7L762.7 347.0ZM721.2 341.8L720.0 342.5L718.9 343.5L717.7 344.9L716.5 346.3L715.2 347.2L714.0 347.9L713.2 348.8L713.2 349.2L714.2 349.3L715.8 349.4L718.0 349.4L720.6 349.1L722.8 348.7L724.2 348.3L725.3 348.2L726.9 348.6L728.9 349.2L728.1 347.0L727.6 344.9L726.3 344.1L724.2 343.5L722.2 342.8ZM712.5 306.9L712.5 308.0L713.9 309.6L716.0 311.2L717.9 312.2L718.9 312.7L719.4 313.0L719.7 312.8L722.0 313.1L721.5 311.3L721.7 309.7L722.3 308.5L723.1 307.5L724.1 307.4L725.5 307.1L727.6 306.7L730.1 306.4L732.2 306.5L733.4 306.9L734.5 307.5L736.1 308.8L738.5 309.5L740.2 310.0L740.6 310.8L740.2 310.0L738.5 309.5L736.1 308.8L734.5 307.5L733.2 306.3L731.5 305.3L729.1 305.0L727.0 305.1L726.9 304.5L726.6 304.5L725.2 305.5L723.9 306.1L722.2 306.3L720.0 306.2L717.8 306.3L715.9 306.6L714.4 306.9L713.5 307.0ZM824.4 346.6L824.9 348.9L827.0 349.6L828.8 350.0L829.9 349.9L830.9 349.4L832.1 348.8L833.8 348.4L836.1 348.3L838.6 348.6L840.4 348.9L840.2 346.7L839.4 344.6L841.5 344.1L840.4 342.5L839.7 341.0L839.9 339.2L840.4 337.1L838.7 337.5L836.6 337.9L834.2 338.4L833.4 340.3L832.5 341.9L831.3 343.2L833.5 344.2L834.9 344.7L836.0 344.6L837.8 344.1L838.9 346.6L836.4 346.9L834.4 347.1L832.9 347.2L831.6 347.2L830.2 347.3L828.7 347.3L827.3 347.3L825.9 347.0ZM809.4 333.0L810.3 334.4L811.1 335.5L811.3 335.8L812.5 336.4L814.0 336.4L816.2 335.6L818.7 334.6L820.8 334.0L822.4 333.0L824.0 332.2L825.3 330.7L822.9 328.3L820.5 329.1L818.1 329.7L815.7 330.5L816.4 329.2L817.0 327.7L817.5 325.4L818.0 323.1L819.8 322.6L821.9 322.1L824.2 321.4L822.2 321.2L820.5 320.9L819.0 320.5L819.5 318.2L819.7 315.5L819.3 317.7L818.8 319.6L818.1 321.3L815.8 320.4L813.0 319.5L812.6 319.6L812.5 320.0L814.0 321.3L815.0 322.8L815.8 324.4L816.6 326.2L816.0 327.7L815.4 328.9L814.8 330.1L814.1 331.7L812.2 333.2L810.5 334.0ZM739.8 348.1L742.1 348.5L743.8 349.2L745.2 349.6L746.6 349.7L748.2 349.5L749.9 349.1L751.4 348.8L752.9 348.7L752.2 347.7L751.7 346.6L751.9 344.9L752.6 342.9L751.2 341.5L749.0 340.2L750.0 338.5L750.8 336.9L751.0 335.2L750.5 336.6L749.3 337.9L747.8 339.1L746.7 340.3L746.1 341.4L744.6 341.8L743.0 342.8L741.1 344.4L739.2 345.6L739.3 346.7ZM802.4 316.1L799.1 317.0L798.5 319.5L798.0 321.0L797.5 321.9L797.1 323.3L797.3 323.5L798.8 324.4L799.8 325.5L800.8 326.4L802.2 326.9L804.0 327.0L805.9 327.0L805.1 325.6L804.8 323.8L805.1 321.9L805.5 319.8L807.4 319.3L808.7 319.3L809.9 319.4L811.9 319.4L812.5 320.0L812.6 319.6L810.6 318.8L809.3 317.9L808.4 317.0L807.2 316.1L805.3 315.1L803.6 314.2ZM709.1 339.5L709.5 340.9L709.7 342.1L710.2 343.2L711.3 344.8L712.5 346.8L713.2 348.8L714.0 347.9L715.2 347.2L716.5 346.3L717.7 344.9L718.9 343.5L720.0 342.5L721.2 341.8L721.7 339.8L721.8 337.2L721.1 334.4L719.2 336.0L717.4 337.0L715.9 337.2L714.8 337.2L713.5 337.6L711.5 338.6ZM712.1 323.5L713.7 324.7L714.6 326.3L715.2 328.1L716.1 329.6L717.3 330.6L718.4 331.3L719.7 332.2L721.3 333.2L723.0 332.2L724.6 331.9L726.3 331.9L724.3 330.2L722.4 329.4L720.5 329.1L718.8 328.9L718.9 327.6L719.2 325.9L719.6 323.9L719.6 321.8L719.2 319.6L720.9 318.3L722.5 317.2L723.9 316.4L725.2 315.5L726.3 314.6L724.9 315.5L723.1 316.3L722.0 313.1L719.7 312.8L719.4 313.0L718.3 314.4L717.1 315.7L716.0 317.6L715.0 319.4L714.2 320.4L713.8 321.0L713.3 321.9ZM721.1 334.4L721.8 337.2L721.7 339.8L721.2 341.8L722.2 342.8L724.2 343.5L726.3 344.1L727.6 344.9L728.1 343.5L728.5 341.5L729.6 339.6L731.2 338.7L732.5 338.2L733.0 336.9L733.4 337.0L733.2 336.6L733.3 336.5L732.8 334.2L732.7 332.1L731.1 333.3L730.1 334.3L728.5 334.5L726.3 331.9L724.6 331.9L723.0 332.2L721.3 333.2ZM811.3 335.8L811.9 336.7L811.7 337.6L811.4 339.1L810.8 341.2L808.7 342.6L807.1 343.5L807.5 344.6L808.1 346.3L808.1 348.5L809.5 348.7L810.3 349.1L811.6 349.6L813.5 349.9L815.9 349.7L818.4 349.0L820.3 348.3L821.5 348.0L822.9 348.2L824.9 348.9L824.4 346.6L823.1 346.3L821.7 346.2L819.8 346.6L817.2 347.2L814.9 347.8L813.1 348.0L811.7 347.7L810.4 347.0L807.8 344.4L809.1 343.7L811.1 342.5L813.2 341.0L815.1 341.0L816.5 341.5L817.4 342.0L818.5 342.1L820.2 341.6L821.3 341.5L820.5 339.7L820.6 337.7L821.0 335.7L820.8 334.0L818.7 334.6L816.2 335.6L814.0 336.4L812.5 336.4ZM790.5 333.7L790.2 334.9L789.2 336.1L786.5 336.3L784.2 338.3L782.3 339.8L780.5 340.2L780.7 340.5L782.8 340.7L784.5 341.5L785.7 341.9L787.3 342.1L789.7 342.1L792.1 342.2L793.6 342.5L792.8 344.3L792.5 346.6L790.9 346.6L789.8 346.7L788.9 346.8L787.5 346.8L785.5 347.0L783.5 347.2L784.2 349.0L786.3 348.3L788.2 348.1L789.4 348.4L790.4 348.9L791.8 349.4L793.9 349.5L796.2 349.4L795.2 347.3L794.6 345.1L794.7 343.2L795.4 341.7L795.8 340.1L795.3 338.5L794.3 336.9L793.4 335.3L793.0 333.6L791.7 333.6ZM826.6 330.4L825.3 330.7L824.0 332.2L822.4 333.0L820.8 334.0L821.0 335.7L820.6 337.7L820.5 339.7L821.3 341.5L823.7 341.1L825.5 340.9L827.0 341.2L828.9 342.0L831.3 343.2L832.5 341.9L833.4 340.3L834.2 338.4L832.9 337.1L831.7 335.9L829.9 334.6L828.3 333.4L827.4 332.1ZM774.0 336.5L777.1 337.3L777.4 338.8L777.3 340.4L778.8 340.1L780.7 340.5L780.5 340.2L782.3 339.8L784.2 338.2L786.5 336.3L782.6 337.1L783.0 334.8L783.6 332.9L783.7 331.5L783.1 330.3L782.0 328.6L781.4 326.3L780.7 323.5L778.6 324.7L777.5 325.8L776.4 327.5L775.1 329.6L773.8 331.6L772.8 332.8L774.7 335.2ZM766.6 316.0L767.8 316.7L768.8 317.5L769.6 318.7L771.3 319.8L772.7 320.9L773.6 321.9L775.1 322.8L777.2 323.7L778.6 324.7L780.7 323.5L781.4 326.3L782.1 322.4L784.9 321.9L783.6 321.0L784.1 319.6L784.0 317.7L781.4 317.5L779.1 316.0L777.8 314.3L776.3 313.5L774.5 312.8L772.6 312.4L770.8 312.5L768.7 314.4L767.7 315.9ZM790.5 333.7L791.7 333.6L793.0 333.6L794.1 333.0L795.7 333.7L798.3 334.3L800.8 334.7L802.2 335.0L803.1 335.2L803.2 334.6L805.0 333.3L806.8 332.6L808.0 332.7L809.7 334.2L811.1 335.5L810.3 334.4L809.4 333.0L808.0 331.2L807.2 329.2L806.3 327.7L805.9 327.0L804.0 327.0L802.2 326.9L800.8 326.4L799.8 325.5L798.8 324.4L797.3 323.5L797.6 323.7L796.6 325.3L795.6 327.2L794.4 328.7L793.0 329.7L791.7 330.8L790.8 332.2ZM695.7 349.8L697.9 349.9L700.3 349.5L702.4 348.9L703.8 348.5L704.9 348.4L706.5 348.6L708.6 348.8L710.8 349.0L712.3 349.1L713.2 349.2L713.2 348.8L712.5 346.8L711.3 344.8L710.2 343.2L709.7 342.1L709.5 340.9L709.1 339.5L707.1 338.7L705.4 337.9L704.5 337.1L703.0 337.7L703.1 336.8L702.1 338.6L701.1 340.1L700.0 341.5L698.9 342.6L697.9 343.9L696.9 345.7L696.2 347.9ZM759.3 330.5L761.4 332.2L762.7 333.6L763.4 334.9L762.8 335.4L764.2 335.0L766.1 335.5L768.1 335.8L769.7 335.9L770.8 336.0L772.1 336.2L774.0 336.5L774.7 335.2L772.8 332.8L773.8 331.6L775.1 329.6L776.4 327.5L777.5 325.8L778.6 324.7L777.2 323.7L775.1 322.8L773.6 321.9L772.7 320.9L771.3 319.8L769.6 318.7L771.2 320.4L772.2 322.1L772.7 323.6L771.3 325.6L769.2 327.4L767.4 328.6L766.1 328.3L764.3 327.9L761.6 327.7L761.1 330.4ZM794.1 332.9L793.0 333.6L793.4 335.3L794.3 336.9L795.3 338.5L795.8 340.1L795.4 341.7L794.7 343.2L794.6 345.1L795.2 347.3L796.2 349.4L798.5 349.2L800.3 349.0L801.7 348.9L803.5 348.8L805.9 348.6L808.1 348.5L808.1 346.3L807.5 344.6L807.1 343.5L806.7 343.8L805.6 342.9L804.9 341.9L803.5 340.6L802.8 339.1L802.7 337.2L803.1 335.2L802.2 335.0L800.8 334.7L798.3 334.3L795.7 333.7ZM702.0 323.0L703.5 323.9L705.0 324.5L705.5 325.7L706.6 326.5L708.3 327.4L707.9 328.6L707.3 330.6L706.2 332.8L703.8 334.7L703.9 335.0L703.1 336.8L703.0 337.7L704.5 337.1L705.4 337.9L707.1 338.7L709.1 339.5L711.5 338.6L713.5 337.6L714.8 337.2L715.9 337.2L717.4 337.0L719.2 336.0L721.1 334.4L721.3 333.2L719.7 332.2L718.4 331.3L717.3 330.6L716.1 329.6L715.2 328.1L714.6 326.3L713.7 324.7L712.1 323.5L711.0 323.9L708.6 323.9L707.0 323.8L705.6 323.4L703.9 322.6ZM731.7 317.2L733.6 317.9L735.1 318.4L737.4 318.6L738.0 321.1L738.5 322.8L738.3 324.5L737.6 326.6L739.0 325.2L740.2 324.3L741.5 323.1L742.1 324.0L743.8 325.1L745.2 326.5L746.2 328.4L747.4 331.0L749.1 332.9L749.6 332.2L750.5 333.6L751.0 335.2L751.3 332.4L750.6 331.6L749.3 330.9L747.7 329.8L747.2 327.0L747.6 324.2L747.9 321.9L750.6 322.2L752.1 322.5L753.3 321.8L754.8 323.1L757.0 324.2L758.5 325.1L758.7 325.9L758.3 328.0L759.3 330.5L761.1 330.4L761.6 327.7L760.9 327.7L759.4 325.8L759.4 324.5L759.1 323.4L758.7 321.2L757.8 319.1L757.2 317.5L756.4 318.8L755.9 320.8L754.1 320.2L753.0 319.6L751.8 318.9L750.2 317.3L748.8 315.9L748.0 314.5L746.8 314.2L744.8 313.5L742.4 312.4L740.8 311.2L739.9 312.7L739.3 314.0L738.9 315.8L738.6 318.3L736.2 318.3L734.7 318.1L733.4 317.8ZM822.9 328.3L825.3 330.7L826.6 330.4L827.4 332.1L828.3 333.4L829.9 334.6L831.7 335.9L832.9 337.1L834.2 338.4L836.6 337.9L838.7 337.5L840.4 337.1L842.0 335.9L843.9 335.1L843.5 333.5L842.4 331.8L841.3 329.8L840.4 327.9L839.5 326.5L838.6 325.3L836.7 325.8L835.7 325.1L834.5 324.2L832.8 323.1L830.9 322.0L829.2 321.1L827.8 321.0L826.1 321.1L824.2 321.4L825.2 322.2L826.1 323.1L827.6 324.0L829.5 325.2L827.2 326.3L825.5 326.9L824.6 327.9ZM699.2 321.3L699.8 323.0L700.3 325.1L700.3 322.2L702.0 323.0L703.9 322.6L705.6 323.4L707.0 323.8L708.6 323.9L711.1 323.9L712.1 323.5L713.3 321.9L713.8 321.0L714.2 320.4L715.0 319.4L716.0 317.6L717.1 315.7L718.3 314.4L719.4 313.0L718.9 312.7L717.9 312.2L716.0 311.2L713.9 309.6L712.5 308.0L712.5 306.9L709.1 307.5L708.7 306.8L706.8 307.9L705.7 309.6L704.9 311.0L704.3 312.0L704.1 313.3L703.8 315.3L702.6 316.1L701.8 318.4L700.9 319.9L700.0 320.6ZM862.6 349.9L861.6 348.5L859.7 346.6L857.3 345.5L855.5 344.8L857.3 345.5L859.7 346.6L860.2 349.1ZM852.4 343.0L851.0 343.7L852.4 343.0L853.6 344.2ZM758.8 316.1L758.1 314.1L757.8 312.0L757.7 314.6L758.0 316.7L757.6 317.0L759.7 316.9L762.0 316.2ZM757.7 311.9L755.9 312.3L753.9 312.6L751.7 312.9L753.9 312.7L755.9 312.4L757.7 311.9ZM839.0 305.6L838.9 307.2L838.4 308.8L838.1 310.0L838.3 311.6L839.8 313.5L841.6 315.3L839.8 313.6L838.4 311.6L838.1 310.0L838.4 308.9L839.0 307.2ZM816.1 309.3L816.8 310.9L816.7 311.9L817.0 312.9L818.2 314.1L819.7 315.5L821.2 314.2L822.4 313.2L823.5 312.7L824.4 312.4L825.6 311.9L827.5 310.8L829.4 309.7L826.8 310.2L824.4 310.5L822.8 311.1L821.1 311.9L819.2 313.5L817.5 311.9L817.3 310.8L817.0 309.2L817.0 307.0L816.5 305.3L816.0 303.8L816.0 305.2L816.2 306.8ZM638.8 331.6L640.5 333.2L641.7 335.0L643.4 334.6L644.9 334.9L646.5 335.2L648.5 334.9L650.7 334.1L652.5 333.4L652.8 331.9L653.5 330.3L655.1 328.3L654.4 327.0L654.0 325.3L654.0 323.6L653.7 322.1L652.8 320.8L650.0 320.7L648.4 322.1L647.1 323.7L646.1 324.9L645.2 325.8L644.3 327.2L642.9 328.6L641.5 330.0L640.1 330.9ZM681.9 339.7L682.8 338.9L684.0 337.8L685.2 335.6L686.4 333.1L687.3 331.2L685.3 331.4L682.7 331.7L680.1 331.8L678.5 331.5L677.3 330.9L675.8 330.2L673.6 329.6L671.5 329.4L670.1 329.7L669.1 330.2L668.4 332.1L667.4 333.7L666.1 334.9L664.8 335.9L663.7 337.0L662.6 338.5L661.6 339.9L663.2 340.8L665.4 341.8L667.0 343.1L668.6 344.4L670.0 343.7L671.9 343.1L674.3 342.7L676.6 342.3L678.3 341.6L679.6 340.5L680.7 339.7ZM609.5 336.3L608.2 336.0L607.0 335.9L605.6 336.1L603.5 336.3L601.1 336.4L599.3 336.2L597.9 335.6L597.6 336.3L596.8 337.5L597.6 338.9L599.0 340.4L600.2 341.9L600.4 343.9L600.9 346.0L602.9 347.6L605.4 346.9L607.6 346.6L609.3 346.3L610.7 345.9L611.8 345.2L612.8 344.6L612.1 342.8L611.8 341.3L611.0 339.7L609.9 338.0ZM716.5 701.3L718.3 701.7L720.1 702.0L721.4 702.3L722.9 702.7L724.6 702.8L726.4 703.0L728.3 703.3L730.2 703.5L732.1 703.8L732.3 705.4L733.0 707.2L734.2 709.1L735.3 710.8L735.7 710.5L735.5 708.4L735.3 706.3L735.3 704.5L735.7 703.0L736.0 701.3L735.9 699.5L734.1 699.6L732.2 699.4L730.0 699.2L727.9 699.0L726.2 698.9L724.7 698.8L723.2 698.7L721.7 698.6L720.1 698.6L718.4 698.9L716.8 699.3L715.4 699.7L714.0 699.8L715.4 700.6ZM735.7 336.0L737.6 335.6L739.7 335.6L741.6 335.9L743.4 336.4L741.8 335.4L740.1 334.4L737.8 334.7Z"/>
<path fill="#fdbc57" stroke="#e6e6d8" stroke-width="0.6" d="M627.0 234.4L629.2 234.6L632.0 235.0L634.4 235.5L634.9 233.2L635.1 231.8L633.1 230.0L631.8 228.5L630.9 228.1L629.9 228.5L628.3 229.6L626.4 230.9L627.3 233.0Z"/>
<path fill="#fdbc57" stroke="#e6e6d8" stroke-width="0.6" d="M573.1 249.5L575.0 250.5L576.4 251.4L577.9 249.9L579.4 248.6L578.7 247.2L577.7 245.7L576.4 244.3L574.4 244.9L573.1 246.2Z"/>
<path fill="#fdbc57" stroke="#e6e6d8" stroke-width="0.6" d="M592.3 259.4L592.8 260.8L593.0 262.7L592.8 265.1L592.2 267.5L591.8 269.5L592.2 271.0L593.1 272.1L594.8 271.8L596.9 271.4L598.7 269.6L600.3 268.2L600.8 269.7L601.2 271.3L603.9 271.4L603.8 269.6L604.3 267.7L605.2 265.7L605.9 263.6L606.0 261.6L605.5 260.0L604.5 258.6L604.0 257.2L604.1 255.6L602.8 256.1L601.2 255.7L598.9 255.0L597.2 252.7L594.2 253.2L593.1 254.9L592.5 256.7L592.4 258.2Z"/>
<path fill="#fdbc57" stroke="#e6e6d8" stroke-width="0.6" d="M550.7 265.7L552.7 265.7L555.0 264.7L555.2 262.5L555.1 260.4L554.5 258.9L553.1 259.5L551.2 260.3L551.6 262.7L551.4 264.5Z"/>
<path fill="#fdbc57" stroke="#e6e6d8" stroke-width="0.6" d="M542.3 287.7L544.7 287.1L547.6 286.8L550.0 287.0L548.9 284.8L547.6 282.5L545.6 282.6L544.6 282.7L543.3 283.0L542.6 285.4Z"/>
<path fill="#fdbc57" stroke="#e6e6d8" stroke-width="0.6" d="M547.5 298.6L550.1 298.8L549.8 296.5L549.5 294.0L549.6 291.4L547.9 291.7L546.6 292.3L546.2 294.9L546.5 297.0Z"/>
<path fill="#fdbc57" stroke="#e6e6d8" stroke-width="0.6" d="M645.4 278.7L644.5 280.1L644.1 282.0L644.4 284.4L645.0 286.6L646.3 287.8L646.8 289.0L647.3 290.7L648.2 292.8L650.6 292.2L652.5 291.0L653.5 289.4L653.6 287.9L654.3 286.8L655.3 285.6L656.3 283.7L655.8 281.0L655.6 278.5L655.1 276.5L653.9 275.1L652.1 274.7L651.0 273.8L649.8 272.4L649.1 274.5L648.0 276.5L646.7 277.8Z"/>
<path fill="#fdbc57" stroke="#e6e6d8" stroke-width="0.6" d="M642.1 315.4L641.5 317.4L641.0 319.6L640.6 321.5L640.1 323.3L639.6 325.4L638.7 327.5L637.4 328.8L635.8 330.0L636.8 330.7L638.8 331.6L640.1 330.9L641.5 330.0L642.9 328.6L644.3 327.2L645.2 325.8L646.1 324.9L647.1 323.7L648.4 322.1L650.0 320.7L652.3 320.7L653.9 320.9L655.1 320.3L653.8 318.2L652.6 316.1L652.2 314.2L652.1 312.6L651.5 311.1L649.4 309.8L648.1 308.0L647.4 306.4L646.2 308.3L645.2 310.2L644.3 311.6L643.5 312.7L642.7 313.9Z"/>
<path fill="#fdbc57" stroke="#e6e6d8" stroke-width="0.6" d="M712.9 293.0L712.4 294.6L711.1 295.8L709.7 296.9L708.9 298.5L708.5 300.4L708.2 302.4L707.4 304.1L708.1 305.9L709.1 307.5L711.4 307.0L712.9 307.0L713.9 307.0L715.1 306.7L716.9 306.3L719.3 306.1L721.7 306.2L723.7 306.1L725.3 305.5L726.8 304.4L726.4 302.8L725.0 301.0L723.0 299.2L721.7 297.5L721.0 296.3L720.2 295.2L718.5 294.4L716.8 293.5L714.9 293.5Z"/>
<path fill="#fdbc57" stroke="#e6e6d8" stroke-width="0.6" d="M571.8 345.6L573.4 345.8L575.1 345.4L576.8 344.9L577.6 343.4L578.6 342.1L579.2 340.7L579.4 339.0L579.3 337.0L579.3 335.3L577.9 335.9L576.9 336.7L575.4 337.4L573.1 337.9L570.8 338.4L568.7 338.8L569.7 340.4L570.4 342.0L571.0 343.9Z"/>
<path fill="#fedb72" stroke="#e6e6d8" stroke-width="0.6" d="M639.5 285.2L640.7 284.6L642.0 283.7L643.7 282.6L643.7 280.4L644.6 278.4L644.8 276.5L642.4 276.7L639.8 277.7L637.5 278.9L639.0 281.0L639.9 283.2Z"/>
<path fill="#fedb72" stroke="#e6e6d8" stroke-width="0.6" d="M659.6 307.7L661.1 306.5L662.6 305.8L664.0 305.3L664.1 303.6L664.2 301.7L664.0 300.1L663.7 298.7L663.4 297.4L661.0 296.6L660.4 298.2L660.0 299.8L659.9 301.6L659.9 303.3L659.9 304.7L659.8 306.2Z"/>
<path fill="#fedb72" stroke="#e6e6d8" stroke-width="0.6" d="M577.4 341.9L578.0 343.5L578.0 345.4L579.6 345.6L581.7 346.4L584.2 347.3L586.6 347.9L588.2 348.0L589.6 347.5L591.1 346.2L592.3 345.2L593.3 344.7L594.8 344.2L597.0 343.3L596.7 341.5L596.7 339.5L596.8 337.5L595.7 336.8L593.8 336.3L591.7 335.8L590.0 335.3L589.1 335.0L588.2 334.6L586.5 334.2L584.6 334.9L582.6 335.0L580.8 335.0L579.3 335.3L579.1 337.0L578.8 338.9L578.3 340.6Z"/>
<path fill="#cc1719" stroke="#e6e6d8" stroke-width="0.6" d="M609.7 273.0L608.3 274.4L606.7 275.7L605.0 277.9L603.3 280.4L603.6 282.6L605.6 283.3L607.7 283.7L608.9 281.5L610.4 280.1L612.4 279.8L614.4 279.3L615.3 277.8L616.1 276.0L617.0 274.4L618.3 272.9L617.1 269.3L613.9 269.3L611.5 269.6L610.4 269.4L609.0 269.4L609.5 271.3Z"/>
<path fill="#fdbc57" stroke="#e6e6d8" stroke-width="0.6" d="M718.8 328.9L720.5 329.1L722.4 329.4L724.3 330.2L726.0 331.6L727.5 333.1L728.5 334.5L730.1 334.3L731.1 333.3L732.7 332.1L733.8 330.9L735.1 329.9L736.4 328.4L737.6 326.6L738.3 324.5L738.5 322.8L738.0 321.1L737.4 318.6L735.1 318.4L733.6 317.9L731.7 317.2L729.5 316.4L727.7 315.4L726.3 314.6L725.2 315.5L723.9 316.4L722.5 317.2L720.9 318.3L719.2 319.6L719.6 321.8L719.6 323.9L719.2 325.9L718.9 327.6Z"/>
<path fill="#fdbc57" stroke="#e6e6d8" stroke-width="0.6" d="M751.7 312.9L749.5 313.6L748.0 314.5L748.8 315.9L750.2 317.3L751.8 318.9L753.0 319.6L754.1 320.2L755.9 320.8L756.5 318.8L757.2 317.5L758.0 316.7L757.7 314.6L757.8 312.0L757.7 311.9L755.9 312.4L753.9 312.7Z"/>
<path fill="#fdbc57" stroke="#e6e6d8" stroke-width="0.6" d="M749.0 340.2L751.1 341.5L752.5 342.8L753.5 343.8L755.1 344.4L757.0 342.8L758.6 341.7L759.5 340.0L760.3 338.0L761.3 336.5L762.3 335.7L763.4 334.9L762.7 333.7L761.5 332.3L759.4 330.7L757.0 330.3L754.9 330.4L753.0 331.2L751.3 332.4L751.1 334.1L751.0 335.7L750.7 337.2L749.9 338.7Z"/>
<path fill="#fedb72" stroke="#e6e6d8" stroke-width="0.6" d="M757.1 317.0L757.7 318.7L758.6 321.0L759.1 323.4L759.4 324.5L759.4 325.8L760.9 327.7L763.3 327.8L765.1 328.1L766.3 328.4L767.4 328.6L769.2 327.4L771.3 325.6L772.7 323.6L772.3 322.2L771.4 320.7L770.0 319.1L768.8 317.5L767.8 316.7L766.6 316.0L764.6 316.1L762.0 316.2L759.5 317.0Z"/>
<path fill="#fedb72" stroke="#e6e6d8" stroke-width="0.6" d="M815.7 330.5L818.1 329.7L820.3 329.2L822.5 328.4L824.6 327.9L825.5 326.9L827.2 326.3L829.5 325.2L827.6 324.0L826.2 323.1L825.2 322.2L824.2 321.4L821.9 322.1L819.8 322.6L818.0 323.1L817.5 325.4L817.0 327.7L816.4 329.2Z"/>
<path fill="#fedb72" stroke="#e6e6d8" stroke-width="0.6" d="M839.4 344.6L840.2 346.7L840.4 348.9L841.7 349.1L842.9 349.3L844.5 349.3L846.4 349.3L848.2 349.3L849.6 349.2L850.9 349.0L852.2 348.7L853.8 348.4L855.9 348.3L858.2 348.6L860.2 349.1L859.7 346.6L857.3 345.5L855.5 344.8L853.9 344.5L853.6 344.2L852.4 343.0L851.0 343.7L848.9 345.1L848.9 345.1L847.1 345.3L846.0 345.1L845.2 344.5L843.7 344.1L841.7 344.1Z"/>
<path fill="#fdbc57" stroke="#e6e6d8" stroke-width="0.6" d="M469.9 354.2L470.8 355.6L471.6 356.9L472.8 358.3L474.3 359.9L475.4 359.1L476.8 358.0L478.4 356.1L480.2 354.1L481.6 352.8L479.3 351.9L477.4 351.1L476.5 350.2L475.3 349.5L473.1 348.9L471.5 348.0L470.0 348.9L468.4 349.3L468.4 349.4L468.8 351.2L469.1 352.7Z"/>
<path fill="#fdbc57" stroke="#e6e6d8" stroke-width="0.6" d="M457.7 376.7L459.3 378.2L460.2 379.7L461.6 380.7L463.7 381.2L465.4 382.0L466.0 383.4L466.4 385.1L467.8 386.6L470.1 387.4L472.0 387.9L473.2 388.2L474.5 388.4L474.2 386.4L474.2 384.7L474.5 383.4L475.0 382.4L475.4 381.2L475.6 379.7L475.7 377.9L475.6 376.0L474.4 376.3L473.0 376.1L471.2 375.6L468.8 374.8L466.3 373.8L464.8 372.8L464.2 371.8L463.2 370.9L461.4 370.1L459.7 369.3L456.9 371.3L455.3 372.9L456.0 374.9Z"/>
<path fill="#fdbc57" stroke="#e6e6d8" stroke-width="0.6" d="M486.7 426.6L485.8 427.7L484.8 428.4L483.9 429.5L483.1 431.2L482.7 433.2L482.7 434.8L484.5 436.5L485.7 438.5L486.2 440.2L486.4 441.5L487.1 442.7L488.2 444.0L490.0 444.1L491.5 444.0L492.9 443.9L494.4 443.8L496.2 443.7L498.3 443.9L500.0 444.4L500.7 443.2L500.9 441.9L500.5 440.1L499.9 437.9L499.5 435.5L499.4 433.4L499.7 431.7L500.0 430.2L500.1 428.9L500.2 427.8L500.3 426.5L500.4 424.6L500.3 422.6L499.2 423.0L497.8 423.2L495.6 423.3L493.3 423.2L491.3 423.4L489.7 424.1L488.6 425.1L487.7 426.2Z"/>
<path fill="#fdbc57" stroke="#e6e6d8" stroke-width="0.6" d="M369.4 394.9L370.6 396.4L372.2 395.1L372.2 393.3L372.1 391.6L369.5 391.4L369.8 393.1Z"/>
<path fill="#e8675a" stroke="#e6e6d8" stroke-width="0.6" d="M353.2 384.0L354.4 386.3L355.1 388.4L356.5 388.6L358.1 388.8L359.8 388.9L361.0 387.6L362.9 387.1L364.0 385.6L364.9 383.6L365.3 381.8L364.2 380.4L363.6 379.1L362.5 379.3L360.9 379.5L358.3 379.5L355.8 379.3L354.6 380.6L353.8 382.1Z"/>
<path fill="#fedb72" stroke="#e6e6d8" stroke-width="0.6" d="M350.6 399.6L350.6 397.8L348.6 398.2L346.5 398.7L346.9 400.1L347.3 400.7L347.4 400.8L349.0 399.9Z"/>
<path fill="#fedb72" stroke="#e6e6d8" stroke-width="0.6" d="M480.8 465.3L480.0 467.3L478.9 468.8L477.0 469.9L475.1 471.5L476.4 472.5L478.1 473.2L479.2 474.3L479.9 476.1L481.1 477.9L483.0 479.6L485.0 480.9L486.2 482.2L486.9 483.4L487.8 484.6L489.1 485.9L490.2 487.2L491.4 488.6L493.0 489.8L494.7 490.7L495.8 491.4L496.8 492.1L498.3 493.6L500.4 495.2L499.6 493.1L499.0 491.1L499.0 489.4L499.6 488.1L500.4 486.6L500.9 484.8L500.9 483.0L500.3 481.6L499.6 480.3L499.3 479.1L499.4 477.7L498.3 476.3L496.7 474.8L495.0 473.7L493.8 473.1L492.9 472.8L491.3 472.2L489.2 471.2L487.5 469.9L487.0 468.7L486.5 467.6L484.8 466.8L482.5 466.0Z"/>
<path fill="#217a37" stroke="#dce8dc" stroke-width="0.6" d="M552.8 315.1L552.8 316.5L552.3 317.9L551.2 319.4L549.8 321.0L548.5 322.5L547.6 323.8L549.4 324.8L551.4 326.2L552.8 327.7L553.9 328.8L555.3 329.5L557.3 329.9L558.8 330.6L559.6 331.7L560.7 333.0L563.0 334.2L563.6 332.6L564.4 331.0L565.1 329.7L565.9 328.4L566.7 326.7L567.7 324.7L568.8 323.1L570.2 322.2L571.8 321.5L573.3 320.2L574.1 318.0L574.6 316.1L575.5 315.0L577.1 314.4L578.8 313.4L580.3 311.9L581.6 311.8L582.8 312.1L584.2 312.3L585.8 312.3L587.7 311.8L588.1 309.9L588.7 307.8L589.6 306.2L590.4 304.9L590.1 303.3L589.4 301.6L587.9 299.6L586.4 297.7L585.9 296.0L586.2 294.5L586.2 292.9L585.1 290.8L583.5 288.7L581.7 289.2L580.2 290.2L579.0 291.1L578.0 291.7L577.2 292.0L576.1 292.6L574.2 293.7L572.1 295.0L570.2 296.1L568.6 296.8L566.9 297.3L565.3 297.9L563.9 298.9L562.6 299.6L561.2 300.2L559.7 301.3L558.1 303.0L556.8 304.8L556.0 305.9L555.3 306.3L554.6 307.8L553.6 309.6L552.9 311.7L552.6 313.5Z"/>
<path fill="#217a37" d="M410.8 398.3L413.1 397.1L415.6 396.0L416.6 397.2L417.4 398.4L417.1 400.6L417.2 402.9L417.5 405.0L417.6 406.7L418.2 408.3L418.4 409.8L418.8 411.4L419.5 413.1L420.1 415.0L420.7 416.9L421.3 418.8L422.1 420.6L423.3 422.1L425.9 422.3L428.2 422.6L427.7 424.6L427.3 426.5L426.8 428.5L426.3 430.2L425.8 432.0L425.5 433.9L425.3 435.9L425.4 437.6L425.6 439.0L425.8 440.5L426.1 442.0L426.1 443.7L426.0 445.7L426.4 448.0L427.3 450.0L428.1 451.9L428.3 453.6L428.3 454.9L428.5 456.3L429.2 458.0L429.9 459.9L430.5 461.8L431.3 463.2L432.0 464.7L432.8 466.2L433.4 467.7L432.0 469.0L430.7 470.1L429.1 469.4L427.4 468.6L426.6 467.0L425.7 465.5L424.8 464.0L423.8 462.4L423.0 461.0L422.7 459.3L422.6 457.6L422.0 455.5L421.1 453.2L419.4 450.4L418.9 448.8L418.1 447.3L417.3 445.8L416.6 444.4L416.1 443.1L415.8 441.5L415.4 439.8L414.9 438.0L414.6 436.4L414.6 434.8L414.5 433.2L413.6 431.4L412.5 429.6L411.5 427.8L414.0 426.6L415.8 427.9L417.5 429.2L419.0 427.5L420.7 425.7L419.9 423.8L419.1 421.9L418.6 419.9L417.9 417.8L417.0 416.4L416.1 415.0L415.3 413.5L414.9 412.0L414.4 410.3L413.8 408.7L412.8 406.9L412.1 405.2L411.2 403.6L411.1 401.8L410.8 400.2Z"/>
<path fill="#217a37" d="M415.8 459.6L417.6 459.3L419.5 459.1L419.6 460.8L419.8 462.6L420.3 464.3L421.1 466.0L421.8 467.7L422.1 469.4L422.1 471.2L422.2 473.1L422.5 474.9L423.3 476.9L424.0 479.0L425.4 480.5L427.2 482.0L428.4 483.5L428.2 485.4L428.3 487.2L426.6 486.6L425.6 485.1L423.7 483.6L422.2 482.1L421.4 480.3L420.4 478.4L419.2 476.4L418.6 474.0L418.4 471.7L418.2 469.8L417.6 468.0L417.3 466.3L417.2 464.7L417.1 463.1L416.6 461.5Z"/>
<path fill="#217a37" d="M405.6 466.2L406.6 464.7L407.6 462.6L408.7 460.5L410.1 461.7L409.2 464.1L408.3 466.4L408.9 468.5L409.0 470.6L407.4 469.7L406.5 467.8Z"/>
<path fill="#217a37" d="M410.4 482.5L411.3 483.5L412.7 484.6L411.7 485.8L410.8 484.2Z"/>
<path fill="#217a37" d="M432.9 388.2L434.5 387.7L435.8 386.9L436.9 388.4L437.7 389.8L438.3 391.2L439.0 392.5L440.9 393.8L442.6 395.1L442.5 398.0L444.4 398.4L446.4 398.6L445.9 400.3L445.2 402.3L445.4 404.0L446.0 405.9L447.0 407.7L448.5 408.7L449.4 409.7L450.1 410.7L451.5 409.0L452.1 410.4L453.3 412.0L454.5 413.6L455.3 415.4L456.2 416.9L457.5 418.3L458.8 419.4L459.8 420.4L458.7 421.9L457.2 423.0L455.8 424.3L454.5 425.7L453.3 427.2L451.6 426.0L449.7 424.6L448.9 422.5L447.6 420.3L445.7 422.7L443.9 422.0L442.0 421.4L442.1 420.2L442.4 419.0L443.0 417.5L443.7 415.7L442.3 414.8L440.5 413.8L438.0 414.9L436.3 415.7L434.4 415.3L432.6 415.4L430.3 415.6L428.2 414.6L426.9 413.5L425.8 412.2L425.3 410.2L424.5 407.9L426.1 406.6L427.9 405.6L430.2 406.7L431.6 407.8L433.1 406.4L434.5 404.5L435.6 402.9L436.0 401.4L436.5 399.8L437.2 398.0L438.1 396.2L435.7 395.5L433.7 395.1L433.8 393.2L433.9 391.3L433.6 389.7Z"/>
<path fill="#5fa45c" d="M427.9 402.7L429.4 401.3L430.9 400.0L432.3 399.0L433.6 398.1L435.0 397.0L436.2 399.4L436.9 402.0L436.2 403.6L435.3 405.2L434.0 406.7L432.6 408.0L431.3 406.6L430.0 404.6Z"/>
<path fill="#5fa45c" d="M439.8 405.6L441.3 404.6L443.0 403.5L444.7 402.3L445.5 403.8L446.9 405.5L448.7 407.1L449.7 408.6L450.2 410.1L448.8 411.5L447.4 412.9L446.0 414.2L445.3 413.0L444.0 411.8L442.4 410.5L441.5 408.8L440.7 407.1Z"/>
<path fill="#217a37" d="M429.9 421.2L432.9 422.4L434.6 424.6L431.6 423.3Z"/>
<path fill="#217a37" d="M456.3 428.4L459.3 429.4L460.3 431.4L461.3 433.3L459.5 432.9L458.7 431.4L457.6 429.9Z"/>
<path fill="#217a37" d="M445.1 446.2L446.8 445.5L448.8 444.9L450.9 445.1L452.9 445.5L454.7 445.9L455.8 447.1L456.8 448.4L458.2 449.7L459.7 451.0L460.8 452.2L461.8 453.3L463.4 454.7L464.8 456.6L463.4 457.9L461.7 456.7L459.8 455.8L458.4 454.9L456.8 454.1L455.0 453.0L453.3 452.0L452.0 451.2L450.9 450.6L449.1 451.1L446.4 448.9Z"/>
<path fill="#5fa45c" d="M448.3 439.0L451.1 439.1L452.2 440.9L453.9 442.4L452.4 444.5L450.4 443.5L448.9 442.4L448.6 440.8Z"/>
<path fill="#5fa45c" d="M453.4 434.6L456.0 434.4L456.4 436.4L456.8 438.2L454.1 438.4L453.9 436.5Z"/>
<path fill="#5fa45c" d="M459.0 438.1L460.7 438.5L462.2 439.1L462.8 440.4L461.4 439.9L459.8 439.6Z"/>
<path fill="#217a37" d="M452.6 460.6L454.0 461.2L455.5 461.8L456.9 463.1L458.1 464.4L459.0 465.6L460.0 466.9L461.4 468.2L462.8 469.3L463.8 470.4L464.6 471.4L465.4 472.6L466.9 471.5L468.4 470.7L470.4 472.6L472.0 474.4L473.1 475.9L474.4 477.3L475.5 478.8L476.7 479.8L478.0 480.8L479.7 481.9L481.3 482.9L482.6 484.0L482.8 485.5L483.1 487.0L481.7 486.3L480.4 485.7L478.8 485.1L476.9 484.5L475.1 483.6L473.6 482.7L472.4 481.7L470.9 480.8L469.2 480.2L467.6 479.4L465.7 478.4L464.5 476.9L463.2 475.4L462.2 474.2L461.6 473.2L460.8 472.0L459.7 470.7L458.5 469.2L457.6 467.8L456.8 466.4L455.8 464.9L454.6 463.5L453.5 462.0Z"/>
<path fill="#5fa45c" d="M468.2 480.4L470.3 481.3L472.5 481.9L473.2 483.7L474.3 485.4L475.8 487.1L473.7 486.9L471.7 486.5L470.7 484.9L469.9 483.4L469.1 482.0Z"/>
<path fill="#217a37" d="M475.1 488.9L476.8 489.3L478.6 489.4L480.8 489.3L482.4 490.2L483.8 491.4L485.2 492.7L486.8 493.9L488.4 494.8L489.7 495.6L490.6 496.5L491.7 497.4L493.2 498.3L494.8 499.4L496.5 500.4L498.0 501.4L499.7 502.5L499.8 505.5L498.1 504.9L496.4 504.4L495.2 503.8L493.9 503.3L492.3 502.6L490.3 501.9L488.5 501.2L487.2 500.4L486.3 499.5L485.0 498.5L483.4 497.5L481.9 496.4L480.7 495.3L479.4 494.2L478.1 492.7L476.9 491.5L476.1 490.3Z"/>
<path fill="#cc1719" d="M485.8 502.7L487.6 503.2L489.8 503.8L491.9 504.3L493.6 504.5L494.9 504.6L496.2 504.5L497.8 504.4L499.8 504.4L499.9 506.4L500.0 508.4L500.1 510.5L500.2 512.6L498.6 511.6L497.0 510.6L495.1 510.0L493.0 509.7L491.3 509.3L489.9 508.3L487.8 507.0L486.6 504.7Z"/>
<path fill="#217a37" d="M479.2 508.9L480.8 508.2L482.8 507.8L484.6 509.1L486.3 510.5L487.4 511.7L488.1 512.8L486.8 513.1L485.6 513.5L483.8 512.8L481.6 512.0L480.2 510.3Z"/>
<path fill="#217a37" d="M489.2 515.4L491.3 515.8L492.9 516.3L494.4 516.7L496.0 517.2L498.0 517.7L499.9 518.2L499.6 519.9L499.6 521.7L499.8 523.4L500.2 525.0L500.5 526.6L500.5 528.5L499.0 527.2L497.2 526.3L495.7 525.5L494.5 524.8L493.1 523.9L491.6 522.9L491.1 521.0L490.7 519.1L490.1 517.2Z"/>
<path fill="#5fa45c" d="M446.6 497.3L447.9 497.1L449.2 497.0L449.2 498.7L449.9 500.2L450.8 501.7L451.5 503.4L449.5 504.8L448.3 502.9L447.2 500.9L446.8 499.0Z"/>
<path fill="#5fa45c" d="M455.5 495.7L458.9 495.6L459.0 497.4L459.0 499.6L459.3 502.0L458.2 503.9L457.5 505.4L455.6 503.8L454.2 502.2L454.5 500.3L454.9 497.9Z"/>
<path fill="#5fa45c" d="M438.7 504.2L439.8 504.0L440.9 505.4L442.3 506.9L444.1 508.2L445.7 509.2L444.8 510.2L443.5 509.4L442.0 508.3L440.6 506.9L439.6 505.5Z"/>
<path fill="#5fa45c" d="M466.3 490.4L467.7 489.9L469.3 491.5L470.7 493.1L471.6 494.4L472.2 495.6L473.1 496.7L472.0 497.5L471.1 496.3L470.5 495.1L469.5 493.7L467.9 492.0Z"/>
<path fill="#5fa45c" d="M453.1 512.8L454.8 513.7L457.1 514.4L458.7 515.4L460.0 516.5L461.0 517.6L462.3 518.8L463.8 520.0L465.3 521.1L466.8 522.3L467.9 524.4L466.4 523.6L465.0 522.9L463.5 522.2L462.0 521.4L460.4 520.6L459.0 519.8L458.0 518.3L456.8 516.9L455.3 515.5L454.0 514.2Z"/>
<path fill="#5fa45c" d="M461.6 528.6L463.4 528.3L465.2 528.3L466.8 528.6L467.5 530.1L468.4 531.5L469.7 532.8L471.2 533.9L472.4 535.1L473.2 536.4L473.9 537.6L474.9 538.9L476.2 540.1L477.3 541.3L477.8 542.7L478.5 544.0L479.5 545.2L480.5 546.6L481.2 548.3L481.8 550.1L482.9 551.8L484.7 552.8L486.3 553.7L487.3 554.7L488.1 555.6L489.2 556.5L490.8 557.4L492.2 558.3L493.3 559.2L494.4 560.0L495.8 560.8L497.3 561.5L498.5 562.3L499.5 563.3L499.6 565.3L499.9 567.4L500.4 569.4L498.8 568.4L497.4 567.4L496.2 566.4L494.9 565.7L493.4 565.1L491.8 564.6L490.4 563.8L489.1 562.8L487.4 561.7L486.1 560.2L485.2 558.8L484.7 557.4L484.2 556.2L483.2 554.9L481.9 553.6L480.6 552.2L479.8 550.8L479.0 549.3L478.0 547.9L476.8 546.7L475.8 545.6L475.1 544.3L474.3 542.9L473.2 541.4L472.2 539.9L471.6 538.6L471.2 537.2L470.0 536.0L468.1 534.8L466.4 533.6L465.3 532.3L464.3 530.9L463.0 529.6Z"/>
<path fill="#217a37" d="M471.9 524.4L473.0 525.9L474.3 527.2L476.0 528.2L477.6 529.1L478.9 530.3L476.7 531.5L475.8 530.1L474.6 529.0L473.4 527.7L472.6 526.1Z"/>
<path fill="#217a37" d="M483.2 531.1L484.5 532.2L485.8 533.1L487.2 533.8L488.8 534.6L490.5 535.3L492.1 536.0L493.3 536.7L494.5 537.5L495.9 538.2L497.6 539.0L499.2 539.7L500.4 540.5L500.2 542.4L499.9 544.2L499.8 546.2L498.4 545.0L497.3 544.1L496.2 543.3L494.8 542.5L493.3 541.6L492.0 540.6L491.1 539.6L490.2 538.5L489.0 537.5L487.5 536.5L486.1 535.2L485.1 533.9L484.2 532.6Z"/>
<path fill="#5fa45c" d="M484.5 539.8L485.9 541.2L486.7 542.6L487.3 544.2L488.6 545.8L490.4 547.2L491.9 548.2L492.8 549.3L490.9 549.6L489.7 548.3L488.0 546.8L486.9 545.0L486.4 543.1L485.8 541.4Z"/>
<path fill="#fdbc57" d="M647.6 709.6L649.5 709.5L651.3 709.4L652.7 709.0L654.2 709.3L656.1 709.5L658.5 709.6L658.8 711.1L658.9 713.0L657.3 714.3L655.6 715.5L653.3 715.2L650.7 715.0L648.5 714.8L648.3 713.1L648.1 711.4Z"/>
<path fill="#217a37" d="M695.6 707.1L697.3 706.5L698.8 705.9L700.5 705.5L702.3 706.3L704.3 707.1L706.0 707.8L707.3 708.3L708.6 708.7L710.1 709.2L711.7 709.8L713.1 710.3L714.5 710.9L715.8 711.4L717.5 711.8L719.5 712.0L721.3 712.2L722.5 712.5L723.6 713.0L724.9 713.7L726.6 714.4L728.3 715.4L729.9 716.2L731.3 716.9L732.7 717.5L734.3 718.1L735.9 718.7L734.8 720.8L733.0 720.2L731.1 719.6L729.5 718.8L728.2 718.0L726.7 717.1L724.8 716.2L722.9 715.5L721.5 715.1L720.3 714.9L718.8 714.9L716.9 714.9L714.9 714.6L713.4 714.1L711.8 713.3L709.9 712.6L707.8 711.9L705.9 711.5L704.5 711.4L703.2 711.3L701.5 710.9L699.1 710.3L697.0 708.6Z"/>
<path fill="#217a37" stroke="#000" stroke-width="1.4" d="M754.1 711.1L755.5 710.1L757.2 709.3L759.1 707.9L760.9 708.4L762.3 709.5L763.9 710.8L765.4 712.0L766.1 713.0L766.9 713.8L768.3 714.7L770.1 715.7L771.3 716.9L772.2 719.8L769.8 721.4L768.5 722.1L767.0 721.0L764.2 719.7L761.6 718.6L759.7 717.7L758.3 717.1L756.7 715.7L755.1 714.5L754.9 712.6Z"/>
<path fill="#217a37" stroke="#000" stroke-width="1.4" d="M766.8 722.6L768.0 722.8L768.8 722.9L769.6 722.5L771.2 721.5L773.1 720.2L774.9 721.1L776.4 721.9L775.2 723.9L774.1 725.7L773.3 726.8L772.0 726.7L770.2 726.5L767.9 726.2L767.1 724.3Z"/>
<path fill="#217a37" stroke="#000" stroke-width="1.4" d="M743.9 710.8L746.3 711.4L746.9 713.1L748.2 714.4L750.0 715.3L751.4 716.3L749.1 718.4L747.7 717.4L745.8 716.4L744.2 715.3L743.9 713.2Z"/>
<circle cx="753.3" cy="720.3" r="1.5" fill="#000"/>
<circle cx="759.5" cy="722.0" r="1.5" fill="#000"/>
</g></svg>
<div id="tip"></div>
<div id="tiptitle">Dubrovačko-neretvanska - Dubrovnik</div>
<div id="gbox"><div class="t">Razina transparetnosti<br><span>proračuna&nbsp; 2021.</span></div><div class="l"></div><div class="n">5</div></div>
<div class="yr" style="left:691.5px">2015.</div>
<div class="yr" style="left:736.5px">2016.</div>
<div class="yr" style="left:781.5px">2017.</div>
<div class="yr" style="left:826.7px">2018.</div>
<div class="yr" style="left:871.7px">2019.</div>
<div class="yr" style="left:916.8px">2020.</div>
<div class="yr" style="left:962.1px">2021.</div>
<div class="rl" style="top:514px">Godišnji izvještaj</div>
<div class="band" style="top:539px"></div>
<div class="rl" style="top:550px">Izglasani proračun</div>
<div class="rl" style="top:586px">Polugodišnji izvještaj</div>
<div class="band" style="top:611px"></div>
<div class="rl" style="top:622px">Prijedlog proračuna</div>
<div class="rl" style="top:658px">Proračunski vodič</div>
<svg width="1155" height="872" viewBox="0 0 1155 872" style="z-index:5"><g fill="none" stroke="#217a37" stroke-width="3.6" stroke-linecap="butt" stroke-linejoin="miter"><path d="M708.2 520.2L713.6 526.6L721.6 515.0"/><path d="M753.2 520.2L758.6 526.6L766.6 515.0"/><path d="M798.2 520.2L803.6 526.6L811.6 515.0"/><path d="M843.4 520.2L848.8 526.6L856.8 515.0"/><path d="M888.4 520.2L893.8 526.6L901.8 515.0"/><path d="M933.5 520.2L938.9 526.6L946.9 515.0"/><path d="M978.8 520.2L984.2 526.6L992.2 515.0"/><path d="M708.2 556.2L713.6 562.6L721.6 551.0"/><path d="M753.2 556.2L758.6 562.6L766.6 551.0"/><path d="M798.2 556.2L803.6 562.6L811.6 551.0"/><path d="M843.4 556.2L848.8 562.6L856.8 551.0"/><path d="M888.4 556.2L893.8 562.6L901.8 551.0"/><path d="M933.5 556.2L938.9 562.6L946.9 551.0"/><path d="M978.8 556.2L984.2 562.6L992.2 551.0"/><path d="M708.2 592.2L713.6 598.6L721.6 587.0"/><path d="M753.2 592.2L758.6 598.6L766.6 587.0"/><path d="M798.2 592.2L803.6 598.6L811.6 587.0"/><path d="M843.4 592.2L848.8 598.6L856.8 587.0"/><path d="M888.4 592.2L893.8 598.6L901.8 587.0"/><path d="M933.5 592.2L938.9 598.6L946.9 587.0"/><path d="M978.8 592.2L984.2 598.6L992.2 587.0"/><path d="M708.2 628.2L713.6 634.6L721.6 623.0"/><path d="M753.2 628.2L758.6 634.6L766.6 623.0"/><path d="M798.2 628.2L803.6 634.6L811.6 623.0"/><path d="M843.4 628.2L848.8 634.6L856.8 623.0"/><path d="M888.4 628.2L893.8 634.6L901.8 623.0"/><path d="M933.5 628.2L938.9 634.6L946.9 623.0"/><path d="M978.8 628.2L984.2 634.6L992.2 623.0"/><path d="M708.2 664.2L713.6 670.6L721.6 659.0"/><path d="M798.2 664.2L803.6 670.6L811.6 659.0"/><path d="M843.4 664.2L848.8 670.6L856.8 659.0"/><path d="M888.4 664.2L893.8 670.6L901.8 659.0"/><path d="M933.5 664.2L938.9 670.6L946.9 659.0"/><path d="M978.8 664.2L984.2 670.6L992.2 659.0"/></g><g stroke="#cc1719" stroke-width="2.9" fill="none"><path d="M753.2 658.2L766.8 671.8M766.8 658.2L753.2 671.8"/></g></svg>
<div id="toolbar"></div>
<svg width="1155" height="872" viewBox="0 0 1155 872" id="tbicons" style="z-index:3">
<g fill="none" stroke="#5e5e5e" stroke-width="1.05">
<path d="M147.4 850.9v5M144.9 853.4h5"/>
<path d="M147.4 844.9v3.4M145.7 846.6h3.4M147.4 858.5v3.4M145.7 860.2h3.4M138.4 853.4h3.4M140.1 851.7v3.4M153 853.4h3.4M154.7 851.7v3.4"/>
<path d="M143.3 847.5v3.8M141.4 849.4h3.8M151.6 847.5v3.8M149.7 849.4h3.8M143.3 855.7v3.8M141.4 857.6h3.8M151.6 855.7v3.8M149.7 857.6h3.8"/>
</g>
<g fill="none" stroke="#b9b9b9" stroke-width="1.2">
<path d="M808.2 853.4H795.2M800.8 847.8L795.2 853.4L800.8 859"/>
<path d="M834.8 853.4H847.8M842.2 847.8L847.8 853.4L842.2 859"/>
<path d="M875.3 846.4V860.2M890 853.4H877.8M883.4 847.8L877.8 853.4L883.4 859"/>
</g>
<g fill="none" stroke="#5a5a5a" stroke-width="1.25">
<circle cx="926" cy="849.4" r="2.6"/><circle cx="918.6" cy="854" r="2.6"/><circle cx="926" cy="858.7" r="2.6"/>
<path d="M920.8 852.6L923.8 850.8M920.8 855.4L923.8 857.3"/>
<path d="M958 854.4H954.6V846.6H968.6V854.4H965.2M961.6 849.6V857.5"/>
<path d="M997 847H993.4V850.2M1007.3 847H1010.9V850.2M997 860.2H993.4V857M1007.3 860.2H1010.9V857"/>
<rect x="996.6" y="850" width="11.1" height="7.2"/>
</g>
<path d="M958.6 857.1H964.6L961.6 860.8Z" fill="#5a5a5a"/>
</svg>
<div id="tlogo"><span style="left:161.3px;top:844.4px;font-size:19px">+</span><span style="left:177.4px">a</span><span style="left:191.3px">b</span><span style="left:204.6px">l</span><span style="left:213.3px">e</span><span style="left:226.6px">a</span><span style="left:239.8px">u</span></div>

</div>
</body></html>
